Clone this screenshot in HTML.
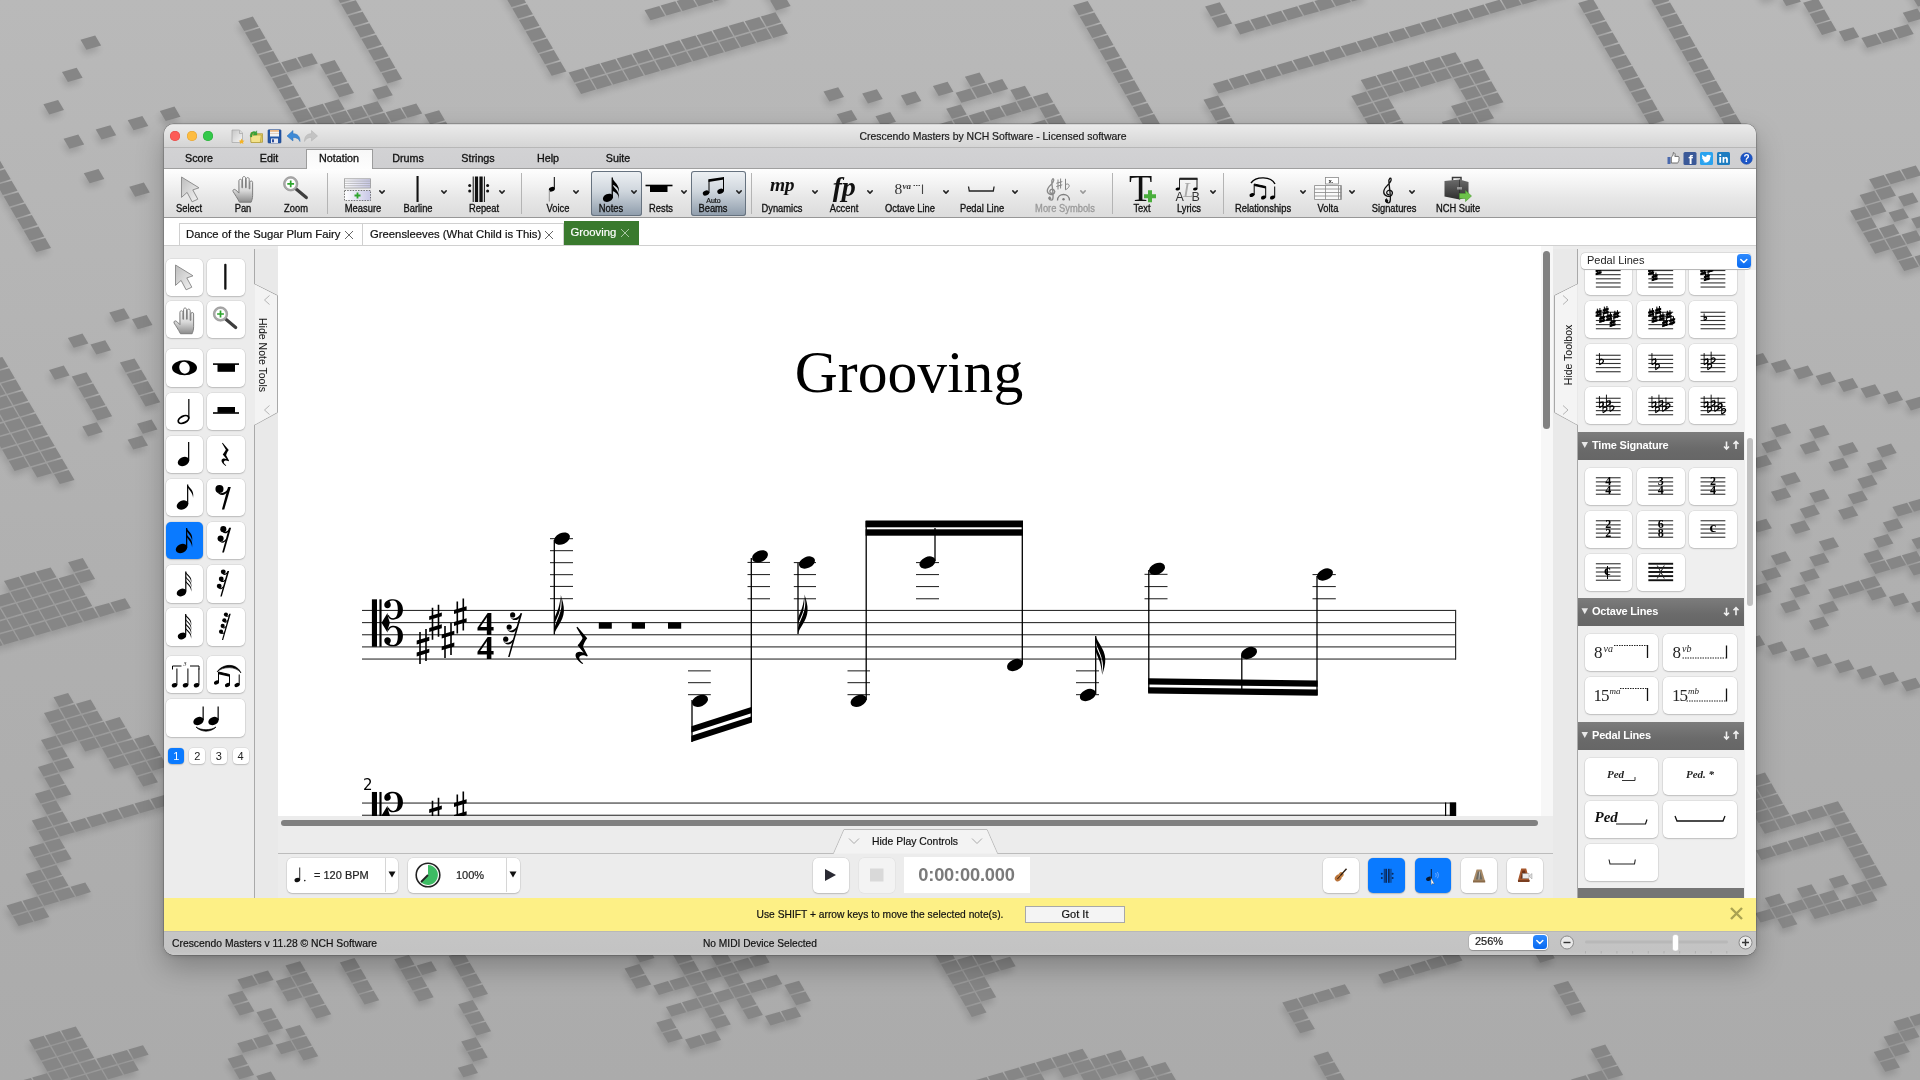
<!DOCTYPE html><html><head><meta charset="utf-8"><title>Crescendo Masters</title><style>
*{box-sizing:border-box;margin:0;padding:0}
html,body{width:1920px;height:1080px;overflow:hidden}
body{background:#b9b9b9;font-family:"Liberation Sans",sans-serif;position:relative;color:#111}
.abs{position:absolute}
#bg{position:absolute;left:0;top:0;width:1920px;height:1080px}
#win{position:absolute;left:164px;top:124px;width:1592px;height:831px;border-radius:10px;overflow:hidden;box-shadow:0 0 0 .5px rgba(0,0,0,.3),0 12px 28px rgba(0,0,0,.26),0 1px 5px rgba(0,0,0,.14);background:#ececec}
#in{position:absolute;left:-164px;top:-124px;width:1920px;height:1080px;will-change:transform}
.t{position:absolute;white-space:nowrap;line-height:1}
.c{transform:translateX(-50%)}
.btn{position:absolute;background:#fff;border-radius:5px;box-shadow:0 0 0 .5px rgba(0,0,0,.10),0 1px 1.5px rgba(0,0,0,.16)}
.btn.on{background:#0a7aff}
svg{position:absolute;overflow:visible}
</style></head><body><svg id="bg" width="1920" height="1080" viewBox="0 0 1920 1080"><defs><linearGradient id="bgg" x1="0" y1="0" x2="0" y2="1"><stop offset="0" stop-color="#b9b9b9"/><stop offset=".53" stop-color="#b0b0b0"/><stop offset="1" stop-color="#ababab"/></linearGradient><filter id="bl" x="-5%" y="-5%" width="110%" height="110%"><feGaussianBlur stdDeviation="3"/></filter></defs><rect width="1920" height="1080" fill="url(#bgg)"/><path d="M16.2 1082.1L30.9 1077.9L36.4 1087.4L21.8 1091.7ZM32.2 1077.5L46.9 1073.2L52.5 1082.7L37.8 1087.0ZM29.1 1040.1L43.7 1035.8L49.3 1045.3L34.7 1049.6ZM35.5 1051.0L50.1 1046.7L55.7 1056.3L41.1 1060.5ZM41.9 1061.9L56.5 1057.6L62.1 1067.2L47.4 1071.4ZM48.2 1072.8L62.9 1068.5L68.5 1078.1L53.8 1082.3ZM45.1 1035.4L59.8 1031.1L65.4 1040.7L50.7 1045.0ZM51.5 1046.3L66.2 1042.1L71.7 1051.6L57.1 1055.9ZM57.9 1057.2L72.5 1053.0L78.1 1062.5L63.5 1066.8ZM64.3 1068.1L78.9 1063.9L84.5 1073.4L69.8 1077.7ZM70.6 1079.0L85.3 1074.8L90.9 1084.3L76.2 1088.6ZM61.1 1030.7L75.8 1026.5L81.4 1036.0L66.7 1040.3ZM67.5 1041.7L82.2 1037.4L87.8 1046.9L73.1 1051.2ZM73.9 1052.6L88.6 1048.3L94.2 1057.8L79.5 1062.1ZM80.3 1063.5L94.9 1059.2L100.5 1068.7L85.9 1073.0ZM86.7 1074.4L101.3 1070.1L106.9 1079.6L92.2 1083.9ZM6.5 905.4L21.2 901.1L26.8 910.8L12.2 915.0ZM13.0 916.4L27.6 912.1L33.3 921.8L18.6 926.0ZM96.3 1058.8L111.0 1054.5L116.5 1064.1L101.9 1068.3ZM102.7 1069.7L117.3 1065.4L122.9 1075.0L108.3 1079.2ZM22.6 900.7L37.2 896.5L42.9 906.1L28.2 910.4ZM29.0 911.7L43.7 907.5L49.3 917.1L34.6 921.4ZM112.3 1054.2L127.0 1049.9L132.6 1059.4L117.9 1063.7ZM118.7 1065.0L133.4 1060.8L138.9 1070.3L124.3 1074.6ZM25.7 874.0L40.3 869.8L46.0 879.4L31.3 883.7ZM32.1 885.1L46.8 880.8L52.4 890.4L37.8 894.7ZM38.6 896.1L53.2 891.8L58.9 901.5L44.2 905.7ZM128.4 1049.5L143.0 1045.2L148.6 1054.8L133.9 1059.0ZM28.8 847.3L43.4 843.0L49.1 852.7L34.4 857.0ZM35.2 858.3L49.9 854.1L55.5 863.7L40.9 868.0ZM41.7 869.4L56.4 865.1L62.0 874.8L47.3 879.0ZM48.1 880.4L62.8 876.1L68.5 885.8L53.8 890.0ZM54.6 891.4L69.3 887.2L74.9 896.8L60.2 901.1ZM31.8 820.5L46.5 816.3L52.2 825.9L37.5 830.2ZM38.3 831.6L53.0 827.3L58.6 837.0L44.0 841.3ZM44.8 842.6L59.5 838.4L65.1 848.0L50.4 852.3ZM51.3 853.7L65.9 849.4L71.6 859.1L56.9 863.3ZM70.6 886.8L85.3 882.5L90.9 892.1L76.3 896.4ZM34.9 793.7L49.6 789.5L55.2 799.2L40.6 803.4ZM41.4 804.8L56.0 800.5L61.7 810.2L47.1 814.5ZM47.9 815.9L62.5 811.6L68.2 821.3L53.5 825.5ZM54.3 826.9L69.0 822.7L74.7 832.3L60.0 836.6ZM37.9 766.9L52.6 762.6L58.3 772.3L43.6 776.6ZM44.4 778.0L59.1 773.7L64.8 783.4L50.1 787.7ZM50.9 789.1L65.6 784.8L71.3 794.5L56.6 798.8ZM70.4 822.3L85.0 818.0L90.7 827.7L76.0 831.9ZM-17.8 639.7L-3.1 635.4L2.6 645.2L-12.1 649.5ZM41.0 740.0L55.6 735.8L61.3 745.5L46.7 749.7ZM47.5 751.1L62.1 746.9L67.8 756.6L53.2 760.8ZM54.0 762.2L68.6 758.0L74.3 767.7L59.6 771.9ZM86.4 817.6L101.0 813.4L106.7 823.0L92.1 827.3ZM227.6 1058.8L242.2 1054.6L247.8 1064.1L233.1 1068.3ZM233.9 1069.7L248.6 1065.4L254.1 1074.9L239.5 1079.2ZM-21.5 601.4L-6.8 597.2L-1.1 607.0L-15.7 611.2ZM-14.9 612.6L-0.2 608.4L5.5 618.2L-9.2 622.4ZM-8.3 623.8L6.3 619.6L12.1 629.4L-2.6 633.6ZM-1.8 635.0L12.9 630.8L18.6 640.6L3.9 644.8ZM44.0 713.1L58.6 708.9L64.3 718.6L49.7 722.9ZM50.5 724.3L65.1 720.0L70.8 729.7L56.2 734.0ZM57.0 735.4L71.6 731.1L77.3 740.8L62.7 745.1ZM102.4 813.0L117.1 808.7L122.7 818.4L108.1 822.6ZM237.2 1043.3L251.9 1039.0L257.4 1048.5L242.8 1052.8ZM256.3 1075.9L270.9 1071.6L276.5 1081.1L261.8 1085.4ZM-5.4 596.8L9.2 592.5L15.0 602.3L0.3 606.6ZM1.1 608.0L15.8 603.7L21.5 613.5L6.9 617.8ZM7.7 619.2L22.4 614.9L28.1 624.7L13.4 629.0ZM14.2 630.4L28.9 626.1L34.6 635.9L20.0 640.2ZM53.5 697.3L68.1 693.1L73.8 702.8L59.2 707.1ZM60.0 708.5L74.6 704.2L80.3 714.0L65.7 718.2ZM66.5 719.6L81.2 715.3L86.9 725.1L72.2 729.3ZM73.0 730.7L87.7 726.5L93.4 736.2L78.7 740.4ZM79.5 741.8L94.2 737.6L99.9 747.3L85.2 751.5ZM118.4 808.3L133.1 804.0L138.8 813.7L124.1 818.0ZM227.7 995.0L242.4 990.8L248.0 1000.3L233.3 1004.6ZM234.1 1005.9L248.8 1001.7L254.4 1011.2L239.7 1015.5ZM253.2 1038.6L267.9 1034.3L273.5 1043.9L258.8 1048.1ZM4.0 580.9L18.7 576.7L24.4 586.5L9.8 590.7ZM10.6 592.1L25.3 587.9L31.0 597.7L16.3 601.9ZM17.2 603.3L31.8 599.1L37.6 608.9L22.9 613.1ZM23.7 614.5L38.4 610.3L44.1 620.1L29.4 624.3ZM30.3 625.7L44.9 621.5L50.7 631.3L36.0 635.5ZM76.0 703.8L90.7 699.6L96.4 709.3L81.7 713.6ZM82.5 714.9L97.2 710.7L102.9 720.4L88.2 724.7ZM89.0 726.1L103.7 721.8L109.4 731.5L94.7 735.8ZM95.5 737.2L110.2 732.9L115.9 742.6L101.2 746.9ZM102.0 748.3L116.7 744.0L122.4 753.7L107.7 758.0ZM108.5 759.4L123.2 755.1L128.9 764.8L114.2 769.1ZM134.5 803.6L149.1 799.4L154.8 809.0L140.1 813.3ZM237.4 979.4L252.0 975.2L257.6 984.7L242.9 989.0ZM256.5 1012.2L271.2 1007.9L276.7 1017.4L262.1 1021.7ZM262.9 1023.1L277.5 1018.8L283.1 1028.3L268.5 1032.6ZM275.6 1044.8L290.3 1040.5L295.8 1050.1L281.2 1054.3ZM20.0 576.3L34.7 572.0L40.5 581.8L25.8 586.1ZM26.6 587.5L41.3 583.2L47.0 593.0L32.4 597.3ZM33.2 598.7L47.8 594.4L53.6 604.2L38.9 608.5ZM39.7 609.9L54.4 605.6L60.1 615.4L45.5 619.7ZM46.3 621.1L61.0 616.8L66.7 626.6L52.0 630.9ZM105.1 721.4L119.7 717.1L125.4 726.9L110.7 731.1ZM111.6 732.5L126.2 728.3L131.9 738.0L117.2 742.2ZM118.1 743.6L132.7 739.4L138.4 749.1L123.7 753.3ZM124.6 754.7L139.2 750.4L144.9 760.1L130.2 764.4ZM131.0 765.8L145.7 761.5L151.4 771.2L136.7 775.5ZM137.5 776.9L152.2 772.6L157.9 782.3L143.2 786.5ZM150.5 799.0L165.1 794.7L170.8 804.4L156.1 808.6ZM253.4 974.8L268.0 970.5L273.6 980.1L259.0 984.3ZM285.3 1029.3L299.9 1025.0L305.5 1034.5L290.8 1038.8ZM291.6 1040.2L306.3 1035.9L311.9 1045.4L297.2 1049.7ZM298.0 1051.0L312.6 1046.7L318.2 1056.2L303.6 1060.5ZM36.1 571.6L50.7 567.4L56.5 577.2L41.8 581.4ZM42.6 582.8L57.3 578.6L63.0 588.4L48.4 592.6ZM49.2 594.0L63.9 589.8L69.6 599.6L54.9 603.8ZM55.8 605.2L70.4 601.0L76.2 610.8L61.5 615.0ZM62.3 616.4L77.0 612.2L82.7 621.9L68.0 626.2ZM134.1 739.0L148.7 734.7L154.4 744.4L139.8 748.7ZM140.6 750.0L155.2 745.8L160.9 755.5L146.3 759.7ZM147.1 761.1L161.7 756.9L167.4 766.6L152.7 770.8ZM275.8 981.0L290.4 976.8L296.0 986.3L281.4 990.6ZM282.2 991.9L296.8 987.7L302.4 997.2L287.7 1001.5ZM-27.1 431.8L-12.5 427.5L-6.7 437.4L-21.3 441.7ZM-20.5 443.1L-5.8 438.8L-0.0 448.7L-14.7 453.0ZM58.7 578.2L73.3 573.9L79.1 583.7L64.4 588.0ZM65.2 589.4L79.9 585.1L85.6 594.9L71.0 599.2ZM71.8 600.6L86.5 596.3L92.2 606.1L77.5 610.4ZM78.3 611.8L93.0 607.5L98.7 617.3L84.1 621.5ZM285.4 965.4L300.1 961.2L305.7 970.7L291.0 975.0ZM291.8 976.4L306.5 972.1L312.0 981.6L297.4 985.9ZM298.2 987.3L312.8 983.0L318.4 992.5L303.8 996.8ZM304.6 998.2L319.2 993.9L324.8 1003.4L310.1 1007.7ZM310.9 1009.1L325.6 1004.8L331.2 1014.3L316.5 1018.6ZM-24.4 404.5L-9.7 400.2L-3.9 410.1L-18.6 414.4ZM-17.7 415.8L-3.1 411.5L2.7 421.4L-11.9 425.7ZM-11.1 427.1L3.6 422.9L9.4 432.8L-5.3 437.0ZM-4.5 438.4L10.2 434.2L16.0 444.1L1.3 448.3ZM2.2 449.7L16.8 445.5L22.6 455.4L7.9 459.6ZM8.8 461.0L23.4 456.8L29.2 466.6L14.6 470.9ZM68.1 562.3L82.8 558.1L88.5 567.9L73.9 572.1ZM74.7 573.5L89.4 569.3L95.1 579.1L80.4 583.3ZM94.4 607.1L109.0 602.9L114.8 612.6L100.1 616.9ZM-15.0 388.5L-0.3 384.2L5.5 394.1L-9.2 398.4ZM-8.3 399.8L6.3 395.6L12.1 405.5L-2.5 409.7ZM-1.7 411.1L13.0 406.9L18.8 416.8L4.1 421.0ZM4.9 422.5L19.6 418.2L25.4 428.1L10.7 432.4ZM11.6 433.8L26.2 429.5L32.0 439.4L17.4 443.7ZM18.2 445.1L32.8 440.8L38.6 450.7L24.0 455.0ZM24.8 456.4L39.5 452.1L45.3 462.0L30.6 466.2ZM31.4 467.7L46.1 463.4L51.9 473.3L37.2 477.5ZM110.4 602.5L125.1 598.2L130.8 608.0L116.1 612.2ZM-12.3 361.1L2.4 356.9L8.2 366.8L-6.4 371.1ZM-5.6 372.5L9.1 368.2L14.9 378.2L0.2 382.4ZM1.0 383.8L15.7 379.6L21.5 389.5L6.9 393.7ZM7.7 395.2L22.3 390.9L28.2 400.8L13.5 405.1ZM14.3 406.5L29.0 402.2L34.8 412.1L20.1 416.4ZM21.0 417.8L35.6 413.6L41.4 423.5L26.8 427.7ZM27.6 429.1L42.2 424.9L48.0 434.8L33.4 439.0ZM34.2 440.4L48.9 436.2L54.7 446.1L40.0 450.3ZM40.8 451.7L55.5 447.5L61.3 457.3L46.6 461.6ZM47.4 463.0L62.1 458.8L67.9 468.6L53.2 472.9ZM54.1 474.3L68.7 470.0L74.5 479.9L59.8 484.1ZM339.9 962.4L354.5 958.1L360.1 967.6L345.4 971.9ZM346.2 973.3L360.9 969.0L366.5 978.5L351.8 982.8ZM352.6 984.2L367.3 979.9L372.8 989.4L358.2 993.7ZM359.0 995.0L373.6 990.8L379.2 1000.3L364.6 1004.6ZM49.1 369.9L63.8 365.6L69.6 375.6L54.9 379.8ZM82.3 426.5L96.9 422.2L102.7 432.1L88.1 436.4ZM394.3 959.2L408.9 955.0L414.5 964.5L399.9 968.8ZM400.7 970.1L415.3 965.9L420.9 975.4L406.2 979.7ZM407.0 981.0L421.7 976.8L427.3 986.3L412.6 990.6ZM413.4 991.9L428.1 987.6L433.6 997.2L419.0 1001.4ZM457.8 1067.8L472.5 1063.6L478.0 1073.0L463.4 1077.3ZM71.8 376.6L86.5 372.3L92.3 382.2L77.6 386.5ZM78.4 387.9L93.1 383.6L98.9 393.5L84.2 397.8ZM85.1 399.2L99.7 395.0L105.5 404.9L90.9 409.1ZM91.7 410.5L106.4 406.3L112.1 416.2L97.5 420.4ZM416.7 965.5L431.3 961.2L436.9 970.7L422.3 975.0ZM461.2 1041.5L475.8 1037.2L481.4 1046.7L466.7 1051.0ZM467.5 1052.3L482.2 1048.1L487.7 1057.5L473.1 1061.8ZM67.9 337.9L82.5 333.6L88.4 343.6L73.7 347.8ZM127.6 439.8L142.2 435.5L148.0 445.4L133.3 449.6ZM458.2 1004.3L472.8 1000.0L478.4 1009.5L463.7 1013.8ZM464.5 1015.2L479.2 1010.9L484.7 1020.4L470.1 1024.6ZM470.9 1026.0L485.5 1021.7L491.1 1031.2L476.4 1035.5ZM-23.2 150.5L-8.6 146.3L-2.7 156.3L-17.3 160.6ZM-16.5 162.0L-1.8 157.8L4.1 167.8L-10.6 172.0ZM-9.8 173.5L4.9 169.2L10.8 179.3L-3.9 183.5ZM-3.0 184.9L11.6 180.7L17.5 190.7L2.8 195.0ZM3.7 196.4L18.3 192.2L24.2 202.2L9.5 206.4ZM10.4 207.9L25.1 203.6L30.9 213.6L16.3 217.9ZM17.1 219.3L31.8 215.0L37.6 225.0L23.0 229.3ZM23.8 230.7L38.5 226.5L44.3 236.5L29.7 240.7ZM30.5 242.1L45.2 237.9L51.0 247.9L36.4 252.1ZM90.5 344.6L105.2 340.3L111.0 350.3L96.4 354.5ZM137.0 423.8L151.6 419.6L157.4 429.4L142.8 433.7ZM448.7 956.1L463.4 951.9L468.9 961.4L454.3 965.7ZM455.1 967.0L469.7 962.7L475.3 972.3L460.7 976.5ZM461.5 977.9L476.1 973.6L481.7 983.1L467.0 987.4ZM467.8 988.8L482.5 984.5L488.0 994.0L473.4 998.3ZM119.9 362.6L134.5 358.4L140.3 368.3L125.7 372.5ZM126.5 373.9L141.2 369.7L147.0 379.6L132.3 383.8ZM133.1 385.3L147.8 381.0L153.6 390.9L138.9 395.2ZM139.8 396.6L154.4 392.3L160.2 402.2L145.6 406.5ZM109.3 312.6L124.0 308.3L129.8 318.3L115.1 322.5ZM132.0 319.3L146.6 315.0L152.5 325.0L137.8 329.2ZM43.4 104.3L58.1 100.1L64.0 110.1L49.3 114.4ZM63.6 138.8L78.3 134.5L84.2 144.6L69.5 148.8ZM83.8 173.2L98.5 168.9L104.3 178.9L89.7 183.2ZM62.0 72.0L76.7 67.8L82.6 77.8L67.9 82.1ZM95.7 129.5L110.4 125.2L116.2 135.3L101.6 139.5ZM129.3 186.8L143.9 182.5L149.8 192.5L135.1 196.8ZM80.5 39.7L95.2 35.4L101.1 45.5L86.4 49.8ZM127.7 120.2L142.4 115.9L148.3 126.0L133.6 130.2ZM624.6 968.4L639.3 964.1L644.8 973.6L630.2 977.9ZM631.0 979.2L645.6 974.9L651.2 984.4L636.5 988.7ZM656.3 1022.5L671.0 1018.2L676.5 1027.7L661.8 1032.0ZM662.6 1033.3L677.3 1029.0L682.8 1038.5L668.2 1042.8ZM634.3 952.9L649.0 948.6L654.5 958.1L639.9 962.3ZM653.3 985.4L668.0 981.1L673.5 990.6L658.9 994.9ZM666.0 1007.0L680.7 1002.7L686.2 1012.2L671.5 1016.5ZM685.0 1039.4L699.6 1035.1L705.1 1044.6L690.5 1048.9ZM159.8 110.9L174.5 106.6L180.4 116.7L165.7 120.9ZM669.4 980.7L684.0 976.4L689.5 985.9L674.9 990.2ZM682.0 1002.3L696.7 998.1L702.2 1007.5L687.6 1011.8ZM701.0 1034.7L715.6 1030.5L721.1 1039.9L706.5 1044.2ZM672.7 954.3L687.3 950.1L692.9 959.5L678.2 963.8ZM679.0 965.2L693.7 960.9L699.2 970.4L684.6 974.7ZM685.4 976.0L700.0 971.7L705.6 981.2L690.9 985.5ZM691.7 986.8L706.4 982.6L711.9 992.0L697.2 996.3ZM698.0 997.7L712.7 993.4L718.2 1002.8L703.6 1007.1ZM704.4 1008.5L719.0 1004.2L724.5 1013.6L709.9 1017.9ZM710.7 1019.3L725.3 1015.0L730.8 1024.4L716.2 1028.7ZM701.4 971.3L716.0 967.0L721.6 976.5L706.9 980.8ZM714.0 993.0L728.7 988.7L734.2 998.1L719.6 1002.4ZM711.0 955.8L725.7 951.5L731.2 961.0L716.6 965.3ZM717.4 966.7L732.0 962.4L737.6 971.8L722.9 976.1ZM723.7 977.5L738.4 973.2L743.9 982.7L729.3 986.9ZM730.1 988.3L744.7 984.0L750.2 993.5L735.6 997.7ZM736.4 999.1L751.0 994.8L756.6 1004.3L741.9 1008.5ZM742.7 1009.9L757.3 1005.6L762.9 1015.1L748.2 1019.3ZM733.4 962.0L748.0 957.7L753.6 967.2L738.9 971.4ZM746.1 983.6L760.7 979.3L766.2 988.8L751.6 993.1ZM765.0 1016.0L779.7 1011.7L785.2 1021.1L770.5 1025.4ZM749.4 957.3L764.1 953.0L769.6 962.5L755.0 966.8ZM762.1 978.9L776.7 974.6L782.3 984.1L767.6 988.4ZM781.0 1011.3L795.7 1007.0L801.2 1016.5L786.5 1020.8ZM784.4 985.0L799.1 980.8L804.6 990.2L789.9 994.5ZM790.7 995.8L805.4 991.6L810.9 1001.0L796.2 1005.3ZM238.3 20.9L252.9 16.6L258.8 26.7L244.2 31.0ZM245.0 32.4L259.7 28.1L265.6 38.2L250.9 42.5ZM251.8 43.9L266.4 39.6L272.3 49.7L257.7 54.0ZM258.5 55.4L273.2 51.1L279.1 61.2L264.4 65.4ZM265.2 66.9L279.9 62.6L285.8 72.7L271.1 76.9ZM272.0 78.4L286.6 74.1L292.5 84.1L277.9 88.4ZM278.7 89.8L293.4 85.6L299.2 95.6L284.6 99.8ZM285.4 101.3L300.1 97.0L306.0 107.0L291.3 111.3ZM292.1 112.7L306.8 108.5L312.7 118.5L298.0 122.7ZM298.8 124.2L313.5 119.9L319.4 129.9L304.7 134.2ZM281.3 62.2L295.9 58.0L301.8 68.0L287.2 72.3ZM308.2 108.1L322.8 103.8L328.7 113.8L314.0 118.1ZM314.9 119.5L329.5 115.3L335.4 125.3L320.7 129.5ZM297.3 57.6L312.0 53.3L317.8 63.4L303.2 67.6ZM324.2 103.4L338.8 99.2L344.7 109.2L330.1 113.4ZM330.9 114.9L345.6 110.6L351.4 120.6L336.8 124.9ZM337.6 126.3L352.3 122.0L358.1 132.0L343.5 136.3ZM320.0 64.4L334.7 60.1L340.6 70.2L325.9 74.4ZM326.8 75.9L341.4 71.6L347.3 81.6L332.7 85.9ZM333.5 87.3L348.2 83.1L354.0 93.1L339.4 97.3ZM346.9 110.2L361.6 105.9L367.4 115.9L352.8 120.2ZM353.6 121.6L368.3 117.4L374.1 127.4L359.5 131.6ZM362.9 105.5L377.6 101.3L383.5 111.3L368.8 115.6ZM369.6 117.0L384.3 112.7L390.2 122.7L375.5 127.0ZM372.2 89.5L386.9 85.2L392.8 95.2L378.1 99.5ZM385.7 112.3L400.3 108.1L406.2 118.1L391.5 122.3ZM334.4 -7.0L349.1 -11.3L355.0 -1.2L340.3 3.1ZM341.2 4.5L355.8 0.2L361.7 10.3L347.1 14.6ZM347.9 16.0L362.6 11.7L368.5 21.8L353.8 26.0ZM354.7 27.5L369.3 23.2L375.2 33.3L360.5 37.5ZM361.4 39.0L376.0 34.7L381.9 44.7L367.3 49.0ZM368.1 50.4L382.8 46.2L388.7 56.2L374.0 60.5ZM374.8 61.9L389.5 57.6L395.4 67.7L380.7 71.9ZM381.6 73.3L396.2 69.1L402.1 79.1L387.4 83.4ZM401.7 107.7L416.3 103.4L422.2 113.4L407.5 117.7ZM971.9 1081.2L986.6 1076.9L992.1 1086.3L977.4 1090.6ZM424.4 114.4L439.1 110.2L444.9 120.2L430.3 124.4ZM431.1 125.8L445.8 121.6L451.6 131.6L437.0 135.8ZM987.9 1076.5L1002.6 1072.2L1008.1 1081.6L993.4 1085.9ZM934.8 953.6L949.4 949.3L955.0 958.8L940.3 963.1ZM941.1 964.4L955.8 960.1L961.3 969.6L946.6 973.9ZM947.4 975.2L962.1 970.9L967.6 980.3L952.9 984.6ZM953.7 986.0L968.4 981.7L973.9 991.1L959.2 995.4ZM960.0 996.7L974.7 992.4L980.2 1001.8L965.5 1006.1ZM966.3 1007.5L981.0 1003.2L986.5 1012.6L971.8 1016.9ZM1004.0 1071.8L1018.6 1067.5L1024.1 1076.9L1009.4 1081.2ZM957.1 959.7L971.8 955.4L977.3 964.9L962.6 969.2ZM963.4 970.5L978.1 966.2L983.6 975.6L968.9 979.9ZM969.7 981.3L984.4 977.0L989.9 986.4L975.2 990.7ZM976.0 992.0L990.7 987.7L996.2 997.2L981.5 1001.5ZM1020.0 1067.1L1034.6 1062.8L1040.1 1072.2L1025.4 1076.5ZM1026.2 1077.8L1040.9 1073.5L1046.3 1082.9L1031.7 1087.2ZM973.1 955.0L987.8 950.8L993.3 960.2L978.6 964.5ZM979.4 965.8L994.1 961.5L999.6 970.9L984.9 975.2ZM1036.0 1062.4L1050.6 1058.1L1056.1 1067.5L1041.4 1071.8ZM995.4 961.1L1010.1 956.8L1015.6 966.3L1001.0 970.5ZM1052.0 1057.7L1066.6 1053.4L1072.1 1062.8L1057.4 1067.1ZM1058.2 1068.4L1072.9 1064.1L1078.3 1073.5L1063.7 1077.8ZM1068.0 1053.0L1082.6 1048.7L1088.1 1058.1L1073.4 1062.4ZM1074.2 1063.7L1088.9 1059.4L1094.3 1068.8L1079.7 1073.1ZM1080.5 1074.4L1095.1 1070.1L1100.6 1079.5L1085.9 1083.8ZM1090.2 1059.0L1104.9 1054.7L1110.3 1064.1L1095.7 1068.4ZM1096.5 1069.7L1111.1 1065.4L1116.6 1074.8L1101.9 1079.1ZM1106.2 1054.3L1120.9 1050.0L1126.3 1059.4L1111.7 1063.7ZM1112.5 1065.0L1127.1 1060.7L1132.6 1070.1L1118.0 1074.4ZM498.9 -14.4L513.5 -18.7L519.4 -8.7L504.7 -4.4ZM505.6 -3.0L520.2 -7.2L526.1 2.8L511.5 7.1ZM512.3 8.5L527.0 4.2L532.9 14.3L518.2 18.5ZM519.0 20.0L533.7 15.7L539.6 25.7L524.9 30.0ZM525.7 31.4L540.4 27.2L546.3 37.2L531.6 41.4ZM532.5 42.9L547.1 38.6L553.0 48.6L538.3 52.9ZM539.2 54.3L553.8 50.0L559.7 60.0L545.0 64.3ZM545.9 65.7L560.5 61.5L566.4 71.5L551.7 75.7ZM1128.5 1060.3L1143.1 1056.0L1148.6 1065.4L1134.0 1069.7ZM1134.7 1071.0L1149.4 1066.7L1154.8 1076.0L1140.2 1080.3ZM1141.0 1081.7L1155.6 1077.4L1161.1 1086.7L1146.4 1091.0ZM568.6 72.5L583.2 68.2L589.1 78.2L574.4 82.5ZM575.3 83.9L589.9 79.6L595.8 89.6L581.1 93.9ZM1150.7 1066.3L1165.4 1062.0L1170.8 1071.3L1156.2 1075.6ZM1157.0 1077.0L1171.6 1072.7L1177.1 1082.0L1162.4 1086.3ZM584.6 67.8L599.3 63.6L605.1 73.5L590.5 77.8ZM591.3 79.2L606.0 75.0L611.8 84.9L597.1 89.2ZM600.6 63.2L615.3 58.9L621.1 68.9L606.5 73.1ZM607.3 74.6L622.0 70.3L627.8 80.3L613.2 84.5ZM616.6 58.5L631.3 54.2L637.2 64.2L622.5 68.5ZM623.3 69.9L638.0 65.6L643.8 75.6L629.2 79.9ZM632.7 53.8L647.3 49.6L653.2 59.5L638.5 63.8ZM639.4 65.2L654.0 61.0L659.9 70.9L645.2 75.2ZM648.7 49.2L663.3 44.9L669.2 54.9L654.5 59.1ZM655.4 60.6L670.0 56.3L675.9 66.3L661.2 70.5ZM644.6 10.2L659.3 6.0L665.1 16.0L650.5 20.2ZM664.7 44.5L679.4 40.2L685.2 50.2L670.6 54.5ZM671.4 55.9L686.0 51.6L691.9 61.6L677.2 65.9ZM660.6 5.6L675.3 1.3L681.1 11.3L666.5 15.6ZM680.7 39.8L695.4 35.6L701.2 45.5L686.6 49.8ZM687.4 51.2L702.1 47.0L707.9 56.9L693.3 61.2ZM676.6 0.9L691.3 -3.4L697.2 6.6L682.5 10.9ZM696.7 35.2L711.4 30.9L717.2 40.9L702.6 45.1ZM703.4 46.6L718.1 42.3L723.9 52.3L709.3 56.5ZM692.6 -3.8L707.3 -8.0L713.2 2.0L698.5 6.2ZM712.7 30.5L727.4 26.2L733.3 36.2L718.6 40.5ZM719.4 41.9L734.1 37.6L739.9 47.6L725.3 51.9ZM1282.3 1002.6L1296.9 998.3L1302.4 1007.7L1287.7 1012.0ZM1288.5 1013.3L1303.2 1009.0L1308.6 1018.3L1294.0 1022.6ZM1294.8 1024.0L1309.4 1019.7L1314.9 1029.0L1300.2 1033.3ZM1313.5 1055.9L1328.1 1051.6L1333.5 1060.9L1318.9 1065.2ZM1319.7 1066.6L1334.3 1062.3L1339.8 1071.6L1325.1 1075.9ZM1325.9 1077.2L1340.5 1072.9L1346.0 1082.2L1331.3 1086.5ZM708.7 -8.4L723.3 -12.7L729.2 -2.7L714.5 1.6ZM728.8 25.8L743.4 21.6L749.3 31.5L734.6 35.8ZM735.5 37.2L750.1 33.0L756.0 42.9L741.3 47.2ZM1298.3 997.9L1312.9 993.6L1318.4 1003.0L1303.7 1007.3ZM744.8 21.2L759.4 16.9L765.3 26.9L750.6 31.1ZM751.5 32.6L766.1 28.3L772.0 38.3L757.3 42.5ZM1314.3 993.2L1328.9 988.9L1334.4 998.2L1319.7 1002.6ZM760.8 16.5L775.5 12.2L781.3 22.2L766.7 26.5ZM767.5 27.9L782.1 23.6L788.0 33.6L773.3 37.9ZM1330.3 988.5L1344.9 984.2L1350.4 993.5L1335.7 997.8ZM763.4 -11.0L778.1 -15.3L783.9 -5.3L769.3 -1.0ZM770.1 0.4L784.8 -3.9L790.6 6.1L776.0 10.4ZM823.5 91.5L838.2 87.2L844.0 97.1L829.4 101.4ZM836.8 114.2L851.5 109.9L857.3 119.8L842.7 124.1ZM862.2 93.5L876.9 89.2L882.7 99.1L868.0 103.4ZM875.5 116.2L890.2 111.9L896.0 121.8L881.3 126.1ZM1378.3 974.4L1392.9 970.1L1398.4 979.4L1383.7 983.7ZM1394.3 969.7L1408.9 965.4L1414.4 974.7L1399.7 979.0ZM900.9 95.5L915.5 91.2L921.4 101.1L906.7 105.4ZM1410.3 965.0L1424.9 960.7L1430.4 970.0L1415.7 974.3ZM936.8 124.8L951.5 120.5L957.3 130.4L942.6 134.6ZM1426.3 960.3L1440.9 955.9L1446.4 965.3L1431.7 969.6ZM932.9 86.1L947.6 81.8L953.4 91.8L938.7 96.0ZM946.2 108.8L960.9 104.5L966.7 114.4L952.0 118.7ZM952.8 120.1L967.5 115.8L973.3 125.7L958.6 130.0ZM1442.3 955.5L1456.9 951.2L1462.4 960.6L1447.7 964.9ZM955.6 92.8L970.2 88.5L976.0 98.4L961.4 102.7ZM968.8 115.4L983.5 111.1L989.3 121.0L974.6 125.3ZM964.9 76.8L979.6 72.5L985.4 82.4L970.8 86.7ZM971.6 88.1L986.2 83.8L992.0 93.7L977.4 98.0ZM984.9 110.7L999.5 106.4L1005.3 116.3L990.7 120.6ZM987.6 83.4L1002.3 79.1L1008.1 89.0L993.4 93.3ZM1000.9 106.0L1015.5 101.8L1021.3 111.7L1006.7 115.9ZM1571.1 1079.5L1585.7 1075.2L1591.1 1084.5L1576.5 1088.8ZM1010.3 90.1L1024.9 85.8L1030.7 95.7L1016.1 100.0ZM1016.9 101.4L1031.5 97.1L1037.3 107.0L1022.7 111.3ZM1030.1 124.0L1044.8 119.7L1050.6 129.6L1035.9 133.8ZM1587.1 1074.8L1601.7 1070.5L1607.1 1079.7L1592.5 1084.1ZM1032.9 96.7L1047.5 92.4L1053.3 102.3L1038.7 106.6ZM1039.5 108.0L1054.2 103.7L1060.0 113.6L1045.3 117.9ZM1046.1 119.3L1060.8 115.0L1066.6 124.9L1051.9 129.2ZM1534.7 953.3L1549.4 949.0L1554.8 958.3L1540.2 962.7ZM1553.4 985.3L1568.1 981.0L1573.5 990.3L1558.9 994.6ZM1559.7 995.9L1574.3 991.6L1579.7 1000.9L1565.1 1005.2ZM1565.9 1006.5L1580.5 1002.2L1585.9 1011.5L1571.3 1015.8ZM1590.7 1048.9L1605.3 1044.6L1610.7 1053.9L1596.1 1058.2ZM1596.9 1059.5L1611.5 1055.2L1616.9 1064.5L1602.3 1068.8ZM1603.1 1070.1L1617.7 1065.8L1623.1 1075.0L1608.5 1079.3ZM1073.1 5.3L1087.7 1.0L1093.6 11.0L1078.9 15.2ZM1079.7 16.7L1094.4 12.4L1100.2 22.3L1085.6 26.6ZM1086.4 28.0L1101.0 23.7L1106.9 33.6L1092.2 37.9ZM1093.0 39.3L1107.7 35.1L1113.5 45.0L1098.9 49.2ZM1099.7 50.7L1114.3 46.4L1120.1 56.3L1105.5 60.6ZM1106.3 62.0L1121.0 57.7L1126.8 67.6L1112.1 71.9ZM1112.9 73.3L1127.6 69.0L1133.4 78.9L1118.7 83.2ZM1119.6 84.6L1134.2 80.3L1140.0 90.2L1125.4 94.5ZM1126.2 95.9L1140.8 91.6L1146.6 101.5L1132.0 105.7ZM1132.8 107.2L1147.5 102.9L1153.2 112.7L1138.6 117.0ZM1139.4 118.4L1154.1 114.1L1159.9 124.0L1145.2 128.3ZM1203.5 99.7L1218.1 95.4L1223.9 105.3L1209.2 109.5ZM1210.1 110.9L1224.7 106.7L1230.5 116.5L1215.8 120.8ZM1216.7 122.2L1231.3 117.9L1237.1 127.8L1222.4 132.0ZM1212.9 83.7L1227.5 79.4L1233.3 89.3L1218.6 93.6ZM1228.9 79.0L1243.5 74.8L1249.3 84.6L1234.6 88.9ZM1205.1 6.6L1219.8 2.3L1225.6 12.2L1210.9 16.5ZM1211.7 17.9L1226.4 13.6L1232.2 23.5L1217.6 27.8ZM1244.9 74.4L1259.5 70.1L1265.3 79.9L1250.7 84.2ZM1234.4 24.5L1249.0 20.2L1254.8 30.1L1240.2 34.4ZM1260.9 69.7L1275.5 65.4L1281.3 75.2L1266.7 79.5ZM1755.1 913.3L1769.8 909.0L1775.2 918.3L1760.6 922.6ZM1250.4 19.8L1265.0 15.5L1270.8 25.4L1256.2 29.7ZM1276.9 65.0L1291.5 60.7L1297.3 70.5L1282.7 74.8ZM1764.9 897.9L1779.5 893.6L1785.0 902.9L1770.4 907.3ZM1771.1 908.6L1785.8 904.3L1791.2 913.6L1776.6 917.9ZM1777.4 919.2L1792.0 914.9L1797.4 924.2L1782.8 928.5ZM1266.4 15.1L1281.1 10.8L1286.9 20.7L1272.2 25.0ZM1292.9 60.3L1307.5 56.0L1313.3 65.9L1298.7 70.1ZM1755.9 850.6L1770.6 846.3L1776.0 855.6L1761.4 859.9ZM1787.1 903.9L1801.8 899.5L1807.2 908.8L1792.6 913.2ZM1873.8 1052.0L1888.4 1047.7L1893.8 1056.9L1879.2 1061.2ZM1879.9 1062.5L1894.6 1058.2L1900.0 1067.4L1885.3 1071.7ZM1282.4 10.4L1297.1 6.2L1302.9 16.0L1288.2 20.3ZM1308.9 55.6L1323.5 51.3L1329.3 61.2L1314.7 65.5ZM1740.6 792.4L1755.3 788.0L1760.7 797.4L1746.1 801.7ZM1746.9 803.1L1761.5 798.8L1767.0 808.1L1752.4 812.4ZM1753.2 813.8L1767.8 809.5L1773.3 818.8L1758.6 823.1ZM1759.4 824.5L1774.1 820.2L1779.5 829.5L1764.9 833.8ZM1771.9 845.9L1786.6 841.5L1792.0 850.9L1777.4 855.2ZM1796.9 888.5L1811.5 884.2L1817.0 893.5L1802.3 897.8ZM1803.1 899.1L1817.8 894.8L1823.2 904.1L1808.6 908.4ZM1809.4 909.8L1824.0 905.5L1829.4 914.8L1814.8 919.1ZM1883.6 1036.7L1898.3 1032.4L1903.6 1041.6L1889.0 1045.9ZM1889.8 1047.3L1904.4 1042.9L1909.8 1052.1L1895.2 1056.5ZM1298.4 5.8L1313.1 1.5L1318.9 11.4L1304.2 15.6ZM1324.9 50.9L1339.6 46.6L1345.3 56.5L1330.7 60.8ZM1351.3 95.9L1366.0 91.6L1371.7 101.5L1357.1 105.8ZM1357.9 107.2L1372.5 102.9L1378.3 112.7L1363.7 117.0ZM1364.5 118.4L1379.1 114.1L1384.9 123.9L1370.2 128.2ZM1371.1 129.6L1385.7 125.3L1391.5 135.1L1376.8 139.4ZM1750.3 776.9L1765.0 772.6L1770.5 782.0L1755.8 786.3ZM1756.6 787.6L1771.3 783.3L1776.7 792.7L1762.1 797.0ZM1762.9 798.4L1777.5 794.0L1783.0 803.4L1768.4 807.7ZM1769.2 809.1L1783.8 804.7L1789.3 814.1L1774.6 818.4ZM1775.4 819.8L1790.1 815.4L1795.5 824.8L1780.9 829.1ZM1787.9 841.1L1802.6 836.8L1808.0 846.2L1793.4 850.5ZM1819.1 894.4L1833.8 890.1L1839.2 899.4L1824.6 903.7ZM1825.3 905.1L1840.0 900.7L1845.4 910.0L1830.8 914.4ZM1893.5 1021.5L1908.1 1017.1L1913.5 1026.4L1898.9 1030.7ZM1899.6 1032.0L1914.3 1027.7L1919.6 1036.9L1905.0 1041.2ZM1314.4 1.1L1329.1 -3.2L1334.9 6.7L1320.2 11.0ZM1340.9 46.2L1355.6 41.9L1361.3 51.8L1346.7 56.1ZM1360.7 80.0L1375.4 75.7L1381.1 85.5L1366.5 89.8ZM1367.3 91.2L1382.0 86.9L1387.7 96.8L1373.1 101.1ZM1373.9 102.5L1388.6 98.2L1394.3 108.0L1379.7 112.3ZM1380.5 113.7L1395.1 109.4L1400.9 119.2L1386.3 123.5ZM1387.1 124.9L1401.7 120.6L1407.5 130.4L1392.8 134.7ZM1791.4 815.0L1806.1 810.7L1811.5 820.1L1796.9 824.4ZM1803.9 836.4L1818.6 832.1L1824.0 841.4L1809.4 845.8ZM1828.9 879.1L1843.5 874.7L1849.0 884.0L1834.3 888.4ZM1841.3 900.3L1856.0 896.0L1861.4 905.3L1846.8 909.6ZM1909.4 1016.7L1924.1 1012.4L1929.5 1021.6L1914.8 1026.0ZM1330.4 -3.6L1345.1 -7.9L1350.9 2.0L1336.2 6.3ZM1356.9 41.5L1371.6 37.2L1377.4 47.1L1362.7 51.4ZM1376.7 75.3L1391.4 71.0L1397.1 80.9L1382.5 85.1ZM1383.3 86.6L1398.0 82.3L1403.7 92.1L1389.1 96.4ZM1807.4 810.3L1822.0 806.0L1827.5 815.4L1812.9 819.7ZM1819.9 831.7L1834.6 827.4L1840.0 836.7L1825.4 841.0ZM1851.1 885.0L1865.7 880.7L1871.2 890.0L1856.6 894.3ZM1857.3 895.6L1872.0 891.3L1877.4 900.6L1862.8 904.9ZM1346.4 -8.3L1361.1 -12.6L1366.9 -2.7L1352.2 1.6ZM1372.9 36.8L1387.6 32.5L1393.4 42.4L1378.7 46.7ZM1392.7 70.6L1407.4 66.3L1413.2 76.2L1398.5 80.5ZM1399.3 81.9L1414.0 77.6L1419.7 87.4L1405.1 91.7ZM1823.4 805.6L1838.0 801.3L1843.5 810.6L1828.9 815.0ZM1829.7 816.3L1844.3 812.0L1849.8 821.3L1835.1 825.6ZM1835.9 827.0L1850.5 822.7L1856.0 832.0L1841.4 836.3ZM1842.2 837.6L1856.8 833.3L1862.3 842.7L1847.6 847.0ZM1848.4 848.3L1863.0 844.0L1868.5 853.3L1853.9 857.6ZM1854.6 859.0L1869.3 854.6L1874.7 864.0L1860.1 868.3ZM1860.9 869.6L1875.5 865.3L1881.0 874.6L1866.3 878.9ZM1867.1 880.3L1881.7 875.9L1887.2 885.2L1872.5 889.6ZM1388.9 32.1L1403.6 27.9L1409.4 37.7L1394.7 42.0ZM1408.7 65.9L1423.4 61.6L1429.2 71.5L1414.5 75.8ZM1415.3 77.2L1430.0 72.9L1435.7 82.7L1421.1 87.0ZM1441.7 122.0L1456.3 117.8L1462.1 127.6L1447.4 131.9ZM1744.9 639.6L1759.6 635.2L1765.1 644.7L1750.5 649.0ZM1404.9 27.5L1419.6 23.2L1425.4 33.0L1410.7 37.3ZM1424.7 61.2L1439.4 56.9L1445.2 66.8L1430.5 71.1ZM1431.3 72.5L1446.0 68.2L1451.8 78.0L1437.1 82.3ZM1451.1 106.1L1465.7 101.8L1471.5 111.7L1456.8 116.0ZM1457.7 117.4L1472.3 113.1L1478.1 122.9L1463.4 127.2ZM1767.3 645.7L1781.9 641.3L1787.4 650.8L1772.8 655.1ZM1420.9 22.8L1435.6 18.5L1441.4 28.3L1426.7 32.6ZM1440.8 56.5L1455.4 52.2L1461.2 62.1L1446.5 66.4ZM1447.3 67.8L1462.0 63.5L1467.8 73.3L1453.1 77.6ZM1453.9 79.0L1468.6 74.7L1474.3 84.5L1459.7 88.8ZM1460.5 90.2L1475.2 85.9L1480.9 95.8L1466.3 100.0ZM1467.1 101.4L1481.7 97.2L1487.5 107.0L1472.8 111.3ZM1473.7 112.7L1488.3 108.4L1494.1 118.2L1479.4 122.5ZM1751.6 586.8L1766.2 582.5L1771.7 592.0L1757.1 596.3ZM1789.6 651.7L1804.2 647.4L1809.8 656.9L1795.1 661.2ZM1436.9 18.1L1451.6 13.8L1457.4 23.6L1442.7 27.9ZM1463.4 63.1L1478.0 58.8L1483.8 68.6L1469.1 72.9ZM1469.9 74.3L1484.6 70.0L1490.3 79.8L1475.7 84.1ZM1476.5 85.5L1491.2 81.2L1496.9 91.1L1482.3 95.4ZM1483.1 96.8L1497.7 92.5L1503.5 102.3L1488.9 106.6ZM1761.2 571.2L1775.8 566.9L1781.4 576.4L1766.8 580.7ZM1780.2 603.8L1794.9 599.4L1800.4 608.9L1785.8 613.2ZM1811.9 657.8L1826.5 653.5L1832.1 662.9L1817.4 667.3ZM1453.0 13.4L1467.6 9.1L1473.4 18.9L1458.7 23.2ZM1751.7 523.0L1766.3 518.7L1771.9 528.2L1757.3 532.5ZM1770.8 555.7L1785.5 551.3L1791.0 560.8L1776.4 565.2ZM1789.9 588.2L1804.5 583.9L1810.1 593.4L1795.5 597.7ZM1808.9 620.7L1823.6 616.4L1829.1 625.8L1814.5 630.2ZM1834.2 663.9L1848.9 659.6L1854.4 669.0L1839.7 673.3ZM1469.0 8.7L1483.6 4.4L1489.4 14.2L1474.7 18.5ZM1799.5 572.7L1814.2 568.3L1819.7 577.8L1805.1 582.1ZM1818.6 605.2L1833.2 600.8L1838.8 610.3L1824.1 614.6ZM1856.5 669.9L1871.2 665.6L1876.7 675.0L1862.0 679.4ZM1485.0 4.0L1499.6 -0.3L1505.4 9.5L1490.7 13.8ZM1751.7 459.0L1766.4 454.7L1772.0 464.3L1757.3 468.6ZM1770.9 491.8L1785.6 487.5L1791.2 497.0L1776.5 501.3ZM1790.1 524.5L1804.7 520.2L1810.3 529.7L1795.7 534.0ZM1809.2 557.1L1823.8 552.8L1829.4 562.3L1814.7 566.6ZM1828.2 589.6L1842.9 585.3L1848.4 594.8L1833.8 599.1ZM1878.8 676.0L1893.5 671.7L1899.0 681.1L1884.3 685.4ZM1501.0 -0.7L1515.6 -5.0L1521.4 4.8L1506.7 9.1ZM1761.3 443.4L1776.0 439.1L1781.6 448.7L1766.9 453.0ZM1780.5 476.2L1795.2 471.9L1800.8 481.4L1786.1 485.7ZM1799.7 508.9L1814.3 504.6L1819.9 514.1L1805.3 518.4ZM1818.8 541.5L1833.4 537.2L1839.0 546.7L1824.4 551.0ZM1844.2 584.9L1858.9 580.6L1864.4 590.1L1849.8 594.4ZM1901.1 682.0L1915.7 677.7L1921.3 687.1L1906.6 691.4ZM1517.0 -5.4L1531.6 -9.7L1537.4 0.2L1522.8 4.5ZM1770.9 427.7L1785.6 423.4L1791.2 433.0L1776.5 437.3ZM1809.3 493.3L1824.0 489.0L1829.5 498.5L1814.9 502.8ZM1860.2 580.2L1874.9 575.9L1880.4 585.3L1865.8 589.6ZM1866.6 591.0L1881.2 586.7L1886.7 596.2L1872.1 600.5ZM1923.4 688.1L1938.0 683.7L1943.5 693.1L1928.9 697.5ZM1533.0 -10.1L1547.6 -14.4L1553.4 -4.5L1538.8 -0.2ZM1748.3 357.2L1763.0 352.9L1768.6 362.5L1754.0 366.8ZM1799.7 444.9L1814.4 440.6L1820.0 450.2L1805.3 454.5ZM1838.1 510.3L1852.7 506.0L1858.3 515.5L1843.6 519.8ZM1863.5 553.8L1878.2 549.5L1883.7 559.0L1869.1 563.3ZM1869.9 564.6L1884.5 560.3L1890.1 569.8L1875.4 574.1ZM1888.9 597.1L1903.5 592.8L1909.1 602.2L1894.4 606.6ZM1549.0 -14.8L1563.6 -19.1L1569.4 -9.2L1554.8 -4.9ZM1770.8 363.5L1785.4 359.2L1791.1 368.8L1776.4 373.1ZM1809.3 429.3L1824.0 425.0L1829.6 434.5L1814.9 438.8ZM1828.5 462.0L1843.2 457.7L1848.8 467.3L1834.1 471.6ZM1847.7 494.7L1862.3 490.4L1867.9 499.9L1853.3 504.3ZM1873.2 538.2L1887.8 533.9L1893.4 543.4L1878.7 547.7ZM1885.9 559.9L1900.5 555.6L1906.1 565.1L1891.4 569.4ZM1911.2 603.2L1925.9 598.9L1931.4 608.3L1916.8 612.6ZM1578.2 3.0L1592.8 -1.3L1598.6 8.6L1584.0 12.9ZM1584.8 14.3L1599.4 10.0L1605.2 19.8L1590.6 24.1ZM1591.4 25.5L1606.0 21.2L1611.8 31.0L1597.1 35.3ZM1598.0 36.7L1612.6 32.4L1618.4 42.3L1603.7 46.6ZM1604.5 48.0L1619.2 43.7L1624.9 53.5L1610.3 57.8ZM1611.1 59.2L1625.8 54.9L1631.5 64.7L1616.9 69.0ZM1617.7 70.4L1632.3 66.1L1638.1 75.9L1623.4 80.2ZM1624.3 81.6L1638.9 77.3L1644.6 87.1L1630.0 91.4ZM1630.8 92.8L1645.5 88.5L1651.2 98.2L1636.6 102.5ZM1637.4 103.9L1652.0 99.6L1657.7 109.4L1643.1 113.7ZM1643.9 115.1L1658.6 110.8L1664.3 120.6L1649.7 124.9ZM1793.2 369.8L1807.9 365.5L1813.5 375.1L1798.8 379.4ZM1838.1 446.4L1852.8 442.1L1858.4 451.6L1843.7 456.0ZM1857.3 479.1L1871.9 474.8L1877.5 484.3L1862.9 488.7ZM1882.8 522.6L1897.4 518.3L1903.0 527.8L1888.4 532.1ZM1901.9 555.2L1916.5 550.9L1922.0 560.3L1907.4 564.7ZM1908.2 566.0L1922.8 561.7L1928.4 571.2L1913.8 575.5ZM1815.6 376.0L1830.3 371.7L1835.9 381.3L1821.3 385.6ZM1866.9 463.5L1881.5 459.2L1887.1 468.7L1872.5 473.0ZM1892.4 507.1L1907.1 502.7L1912.6 512.2L1898.0 516.6ZM1911.5 539.6L1926.1 535.3L1931.7 544.8L1917.1 549.1ZM1838.1 382.3L1852.7 378.0L1858.3 387.6L1843.7 391.9ZM1876.5 447.9L1891.1 443.6L1896.7 453.1L1882.1 457.4ZM1908.4 502.3L1923.0 498.0L1928.6 507.5L1914.0 511.8ZM1860.5 388.5L1875.1 384.2L1880.7 393.8L1866.1 398.1ZM1648.8 -4.5L1663.4 -8.8L1669.2 1.0L1654.6 5.3ZM1655.4 6.7L1670.0 2.4L1675.8 12.2L1661.1 16.5ZM1662.0 17.9L1676.6 13.6L1682.4 23.4L1667.7 27.7ZM1668.5 29.1L1683.2 24.8L1688.9 34.7L1674.3 39.0ZM1675.1 40.4L1689.8 36.1L1695.5 45.9L1680.9 50.2ZM1681.7 51.6L1696.3 47.3L1702.1 57.1L1687.4 61.4ZM1688.3 62.8L1702.9 58.5L1708.6 68.2L1694.0 72.5ZM1694.8 73.9L1709.5 69.6L1715.2 79.4L1700.6 83.7ZM1701.4 85.1L1716.0 80.8L1721.7 90.6L1707.1 94.9ZM1707.9 96.3L1722.6 92.0L1728.3 101.8L1713.7 106.1ZM1714.5 107.5L1729.1 103.1L1734.8 112.9L1720.2 117.2ZM1721.0 118.6L1735.7 114.3L1741.4 124.1L1726.7 128.4ZM1882.9 394.7L1897.5 390.4L1903.1 400.0L1888.5 404.3ZM1905.3 401.0L1919.9 396.7L1925.5 406.2L1910.9 410.5ZM1927.7 407.2L1942.3 402.9L1947.9 412.4L1933.3 416.7ZM1850.1 210.8L1864.8 206.5L1870.4 216.2L1855.8 220.5ZM1856.6 221.9L1871.3 217.6L1876.9 227.3L1862.3 231.6ZM1863.1 233.0L1877.7 228.6L1883.4 238.3L1868.8 242.6ZM1869.6 244.0L1884.2 239.7L1889.9 249.3L1875.2 253.7ZM1859.6 195.1L1874.3 190.7L1880.0 200.4L1865.3 204.7ZM1866.1 206.1L1880.8 201.8L1886.4 211.5L1871.8 215.8ZM1879.1 228.2L1893.7 223.9L1899.4 233.6L1884.8 237.9ZM1885.6 239.3L1900.2 235.0L1905.9 244.6L1891.2 248.9ZM1892.0 250.3L1906.7 246.0L1912.3 255.7L1897.7 260.0ZM1898.5 261.3L1913.1 257.0L1918.8 266.7L1904.2 271.0ZM1758.0 -10.3L1772.6 -14.6L1778.4 -4.8L1763.7 -0.5ZM1869.1 179.3L1883.8 175.0L1889.5 184.7L1874.8 189.0ZM1875.6 190.3L1890.3 186.0L1896.0 195.7L1881.3 200.0ZM1888.6 212.5L1903.2 208.2L1908.9 217.8L1894.3 222.1ZM1901.6 234.6L1916.2 230.3L1921.9 239.9L1907.2 244.2ZM1914.5 256.6L1929.1 252.3L1934.8 262.0L1920.1 266.3ZM1780.6 -3.8L1795.2 -8.1L1800.9 1.7L1786.3 6.0ZM1885.1 174.6L1899.8 170.2L1905.5 179.9L1890.8 184.3ZM1898.1 196.7L1912.8 192.4L1918.4 202.1L1903.8 206.4ZM1911.1 218.8L1925.7 214.5L1931.4 224.2L1916.7 228.5ZM1803.1 2.7L1817.8 -1.6L1823.5 8.2L1808.9 12.5ZM1809.7 13.9L1824.3 9.6L1830.1 19.4L1815.4 23.7ZM1816.3 25.1L1830.9 20.8L1836.6 30.6L1822.0 34.9ZM1901.1 169.8L1915.8 165.5L1921.5 175.2L1906.8 179.5ZM1838.8 31.6L1853.5 27.3L1859.2 37.1L1844.5 41.4ZM1861.4 38.1L1876.0 33.7L1881.7 43.5L1867.1 47.8ZM1877.4 33.3L1892.0 29.0L1897.7 38.8L1883.1 43.1ZM1893.4 28.6L1908.0 24.3L1913.7 34.1L1899.1 38.4ZM1902.8 12.8L1917.4 8.4L1923.2 18.2L1908.5 22.5ZM1905.7 -14.3L1920.3 -18.6L1926.1 -8.8L1911.4 -4.5ZM1912.2 -3.1L1926.9 -7.4L1932.6 2.3L1918.0 6.6Z" fill="#000" opacity=".13" filter="url(#bl)" transform="translate(-1.5 5)"/><path d="M16.2 1082.1L30.9 1077.9L36.4 1087.4L21.8 1091.7ZM32.2 1077.5L46.9 1073.2L52.5 1082.7L37.8 1087.0ZM29.1 1040.1L43.7 1035.8L49.3 1045.3L34.7 1049.6ZM35.5 1051.0L50.1 1046.7L55.7 1056.3L41.1 1060.5ZM41.9 1061.9L56.5 1057.6L62.1 1067.2L47.4 1071.4ZM48.2 1072.8L62.9 1068.5L68.5 1078.1L53.8 1082.3ZM45.1 1035.4L59.8 1031.1L65.4 1040.7L50.7 1045.0ZM51.5 1046.3L66.2 1042.1L71.7 1051.6L57.1 1055.9ZM57.9 1057.2L72.5 1053.0L78.1 1062.5L63.5 1066.8ZM64.3 1068.1L78.9 1063.9L84.5 1073.4L69.8 1077.7ZM70.6 1079.0L85.3 1074.8L90.9 1084.3L76.2 1088.6ZM61.1 1030.7L75.8 1026.5L81.4 1036.0L66.7 1040.3ZM67.5 1041.7L82.2 1037.4L87.8 1046.9L73.1 1051.2ZM73.9 1052.6L88.6 1048.3L94.2 1057.8L79.5 1062.1ZM80.3 1063.5L94.9 1059.2L100.5 1068.7L85.9 1073.0ZM86.7 1074.4L101.3 1070.1L106.9 1079.6L92.2 1083.9ZM6.5 905.4L21.2 901.1L26.8 910.8L12.2 915.0ZM13.0 916.4L27.6 912.1L33.3 921.8L18.6 926.0ZM96.3 1058.8L111.0 1054.5L116.5 1064.1L101.9 1068.3ZM102.7 1069.7L117.3 1065.4L122.9 1075.0L108.3 1079.2ZM22.6 900.7L37.2 896.5L42.9 906.1L28.2 910.4ZM29.0 911.7L43.7 907.5L49.3 917.1L34.6 921.4ZM112.3 1054.2L127.0 1049.9L132.6 1059.4L117.9 1063.7ZM118.7 1065.0L133.4 1060.8L138.9 1070.3L124.3 1074.6ZM25.7 874.0L40.3 869.8L46.0 879.4L31.3 883.7ZM32.1 885.1L46.8 880.8L52.4 890.4L37.8 894.7ZM38.6 896.1L53.2 891.8L58.9 901.5L44.2 905.7ZM128.4 1049.5L143.0 1045.2L148.6 1054.8L133.9 1059.0ZM28.8 847.3L43.4 843.0L49.1 852.7L34.4 857.0ZM35.2 858.3L49.9 854.1L55.5 863.7L40.9 868.0ZM41.7 869.4L56.4 865.1L62.0 874.8L47.3 879.0ZM48.1 880.4L62.8 876.1L68.5 885.8L53.8 890.0ZM54.6 891.4L69.3 887.2L74.9 896.8L60.2 901.1ZM31.8 820.5L46.5 816.3L52.2 825.9L37.5 830.2ZM38.3 831.6L53.0 827.3L58.6 837.0L44.0 841.3ZM44.8 842.6L59.5 838.4L65.1 848.0L50.4 852.3ZM51.3 853.7L65.9 849.4L71.6 859.1L56.9 863.3ZM70.6 886.8L85.3 882.5L90.9 892.1L76.3 896.4ZM34.9 793.7L49.6 789.5L55.2 799.2L40.6 803.4ZM41.4 804.8L56.0 800.5L61.7 810.2L47.1 814.5ZM47.9 815.9L62.5 811.6L68.2 821.3L53.5 825.5ZM54.3 826.9L69.0 822.7L74.7 832.3L60.0 836.6ZM37.9 766.9L52.6 762.6L58.3 772.3L43.6 776.6ZM44.4 778.0L59.1 773.7L64.8 783.4L50.1 787.7ZM50.9 789.1L65.6 784.8L71.3 794.5L56.6 798.8ZM70.4 822.3L85.0 818.0L90.7 827.7L76.0 831.9ZM-17.8 639.7L-3.1 635.4L2.6 645.2L-12.1 649.5ZM41.0 740.0L55.6 735.8L61.3 745.5L46.7 749.7ZM47.5 751.1L62.1 746.9L67.8 756.6L53.2 760.8ZM54.0 762.2L68.6 758.0L74.3 767.7L59.6 771.9ZM86.4 817.6L101.0 813.4L106.7 823.0L92.1 827.3ZM227.6 1058.8L242.2 1054.6L247.8 1064.1L233.1 1068.3ZM233.9 1069.7L248.6 1065.4L254.1 1074.9L239.5 1079.2ZM-21.5 601.4L-6.8 597.2L-1.1 607.0L-15.7 611.2ZM-14.9 612.6L-0.2 608.4L5.5 618.2L-9.2 622.4ZM-8.3 623.8L6.3 619.6L12.1 629.4L-2.6 633.6ZM-1.8 635.0L12.9 630.8L18.6 640.6L3.9 644.8ZM44.0 713.1L58.6 708.9L64.3 718.6L49.7 722.9ZM50.5 724.3L65.1 720.0L70.8 729.7L56.2 734.0ZM57.0 735.4L71.6 731.1L77.3 740.8L62.7 745.1ZM102.4 813.0L117.1 808.7L122.7 818.4L108.1 822.6ZM237.2 1043.3L251.9 1039.0L257.4 1048.5L242.8 1052.8ZM256.3 1075.9L270.9 1071.6L276.5 1081.1L261.8 1085.4ZM-5.4 596.8L9.2 592.5L15.0 602.3L0.3 606.6ZM1.1 608.0L15.8 603.7L21.5 613.5L6.9 617.8ZM7.7 619.2L22.4 614.9L28.1 624.7L13.4 629.0ZM14.2 630.4L28.9 626.1L34.6 635.9L20.0 640.2ZM53.5 697.3L68.1 693.1L73.8 702.8L59.2 707.1ZM60.0 708.5L74.6 704.2L80.3 714.0L65.7 718.2ZM66.5 719.6L81.2 715.3L86.9 725.1L72.2 729.3ZM73.0 730.7L87.7 726.5L93.4 736.2L78.7 740.4ZM79.5 741.8L94.2 737.6L99.9 747.3L85.2 751.5ZM118.4 808.3L133.1 804.0L138.8 813.7L124.1 818.0ZM227.7 995.0L242.4 990.8L248.0 1000.3L233.3 1004.6ZM234.1 1005.9L248.8 1001.7L254.4 1011.2L239.7 1015.5ZM253.2 1038.6L267.9 1034.3L273.5 1043.9L258.8 1048.1ZM4.0 580.9L18.7 576.7L24.4 586.5L9.8 590.7ZM10.6 592.1L25.3 587.9L31.0 597.7L16.3 601.9ZM17.2 603.3L31.8 599.1L37.6 608.9L22.9 613.1ZM23.7 614.5L38.4 610.3L44.1 620.1L29.4 624.3ZM30.3 625.7L44.9 621.5L50.7 631.3L36.0 635.5ZM76.0 703.8L90.7 699.6L96.4 709.3L81.7 713.6ZM82.5 714.9L97.2 710.7L102.9 720.4L88.2 724.7ZM89.0 726.1L103.7 721.8L109.4 731.5L94.7 735.8ZM95.5 737.2L110.2 732.9L115.9 742.6L101.2 746.9ZM102.0 748.3L116.7 744.0L122.4 753.7L107.7 758.0ZM108.5 759.4L123.2 755.1L128.9 764.8L114.2 769.1ZM134.5 803.6L149.1 799.4L154.8 809.0L140.1 813.3ZM237.4 979.4L252.0 975.2L257.6 984.7L242.9 989.0ZM256.5 1012.2L271.2 1007.9L276.7 1017.4L262.1 1021.7ZM262.9 1023.1L277.5 1018.8L283.1 1028.3L268.5 1032.6ZM275.6 1044.8L290.3 1040.5L295.8 1050.1L281.2 1054.3ZM20.0 576.3L34.7 572.0L40.5 581.8L25.8 586.1ZM26.6 587.5L41.3 583.2L47.0 593.0L32.4 597.3ZM33.2 598.7L47.8 594.4L53.6 604.2L38.9 608.5ZM39.7 609.9L54.4 605.6L60.1 615.4L45.5 619.7ZM46.3 621.1L61.0 616.8L66.7 626.6L52.0 630.9ZM105.1 721.4L119.7 717.1L125.4 726.9L110.7 731.1ZM111.6 732.5L126.2 728.3L131.9 738.0L117.2 742.2ZM118.1 743.6L132.7 739.4L138.4 749.1L123.7 753.3ZM124.6 754.7L139.2 750.4L144.9 760.1L130.2 764.4ZM131.0 765.8L145.7 761.5L151.4 771.2L136.7 775.5ZM137.5 776.9L152.2 772.6L157.9 782.3L143.2 786.5ZM150.5 799.0L165.1 794.7L170.8 804.4L156.1 808.6ZM253.4 974.8L268.0 970.5L273.6 980.1L259.0 984.3ZM285.3 1029.3L299.9 1025.0L305.5 1034.5L290.8 1038.8ZM291.6 1040.2L306.3 1035.9L311.9 1045.4L297.2 1049.7ZM298.0 1051.0L312.6 1046.7L318.2 1056.2L303.6 1060.5ZM36.1 571.6L50.7 567.4L56.5 577.2L41.8 581.4ZM42.6 582.8L57.3 578.6L63.0 588.4L48.4 592.6ZM49.2 594.0L63.9 589.8L69.6 599.6L54.9 603.8ZM55.8 605.2L70.4 601.0L76.2 610.8L61.5 615.0ZM62.3 616.4L77.0 612.2L82.7 621.9L68.0 626.2ZM134.1 739.0L148.7 734.7L154.4 744.4L139.8 748.7ZM140.6 750.0L155.2 745.8L160.9 755.5L146.3 759.7ZM147.1 761.1L161.7 756.9L167.4 766.6L152.7 770.8ZM275.8 981.0L290.4 976.8L296.0 986.3L281.4 990.6ZM282.2 991.9L296.8 987.7L302.4 997.2L287.7 1001.5ZM-27.1 431.8L-12.5 427.5L-6.7 437.4L-21.3 441.7ZM-20.5 443.1L-5.8 438.8L-0.0 448.7L-14.7 453.0ZM58.7 578.2L73.3 573.9L79.1 583.7L64.4 588.0ZM65.2 589.4L79.9 585.1L85.6 594.9L71.0 599.2ZM71.8 600.6L86.5 596.3L92.2 606.1L77.5 610.4ZM78.3 611.8L93.0 607.5L98.7 617.3L84.1 621.5ZM285.4 965.4L300.1 961.2L305.7 970.7L291.0 975.0ZM291.8 976.4L306.5 972.1L312.0 981.6L297.4 985.9ZM298.2 987.3L312.8 983.0L318.4 992.5L303.8 996.8ZM304.6 998.2L319.2 993.9L324.8 1003.4L310.1 1007.7ZM310.9 1009.1L325.6 1004.8L331.2 1014.3L316.5 1018.6ZM-24.4 404.5L-9.7 400.2L-3.9 410.1L-18.6 414.4ZM-17.7 415.8L-3.1 411.5L2.7 421.4L-11.9 425.7ZM-11.1 427.1L3.6 422.9L9.4 432.8L-5.3 437.0ZM-4.5 438.4L10.2 434.2L16.0 444.1L1.3 448.3ZM2.2 449.7L16.8 445.5L22.6 455.4L7.9 459.6ZM8.8 461.0L23.4 456.8L29.2 466.6L14.6 470.9ZM68.1 562.3L82.8 558.1L88.5 567.9L73.9 572.1ZM74.7 573.5L89.4 569.3L95.1 579.1L80.4 583.3ZM94.4 607.1L109.0 602.9L114.8 612.6L100.1 616.9ZM-15.0 388.5L-0.3 384.2L5.5 394.1L-9.2 398.4ZM-8.3 399.8L6.3 395.6L12.1 405.5L-2.5 409.7ZM-1.7 411.1L13.0 406.9L18.8 416.8L4.1 421.0ZM4.9 422.5L19.6 418.2L25.4 428.1L10.7 432.4ZM11.6 433.8L26.2 429.5L32.0 439.4L17.4 443.7ZM18.2 445.1L32.8 440.8L38.6 450.7L24.0 455.0ZM24.8 456.4L39.5 452.1L45.3 462.0L30.6 466.2ZM31.4 467.7L46.1 463.4L51.9 473.3L37.2 477.5ZM110.4 602.5L125.1 598.2L130.8 608.0L116.1 612.2ZM-12.3 361.1L2.4 356.9L8.2 366.8L-6.4 371.1ZM-5.6 372.5L9.1 368.2L14.9 378.2L0.2 382.4ZM1.0 383.8L15.7 379.6L21.5 389.5L6.9 393.7ZM7.7 395.2L22.3 390.9L28.2 400.8L13.5 405.1ZM14.3 406.5L29.0 402.2L34.8 412.1L20.1 416.4ZM21.0 417.8L35.6 413.6L41.4 423.5L26.8 427.7ZM27.6 429.1L42.2 424.9L48.0 434.8L33.4 439.0ZM34.2 440.4L48.9 436.2L54.7 446.1L40.0 450.3ZM40.8 451.7L55.5 447.5L61.3 457.3L46.6 461.6ZM47.4 463.0L62.1 458.8L67.9 468.6L53.2 472.9ZM54.1 474.3L68.7 470.0L74.5 479.9L59.8 484.1ZM339.9 962.4L354.5 958.1L360.1 967.6L345.4 971.9ZM346.2 973.3L360.9 969.0L366.5 978.5L351.8 982.8ZM352.6 984.2L367.3 979.9L372.8 989.4L358.2 993.7ZM359.0 995.0L373.6 990.8L379.2 1000.3L364.6 1004.6ZM49.1 369.9L63.8 365.6L69.6 375.6L54.9 379.8ZM82.3 426.5L96.9 422.2L102.7 432.1L88.1 436.4ZM394.3 959.2L408.9 955.0L414.5 964.5L399.9 968.8ZM400.7 970.1L415.3 965.9L420.9 975.4L406.2 979.7ZM407.0 981.0L421.7 976.8L427.3 986.3L412.6 990.6ZM413.4 991.9L428.1 987.6L433.6 997.2L419.0 1001.4ZM457.8 1067.8L472.5 1063.6L478.0 1073.0L463.4 1077.3ZM71.8 376.6L86.5 372.3L92.3 382.2L77.6 386.5ZM78.4 387.9L93.1 383.6L98.9 393.5L84.2 397.8ZM85.1 399.2L99.7 395.0L105.5 404.9L90.9 409.1ZM91.7 410.5L106.4 406.3L112.1 416.2L97.5 420.4ZM416.7 965.5L431.3 961.2L436.9 970.7L422.3 975.0ZM461.2 1041.5L475.8 1037.2L481.4 1046.7L466.7 1051.0ZM467.5 1052.3L482.2 1048.1L487.7 1057.5L473.1 1061.8ZM67.9 337.9L82.5 333.6L88.4 343.6L73.7 347.8ZM127.6 439.8L142.2 435.5L148.0 445.4L133.3 449.6ZM458.2 1004.3L472.8 1000.0L478.4 1009.5L463.7 1013.8ZM464.5 1015.2L479.2 1010.9L484.7 1020.4L470.1 1024.6ZM470.9 1026.0L485.5 1021.7L491.1 1031.2L476.4 1035.5ZM-23.2 150.5L-8.6 146.3L-2.7 156.3L-17.3 160.6ZM-16.5 162.0L-1.8 157.8L4.1 167.8L-10.6 172.0ZM-9.8 173.5L4.9 169.2L10.8 179.3L-3.9 183.5ZM-3.0 184.9L11.6 180.7L17.5 190.7L2.8 195.0ZM3.7 196.4L18.3 192.2L24.2 202.2L9.5 206.4ZM10.4 207.9L25.1 203.6L30.9 213.6L16.3 217.9ZM17.1 219.3L31.8 215.0L37.6 225.0L23.0 229.3ZM23.8 230.7L38.5 226.5L44.3 236.5L29.7 240.7ZM30.5 242.1L45.2 237.9L51.0 247.9L36.4 252.1ZM90.5 344.6L105.2 340.3L111.0 350.3L96.4 354.5ZM137.0 423.8L151.6 419.6L157.4 429.4L142.8 433.7ZM448.7 956.1L463.4 951.9L468.9 961.4L454.3 965.7ZM455.1 967.0L469.7 962.7L475.3 972.3L460.7 976.5ZM461.5 977.9L476.1 973.6L481.7 983.1L467.0 987.4ZM467.8 988.8L482.5 984.5L488.0 994.0L473.4 998.3ZM119.9 362.6L134.5 358.4L140.3 368.3L125.7 372.5ZM126.5 373.9L141.2 369.7L147.0 379.6L132.3 383.8ZM133.1 385.3L147.8 381.0L153.6 390.9L138.9 395.2ZM139.8 396.6L154.4 392.3L160.2 402.2L145.6 406.5ZM109.3 312.6L124.0 308.3L129.8 318.3L115.1 322.5ZM132.0 319.3L146.6 315.0L152.5 325.0L137.8 329.2ZM43.4 104.3L58.1 100.1L64.0 110.1L49.3 114.4ZM63.6 138.8L78.3 134.5L84.2 144.6L69.5 148.8ZM83.8 173.2L98.5 168.9L104.3 178.9L89.7 183.2ZM62.0 72.0L76.7 67.8L82.6 77.8L67.9 82.1ZM95.7 129.5L110.4 125.2L116.2 135.3L101.6 139.5ZM129.3 186.8L143.9 182.5L149.8 192.5L135.1 196.8ZM80.5 39.7L95.2 35.4L101.1 45.5L86.4 49.8ZM127.7 120.2L142.4 115.9L148.3 126.0L133.6 130.2ZM624.6 968.4L639.3 964.1L644.8 973.6L630.2 977.9ZM631.0 979.2L645.6 974.9L651.2 984.4L636.5 988.7ZM656.3 1022.5L671.0 1018.2L676.5 1027.7L661.8 1032.0ZM662.6 1033.3L677.3 1029.0L682.8 1038.5L668.2 1042.8ZM634.3 952.9L649.0 948.6L654.5 958.1L639.9 962.3ZM653.3 985.4L668.0 981.1L673.5 990.6L658.9 994.9ZM666.0 1007.0L680.7 1002.7L686.2 1012.2L671.5 1016.5ZM685.0 1039.4L699.6 1035.1L705.1 1044.6L690.5 1048.9ZM159.8 110.9L174.5 106.6L180.4 116.7L165.7 120.9ZM669.4 980.7L684.0 976.4L689.5 985.9L674.9 990.2ZM682.0 1002.3L696.7 998.1L702.2 1007.5L687.6 1011.8ZM701.0 1034.7L715.6 1030.5L721.1 1039.9L706.5 1044.2ZM672.7 954.3L687.3 950.1L692.9 959.5L678.2 963.8ZM679.0 965.2L693.7 960.9L699.2 970.4L684.6 974.7ZM685.4 976.0L700.0 971.7L705.6 981.2L690.9 985.5ZM691.7 986.8L706.4 982.6L711.9 992.0L697.2 996.3ZM698.0 997.7L712.7 993.4L718.2 1002.8L703.6 1007.1ZM704.4 1008.5L719.0 1004.2L724.5 1013.6L709.9 1017.9ZM710.7 1019.3L725.3 1015.0L730.8 1024.4L716.2 1028.7ZM701.4 971.3L716.0 967.0L721.6 976.5L706.9 980.8ZM714.0 993.0L728.7 988.7L734.2 998.1L719.6 1002.4ZM711.0 955.8L725.7 951.5L731.2 961.0L716.6 965.3ZM717.4 966.7L732.0 962.4L737.6 971.8L722.9 976.1ZM723.7 977.5L738.4 973.2L743.9 982.7L729.3 986.9ZM730.1 988.3L744.7 984.0L750.2 993.5L735.6 997.7ZM736.4 999.1L751.0 994.8L756.6 1004.3L741.9 1008.5ZM742.7 1009.9L757.3 1005.6L762.9 1015.1L748.2 1019.3ZM733.4 962.0L748.0 957.7L753.6 967.2L738.9 971.4ZM746.1 983.6L760.7 979.3L766.2 988.8L751.6 993.1ZM765.0 1016.0L779.7 1011.7L785.2 1021.1L770.5 1025.4ZM749.4 957.3L764.1 953.0L769.6 962.5L755.0 966.8ZM762.1 978.9L776.7 974.6L782.3 984.1L767.6 988.4ZM781.0 1011.3L795.7 1007.0L801.2 1016.5L786.5 1020.8ZM784.4 985.0L799.1 980.8L804.6 990.2L789.9 994.5ZM790.7 995.8L805.4 991.6L810.9 1001.0L796.2 1005.3ZM238.3 20.9L252.9 16.6L258.8 26.7L244.2 31.0ZM245.0 32.4L259.7 28.1L265.6 38.2L250.9 42.5ZM251.8 43.9L266.4 39.6L272.3 49.7L257.7 54.0ZM258.5 55.4L273.2 51.1L279.1 61.2L264.4 65.4ZM265.2 66.9L279.9 62.6L285.8 72.7L271.1 76.9ZM272.0 78.4L286.6 74.1L292.5 84.1L277.9 88.4ZM278.7 89.8L293.4 85.6L299.2 95.6L284.6 99.8ZM285.4 101.3L300.1 97.0L306.0 107.0L291.3 111.3ZM292.1 112.7L306.8 108.5L312.7 118.5L298.0 122.7ZM298.8 124.2L313.5 119.9L319.4 129.9L304.7 134.2ZM281.3 62.2L295.9 58.0L301.8 68.0L287.2 72.3ZM308.2 108.1L322.8 103.8L328.7 113.8L314.0 118.1ZM314.9 119.5L329.5 115.3L335.4 125.3L320.7 129.5ZM297.3 57.6L312.0 53.3L317.8 63.4L303.2 67.6ZM324.2 103.4L338.8 99.2L344.7 109.2L330.1 113.4ZM330.9 114.9L345.6 110.6L351.4 120.6L336.8 124.9ZM337.6 126.3L352.3 122.0L358.1 132.0L343.5 136.3ZM320.0 64.4L334.7 60.1L340.6 70.2L325.9 74.4ZM326.8 75.9L341.4 71.6L347.3 81.6L332.7 85.9ZM333.5 87.3L348.2 83.1L354.0 93.1L339.4 97.3ZM346.9 110.2L361.6 105.9L367.4 115.9L352.8 120.2ZM353.6 121.6L368.3 117.4L374.1 127.4L359.5 131.6ZM362.9 105.5L377.6 101.3L383.5 111.3L368.8 115.6ZM369.6 117.0L384.3 112.7L390.2 122.7L375.5 127.0ZM372.2 89.5L386.9 85.2L392.8 95.2L378.1 99.5ZM385.7 112.3L400.3 108.1L406.2 118.1L391.5 122.3ZM334.4 -7.0L349.1 -11.3L355.0 -1.2L340.3 3.1ZM341.2 4.5L355.8 0.2L361.7 10.3L347.1 14.6ZM347.9 16.0L362.6 11.7L368.5 21.8L353.8 26.0ZM354.7 27.5L369.3 23.2L375.2 33.3L360.5 37.5ZM361.4 39.0L376.0 34.7L381.9 44.7L367.3 49.0ZM368.1 50.4L382.8 46.2L388.7 56.2L374.0 60.5ZM374.8 61.9L389.5 57.6L395.4 67.7L380.7 71.9ZM381.6 73.3L396.2 69.1L402.1 79.1L387.4 83.4ZM401.7 107.7L416.3 103.4L422.2 113.4L407.5 117.7ZM971.9 1081.2L986.6 1076.9L992.1 1086.3L977.4 1090.6ZM424.4 114.4L439.1 110.2L444.9 120.2L430.3 124.4ZM431.1 125.8L445.8 121.6L451.6 131.6L437.0 135.8ZM987.9 1076.5L1002.6 1072.2L1008.1 1081.6L993.4 1085.9ZM934.8 953.6L949.4 949.3L955.0 958.8L940.3 963.1ZM941.1 964.4L955.8 960.1L961.3 969.6L946.6 973.9ZM947.4 975.2L962.1 970.9L967.6 980.3L952.9 984.6ZM953.7 986.0L968.4 981.7L973.9 991.1L959.2 995.4ZM960.0 996.7L974.7 992.4L980.2 1001.8L965.5 1006.1ZM966.3 1007.5L981.0 1003.2L986.5 1012.6L971.8 1016.9ZM1004.0 1071.8L1018.6 1067.5L1024.1 1076.9L1009.4 1081.2ZM957.1 959.7L971.8 955.4L977.3 964.9L962.6 969.2ZM963.4 970.5L978.1 966.2L983.6 975.6L968.9 979.9ZM969.7 981.3L984.4 977.0L989.9 986.4L975.2 990.7ZM976.0 992.0L990.7 987.7L996.2 997.2L981.5 1001.5ZM1020.0 1067.1L1034.6 1062.8L1040.1 1072.2L1025.4 1076.5ZM1026.2 1077.8L1040.9 1073.5L1046.3 1082.9L1031.7 1087.2ZM973.1 955.0L987.8 950.8L993.3 960.2L978.6 964.5ZM979.4 965.8L994.1 961.5L999.6 970.9L984.9 975.2ZM1036.0 1062.4L1050.6 1058.1L1056.1 1067.5L1041.4 1071.8ZM995.4 961.1L1010.1 956.8L1015.6 966.3L1001.0 970.5ZM1052.0 1057.7L1066.6 1053.4L1072.1 1062.8L1057.4 1067.1ZM1058.2 1068.4L1072.9 1064.1L1078.3 1073.5L1063.7 1077.8ZM1068.0 1053.0L1082.6 1048.7L1088.1 1058.1L1073.4 1062.4ZM1074.2 1063.7L1088.9 1059.4L1094.3 1068.8L1079.7 1073.1ZM1080.5 1074.4L1095.1 1070.1L1100.6 1079.5L1085.9 1083.8ZM1090.2 1059.0L1104.9 1054.7L1110.3 1064.1L1095.7 1068.4ZM1096.5 1069.7L1111.1 1065.4L1116.6 1074.8L1101.9 1079.1ZM1106.2 1054.3L1120.9 1050.0L1126.3 1059.4L1111.7 1063.7ZM1112.5 1065.0L1127.1 1060.7L1132.6 1070.1L1118.0 1074.4ZM498.9 -14.4L513.5 -18.7L519.4 -8.7L504.7 -4.4ZM505.6 -3.0L520.2 -7.2L526.1 2.8L511.5 7.1ZM512.3 8.5L527.0 4.2L532.9 14.3L518.2 18.5ZM519.0 20.0L533.7 15.7L539.6 25.7L524.9 30.0ZM525.7 31.4L540.4 27.2L546.3 37.2L531.6 41.4ZM532.5 42.9L547.1 38.6L553.0 48.6L538.3 52.9ZM539.2 54.3L553.8 50.0L559.7 60.0L545.0 64.3ZM545.9 65.7L560.5 61.5L566.4 71.5L551.7 75.7ZM1128.5 1060.3L1143.1 1056.0L1148.6 1065.4L1134.0 1069.7ZM1134.7 1071.0L1149.4 1066.7L1154.8 1076.0L1140.2 1080.3ZM1141.0 1081.7L1155.6 1077.4L1161.1 1086.7L1146.4 1091.0ZM568.6 72.5L583.2 68.2L589.1 78.2L574.4 82.5ZM575.3 83.9L589.9 79.6L595.8 89.6L581.1 93.9ZM1150.7 1066.3L1165.4 1062.0L1170.8 1071.3L1156.2 1075.6ZM1157.0 1077.0L1171.6 1072.7L1177.1 1082.0L1162.4 1086.3ZM584.6 67.8L599.3 63.6L605.1 73.5L590.5 77.8ZM591.3 79.2L606.0 75.0L611.8 84.9L597.1 89.2ZM600.6 63.2L615.3 58.9L621.1 68.9L606.5 73.1ZM607.3 74.6L622.0 70.3L627.8 80.3L613.2 84.5ZM616.6 58.5L631.3 54.2L637.2 64.2L622.5 68.5ZM623.3 69.9L638.0 65.6L643.8 75.6L629.2 79.9ZM632.7 53.8L647.3 49.6L653.2 59.5L638.5 63.8ZM639.4 65.2L654.0 61.0L659.9 70.9L645.2 75.2ZM648.7 49.2L663.3 44.9L669.2 54.9L654.5 59.1ZM655.4 60.6L670.0 56.3L675.9 66.3L661.2 70.5ZM644.6 10.2L659.3 6.0L665.1 16.0L650.5 20.2ZM664.7 44.5L679.4 40.2L685.2 50.2L670.6 54.5ZM671.4 55.9L686.0 51.6L691.9 61.6L677.2 65.9ZM660.6 5.6L675.3 1.3L681.1 11.3L666.5 15.6ZM680.7 39.8L695.4 35.6L701.2 45.5L686.6 49.8ZM687.4 51.2L702.1 47.0L707.9 56.9L693.3 61.2ZM676.6 0.9L691.3 -3.4L697.2 6.6L682.5 10.9ZM696.7 35.2L711.4 30.9L717.2 40.9L702.6 45.1ZM703.4 46.6L718.1 42.3L723.9 52.3L709.3 56.5ZM692.6 -3.8L707.3 -8.0L713.2 2.0L698.5 6.2ZM712.7 30.5L727.4 26.2L733.3 36.2L718.6 40.5ZM719.4 41.9L734.1 37.6L739.9 47.6L725.3 51.9ZM1282.3 1002.6L1296.9 998.3L1302.4 1007.7L1287.7 1012.0ZM1288.5 1013.3L1303.2 1009.0L1308.6 1018.3L1294.0 1022.6ZM1294.8 1024.0L1309.4 1019.7L1314.9 1029.0L1300.2 1033.3ZM1313.5 1055.9L1328.1 1051.6L1333.5 1060.9L1318.9 1065.2ZM1319.7 1066.6L1334.3 1062.3L1339.8 1071.6L1325.1 1075.9ZM1325.9 1077.2L1340.5 1072.9L1346.0 1082.2L1331.3 1086.5ZM708.7 -8.4L723.3 -12.7L729.2 -2.7L714.5 1.6ZM728.8 25.8L743.4 21.6L749.3 31.5L734.6 35.8ZM735.5 37.2L750.1 33.0L756.0 42.9L741.3 47.2ZM1298.3 997.9L1312.9 993.6L1318.4 1003.0L1303.7 1007.3ZM744.8 21.2L759.4 16.9L765.3 26.9L750.6 31.1ZM751.5 32.6L766.1 28.3L772.0 38.3L757.3 42.5ZM1314.3 993.2L1328.9 988.9L1334.4 998.2L1319.7 1002.6ZM760.8 16.5L775.5 12.2L781.3 22.2L766.7 26.5ZM767.5 27.9L782.1 23.6L788.0 33.6L773.3 37.9ZM1330.3 988.5L1344.9 984.2L1350.4 993.5L1335.7 997.8ZM763.4 -11.0L778.1 -15.3L783.9 -5.3L769.3 -1.0ZM770.1 0.4L784.8 -3.9L790.6 6.1L776.0 10.4ZM823.5 91.5L838.2 87.2L844.0 97.1L829.4 101.4ZM836.8 114.2L851.5 109.9L857.3 119.8L842.7 124.1ZM862.2 93.5L876.9 89.2L882.7 99.1L868.0 103.4ZM875.5 116.2L890.2 111.9L896.0 121.8L881.3 126.1ZM1378.3 974.4L1392.9 970.1L1398.4 979.4L1383.7 983.7ZM1394.3 969.7L1408.9 965.4L1414.4 974.7L1399.7 979.0ZM900.9 95.5L915.5 91.2L921.4 101.1L906.7 105.4ZM1410.3 965.0L1424.9 960.7L1430.4 970.0L1415.7 974.3ZM936.8 124.8L951.5 120.5L957.3 130.4L942.6 134.6ZM1426.3 960.3L1440.9 955.9L1446.4 965.3L1431.7 969.6ZM932.9 86.1L947.6 81.8L953.4 91.8L938.7 96.0ZM946.2 108.8L960.9 104.5L966.7 114.4L952.0 118.7ZM952.8 120.1L967.5 115.8L973.3 125.7L958.6 130.0ZM1442.3 955.5L1456.9 951.2L1462.4 960.6L1447.7 964.9ZM955.6 92.8L970.2 88.5L976.0 98.4L961.4 102.7ZM968.8 115.4L983.5 111.1L989.3 121.0L974.6 125.3ZM964.9 76.8L979.6 72.5L985.4 82.4L970.8 86.7ZM971.6 88.1L986.2 83.8L992.0 93.7L977.4 98.0ZM984.9 110.7L999.5 106.4L1005.3 116.3L990.7 120.6ZM987.6 83.4L1002.3 79.1L1008.1 89.0L993.4 93.3ZM1000.9 106.0L1015.5 101.8L1021.3 111.7L1006.7 115.9ZM1571.1 1079.5L1585.7 1075.2L1591.1 1084.5L1576.5 1088.8ZM1010.3 90.1L1024.9 85.8L1030.7 95.7L1016.1 100.0ZM1016.9 101.4L1031.5 97.1L1037.3 107.0L1022.7 111.3ZM1030.1 124.0L1044.8 119.7L1050.6 129.6L1035.9 133.8ZM1587.1 1074.8L1601.7 1070.5L1607.1 1079.7L1592.5 1084.1ZM1032.9 96.7L1047.5 92.4L1053.3 102.3L1038.7 106.6ZM1039.5 108.0L1054.2 103.7L1060.0 113.6L1045.3 117.9ZM1046.1 119.3L1060.8 115.0L1066.6 124.9L1051.9 129.2ZM1534.7 953.3L1549.4 949.0L1554.8 958.3L1540.2 962.7ZM1553.4 985.3L1568.1 981.0L1573.5 990.3L1558.9 994.6ZM1559.7 995.9L1574.3 991.6L1579.7 1000.9L1565.1 1005.2ZM1565.9 1006.5L1580.5 1002.2L1585.9 1011.5L1571.3 1015.8ZM1590.7 1048.9L1605.3 1044.6L1610.7 1053.9L1596.1 1058.2ZM1596.9 1059.5L1611.5 1055.2L1616.9 1064.5L1602.3 1068.8ZM1603.1 1070.1L1617.7 1065.8L1623.1 1075.0L1608.5 1079.3ZM1073.1 5.3L1087.7 1.0L1093.6 11.0L1078.9 15.2ZM1079.7 16.7L1094.4 12.4L1100.2 22.3L1085.6 26.6ZM1086.4 28.0L1101.0 23.7L1106.9 33.6L1092.2 37.9ZM1093.0 39.3L1107.7 35.1L1113.5 45.0L1098.9 49.2ZM1099.7 50.7L1114.3 46.4L1120.1 56.3L1105.5 60.6ZM1106.3 62.0L1121.0 57.7L1126.8 67.6L1112.1 71.9ZM1112.9 73.3L1127.6 69.0L1133.4 78.9L1118.7 83.2ZM1119.6 84.6L1134.2 80.3L1140.0 90.2L1125.4 94.5ZM1126.2 95.9L1140.8 91.6L1146.6 101.5L1132.0 105.7ZM1132.8 107.2L1147.5 102.9L1153.2 112.7L1138.6 117.0ZM1139.4 118.4L1154.1 114.1L1159.9 124.0L1145.2 128.3ZM1203.5 99.7L1218.1 95.4L1223.9 105.3L1209.2 109.5ZM1210.1 110.9L1224.7 106.7L1230.5 116.5L1215.8 120.8ZM1216.7 122.2L1231.3 117.9L1237.1 127.8L1222.4 132.0ZM1212.9 83.7L1227.5 79.4L1233.3 89.3L1218.6 93.6ZM1228.9 79.0L1243.5 74.8L1249.3 84.6L1234.6 88.9ZM1205.1 6.6L1219.8 2.3L1225.6 12.2L1210.9 16.5ZM1211.7 17.9L1226.4 13.6L1232.2 23.5L1217.6 27.8ZM1244.9 74.4L1259.5 70.1L1265.3 79.9L1250.7 84.2ZM1234.4 24.5L1249.0 20.2L1254.8 30.1L1240.2 34.4ZM1260.9 69.7L1275.5 65.4L1281.3 75.2L1266.7 79.5ZM1755.1 913.3L1769.8 909.0L1775.2 918.3L1760.6 922.6ZM1250.4 19.8L1265.0 15.5L1270.8 25.4L1256.2 29.7ZM1276.9 65.0L1291.5 60.7L1297.3 70.5L1282.7 74.8ZM1764.9 897.9L1779.5 893.6L1785.0 902.9L1770.4 907.3ZM1771.1 908.6L1785.8 904.3L1791.2 913.6L1776.6 917.9ZM1777.4 919.2L1792.0 914.9L1797.4 924.2L1782.8 928.5ZM1266.4 15.1L1281.1 10.8L1286.9 20.7L1272.2 25.0ZM1292.9 60.3L1307.5 56.0L1313.3 65.9L1298.7 70.1ZM1755.9 850.6L1770.6 846.3L1776.0 855.6L1761.4 859.9ZM1787.1 903.9L1801.8 899.5L1807.2 908.8L1792.6 913.2ZM1873.8 1052.0L1888.4 1047.7L1893.8 1056.9L1879.2 1061.2ZM1879.9 1062.5L1894.6 1058.2L1900.0 1067.4L1885.3 1071.7ZM1282.4 10.4L1297.1 6.2L1302.9 16.0L1288.2 20.3ZM1308.9 55.6L1323.5 51.3L1329.3 61.2L1314.7 65.5ZM1740.6 792.4L1755.3 788.0L1760.7 797.4L1746.1 801.7ZM1746.9 803.1L1761.5 798.8L1767.0 808.1L1752.4 812.4ZM1753.2 813.8L1767.8 809.5L1773.3 818.8L1758.6 823.1ZM1759.4 824.5L1774.1 820.2L1779.5 829.5L1764.9 833.8ZM1771.9 845.9L1786.6 841.5L1792.0 850.9L1777.4 855.2ZM1796.9 888.5L1811.5 884.2L1817.0 893.5L1802.3 897.8ZM1803.1 899.1L1817.8 894.8L1823.2 904.1L1808.6 908.4ZM1809.4 909.8L1824.0 905.5L1829.4 914.8L1814.8 919.1ZM1883.6 1036.7L1898.3 1032.4L1903.6 1041.6L1889.0 1045.9ZM1889.8 1047.3L1904.4 1042.9L1909.8 1052.1L1895.2 1056.5ZM1298.4 5.8L1313.1 1.5L1318.9 11.4L1304.2 15.6ZM1324.9 50.9L1339.6 46.6L1345.3 56.5L1330.7 60.8ZM1351.3 95.9L1366.0 91.6L1371.7 101.5L1357.1 105.8ZM1357.9 107.2L1372.5 102.9L1378.3 112.7L1363.7 117.0ZM1364.5 118.4L1379.1 114.1L1384.9 123.9L1370.2 128.2ZM1371.1 129.6L1385.7 125.3L1391.5 135.1L1376.8 139.4ZM1750.3 776.9L1765.0 772.6L1770.5 782.0L1755.8 786.3ZM1756.6 787.6L1771.3 783.3L1776.7 792.7L1762.1 797.0ZM1762.9 798.4L1777.5 794.0L1783.0 803.4L1768.4 807.7ZM1769.2 809.1L1783.8 804.7L1789.3 814.1L1774.6 818.4ZM1775.4 819.8L1790.1 815.4L1795.5 824.8L1780.9 829.1ZM1787.9 841.1L1802.6 836.8L1808.0 846.2L1793.4 850.5ZM1819.1 894.4L1833.8 890.1L1839.2 899.4L1824.6 903.7ZM1825.3 905.1L1840.0 900.7L1845.4 910.0L1830.8 914.4ZM1893.5 1021.5L1908.1 1017.1L1913.5 1026.4L1898.9 1030.7ZM1899.6 1032.0L1914.3 1027.7L1919.6 1036.9L1905.0 1041.2ZM1314.4 1.1L1329.1 -3.2L1334.9 6.7L1320.2 11.0ZM1340.9 46.2L1355.6 41.9L1361.3 51.8L1346.7 56.1ZM1360.7 80.0L1375.4 75.7L1381.1 85.5L1366.5 89.8ZM1367.3 91.2L1382.0 86.9L1387.7 96.8L1373.1 101.1ZM1373.9 102.5L1388.6 98.2L1394.3 108.0L1379.7 112.3ZM1380.5 113.7L1395.1 109.4L1400.9 119.2L1386.3 123.5ZM1387.1 124.9L1401.7 120.6L1407.5 130.4L1392.8 134.7ZM1791.4 815.0L1806.1 810.7L1811.5 820.1L1796.9 824.4ZM1803.9 836.4L1818.6 832.1L1824.0 841.4L1809.4 845.8ZM1828.9 879.1L1843.5 874.7L1849.0 884.0L1834.3 888.4ZM1841.3 900.3L1856.0 896.0L1861.4 905.3L1846.8 909.6ZM1909.4 1016.7L1924.1 1012.4L1929.5 1021.6L1914.8 1026.0ZM1330.4 -3.6L1345.1 -7.9L1350.9 2.0L1336.2 6.3ZM1356.9 41.5L1371.6 37.2L1377.4 47.1L1362.7 51.4ZM1376.7 75.3L1391.4 71.0L1397.1 80.9L1382.5 85.1ZM1383.3 86.6L1398.0 82.3L1403.7 92.1L1389.1 96.4ZM1807.4 810.3L1822.0 806.0L1827.5 815.4L1812.9 819.7ZM1819.9 831.7L1834.6 827.4L1840.0 836.7L1825.4 841.0ZM1851.1 885.0L1865.7 880.7L1871.2 890.0L1856.6 894.3ZM1857.3 895.6L1872.0 891.3L1877.4 900.6L1862.8 904.9ZM1346.4 -8.3L1361.1 -12.6L1366.9 -2.7L1352.2 1.6ZM1372.9 36.8L1387.6 32.5L1393.4 42.4L1378.7 46.7ZM1392.7 70.6L1407.4 66.3L1413.2 76.2L1398.5 80.5ZM1399.3 81.9L1414.0 77.6L1419.7 87.4L1405.1 91.7ZM1823.4 805.6L1838.0 801.3L1843.5 810.6L1828.9 815.0ZM1829.7 816.3L1844.3 812.0L1849.8 821.3L1835.1 825.6ZM1835.9 827.0L1850.5 822.7L1856.0 832.0L1841.4 836.3ZM1842.2 837.6L1856.8 833.3L1862.3 842.7L1847.6 847.0ZM1848.4 848.3L1863.0 844.0L1868.5 853.3L1853.9 857.6ZM1854.6 859.0L1869.3 854.6L1874.7 864.0L1860.1 868.3ZM1860.9 869.6L1875.5 865.3L1881.0 874.6L1866.3 878.9ZM1867.1 880.3L1881.7 875.9L1887.2 885.2L1872.5 889.6ZM1388.9 32.1L1403.6 27.9L1409.4 37.7L1394.7 42.0ZM1408.7 65.9L1423.4 61.6L1429.2 71.5L1414.5 75.8ZM1415.3 77.2L1430.0 72.9L1435.7 82.7L1421.1 87.0ZM1441.7 122.0L1456.3 117.8L1462.1 127.6L1447.4 131.9ZM1744.9 639.6L1759.6 635.2L1765.1 644.7L1750.5 649.0ZM1404.9 27.5L1419.6 23.2L1425.4 33.0L1410.7 37.3ZM1424.7 61.2L1439.4 56.9L1445.2 66.8L1430.5 71.1ZM1431.3 72.5L1446.0 68.2L1451.8 78.0L1437.1 82.3ZM1451.1 106.1L1465.7 101.8L1471.5 111.7L1456.8 116.0ZM1457.7 117.4L1472.3 113.1L1478.1 122.9L1463.4 127.2ZM1767.3 645.7L1781.9 641.3L1787.4 650.8L1772.8 655.1ZM1420.9 22.8L1435.6 18.5L1441.4 28.3L1426.7 32.6ZM1440.8 56.5L1455.4 52.2L1461.2 62.1L1446.5 66.4ZM1447.3 67.8L1462.0 63.5L1467.8 73.3L1453.1 77.6ZM1453.9 79.0L1468.6 74.7L1474.3 84.5L1459.7 88.8ZM1460.5 90.2L1475.2 85.9L1480.9 95.8L1466.3 100.0ZM1467.1 101.4L1481.7 97.2L1487.5 107.0L1472.8 111.3ZM1473.7 112.7L1488.3 108.4L1494.1 118.2L1479.4 122.5ZM1751.6 586.8L1766.2 582.5L1771.7 592.0L1757.1 596.3ZM1789.6 651.7L1804.2 647.4L1809.8 656.9L1795.1 661.2ZM1436.9 18.1L1451.6 13.8L1457.4 23.6L1442.7 27.9ZM1463.4 63.1L1478.0 58.8L1483.8 68.6L1469.1 72.9ZM1469.9 74.3L1484.6 70.0L1490.3 79.8L1475.7 84.1ZM1476.5 85.5L1491.2 81.2L1496.9 91.1L1482.3 95.4ZM1483.1 96.8L1497.7 92.5L1503.5 102.3L1488.9 106.6ZM1761.2 571.2L1775.8 566.9L1781.4 576.4L1766.8 580.7ZM1780.2 603.8L1794.9 599.4L1800.4 608.9L1785.8 613.2ZM1811.9 657.8L1826.5 653.5L1832.1 662.9L1817.4 667.3ZM1453.0 13.4L1467.6 9.1L1473.4 18.9L1458.7 23.2ZM1751.7 523.0L1766.3 518.7L1771.9 528.2L1757.3 532.5ZM1770.8 555.7L1785.5 551.3L1791.0 560.8L1776.4 565.2ZM1789.9 588.2L1804.5 583.9L1810.1 593.4L1795.5 597.7ZM1808.9 620.7L1823.6 616.4L1829.1 625.8L1814.5 630.2ZM1834.2 663.9L1848.9 659.6L1854.4 669.0L1839.7 673.3ZM1469.0 8.7L1483.6 4.4L1489.4 14.2L1474.7 18.5ZM1799.5 572.7L1814.2 568.3L1819.7 577.8L1805.1 582.1ZM1818.6 605.2L1833.2 600.8L1838.8 610.3L1824.1 614.6ZM1856.5 669.9L1871.2 665.6L1876.7 675.0L1862.0 679.4ZM1485.0 4.0L1499.6 -0.3L1505.4 9.5L1490.7 13.8ZM1751.7 459.0L1766.4 454.7L1772.0 464.3L1757.3 468.6ZM1770.9 491.8L1785.6 487.5L1791.2 497.0L1776.5 501.3ZM1790.1 524.5L1804.7 520.2L1810.3 529.7L1795.7 534.0ZM1809.2 557.1L1823.8 552.8L1829.4 562.3L1814.7 566.6ZM1828.2 589.6L1842.9 585.3L1848.4 594.8L1833.8 599.1ZM1878.8 676.0L1893.5 671.7L1899.0 681.1L1884.3 685.4ZM1501.0 -0.7L1515.6 -5.0L1521.4 4.8L1506.7 9.1ZM1761.3 443.4L1776.0 439.1L1781.6 448.7L1766.9 453.0ZM1780.5 476.2L1795.2 471.9L1800.8 481.4L1786.1 485.7ZM1799.7 508.9L1814.3 504.6L1819.9 514.1L1805.3 518.4ZM1818.8 541.5L1833.4 537.2L1839.0 546.7L1824.4 551.0ZM1844.2 584.9L1858.9 580.6L1864.4 590.1L1849.8 594.4ZM1901.1 682.0L1915.7 677.7L1921.3 687.1L1906.6 691.4ZM1517.0 -5.4L1531.6 -9.7L1537.4 0.2L1522.8 4.5ZM1770.9 427.7L1785.6 423.4L1791.2 433.0L1776.5 437.3ZM1809.3 493.3L1824.0 489.0L1829.5 498.5L1814.9 502.8ZM1860.2 580.2L1874.9 575.9L1880.4 585.3L1865.8 589.6ZM1866.6 591.0L1881.2 586.7L1886.7 596.2L1872.1 600.5ZM1923.4 688.1L1938.0 683.7L1943.5 693.1L1928.9 697.5ZM1533.0 -10.1L1547.6 -14.4L1553.4 -4.5L1538.8 -0.2ZM1748.3 357.2L1763.0 352.9L1768.6 362.5L1754.0 366.8ZM1799.7 444.9L1814.4 440.6L1820.0 450.2L1805.3 454.5ZM1838.1 510.3L1852.7 506.0L1858.3 515.5L1843.6 519.8ZM1863.5 553.8L1878.2 549.5L1883.7 559.0L1869.1 563.3ZM1869.9 564.6L1884.5 560.3L1890.1 569.8L1875.4 574.1ZM1888.9 597.1L1903.5 592.8L1909.1 602.2L1894.4 606.6ZM1549.0 -14.8L1563.6 -19.1L1569.4 -9.2L1554.8 -4.9ZM1770.8 363.5L1785.4 359.2L1791.1 368.8L1776.4 373.1ZM1809.3 429.3L1824.0 425.0L1829.6 434.5L1814.9 438.8ZM1828.5 462.0L1843.2 457.7L1848.8 467.3L1834.1 471.6ZM1847.7 494.7L1862.3 490.4L1867.9 499.9L1853.3 504.3ZM1873.2 538.2L1887.8 533.9L1893.4 543.4L1878.7 547.7ZM1885.9 559.9L1900.5 555.6L1906.1 565.1L1891.4 569.4ZM1911.2 603.2L1925.9 598.9L1931.4 608.3L1916.8 612.6ZM1578.2 3.0L1592.8 -1.3L1598.6 8.6L1584.0 12.9ZM1584.8 14.3L1599.4 10.0L1605.2 19.8L1590.6 24.1ZM1591.4 25.5L1606.0 21.2L1611.8 31.0L1597.1 35.3ZM1598.0 36.7L1612.6 32.4L1618.4 42.3L1603.7 46.6ZM1604.5 48.0L1619.2 43.7L1624.9 53.5L1610.3 57.8ZM1611.1 59.2L1625.8 54.9L1631.5 64.7L1616.9 69.0ZM1617.7 70.4L1632.3 66.1L1638.1 75.9L1623.4 80.2ZM1624.3 81.6L1638.9 77.3L1644.6 87.1L1630.0 91.4ZM1630.8 92.8L1645.5 88.5L1651.2 98.2L1636.6 102.5ZM1637.4 103.9L1652.0 99.6L1657.7 109.4L1643.1 113.7ZM1643.9 115.1L1658.6 110.8L1664.3 120.6L1649.7 124.9ZM1793.2 369.8L1807.9 365.5L1813.5 375.1L1798.8 379.4ZM1838.1 446.4L1852.8 442.1L1858.4 451.6L1843.7 456.0ZM1857.3 479.1L1871.9 474.8L1877.5 484.3L1862.9 488.7ZM1882.8 522.6L1897.4 518.3L1903.0 527.8L1888.4 532.1ZM1901.9 555.2L1916.5 550.9L1922.0 560.3L1907.4 564.7ZM1908.2 566.0L1922.8 561.7L1928.4 571.2L1913.8 575.5ZM1815.6 376.0L1830.3 371.7L1835.9 381.3L1821.3 385.6ZM1866.9 463.5L1881.5 459.2L1887.1 468.7L1872.5 473.0ZM1892.4 507.1L1907.1 502.7L1912.6 512.2L1898.0 516.6ZM1911.5 539.6L1926.1 535.3L1931.7 544.8L1917.1 549.1ZM1838.1 382.3L1852.7 378.0L1858.3 387.6L1843.7 391.9ZM1876.5 447.9L1891.1 443.6L1896.7 453.1L1882.1 457.4ZM1908.4 502.3L1923.0 498.0L1928.6 507.5L1914.0 511.8ZM1860.5 388.5L1875.1 384.2L1880.7 393.8L1866.1 398.1ZM1648.8 -4.5L1663.4 -8.8L1669.2 1.0L1654.6 5.3ZM1655.4 6.7L1670.0 2.4L1675.8 12.2L1661.1 16.5ZM1662.0 17.9L1676.6 13.6L1682.4 23.4L1667.7 27.7ZM1668.5 29.1L1683.2 24.8L1688.9 34.7L1674.3 39.0ZM1675.1 40.4L1689.8 36.1L1695.5 45.9L1680.9 50.2ZM1681.7 51.6L1696.3 47.3L1702.1 57.1L1687.4 61.4ZM1688.3 62.8L1702.9 58.5L1708.6 68.2L1694.0 72.5ZM1694.8 73.9L1709.5 69.6L1715.2 79.4L1700.6 83.7ZM1701.4 85.1L1716.0 80.8L1721.7 90.6L1707.1 94.9ZM1707.9 96.3L1722.6 92.0L1728.3 101.8L1713.7 106.1ZM1714.5 107.5L1729.1 103.1L1734.8 112.9L1720.2 117.2ZM1721.0 118.6L1735.7 114.3L1741.4 124.1L1726.7 128.4ZM1882.9 394.7L1897.5 390.4L1903.1 400.0L1888.5 404.3ZM1905.3 401.0L1919.9 396.7L1925.5 406.2L1910.9 410.5ZM1927.7 407.2L1942.3 402.9L1947.9 412.4L1933.3 416.7ZM1850.1 210.8L1864.8 206.5L1870.4 216.2L1855.8 220.5ZM1856.6 221.9L1871.3 217.6L1876.9 227.3L1862.3 231.6ZM1863.1 233.0L1877.7 228.6L1883.4 238.3L1868.8 242.6ZM1869.6 244.0L1884.2 239.7L1889.9 249.3L1875.2 253.7ZM1859.6 195.1L1874.3 190.7L1880.0 200.4L1865.3 204.7ZM1866.1 206.1L1880.8 201.8L1886.4 211.5L1871.8 215.8ZM1879.1 228.2L1893.7 223.9L1899.4 233.6L1884.8 237.9ZM1885.6 239.3L1900.2 235.0L1905.9 244.6L1891.2 248.9ZM1892.0 250.3L1906.7 246.0L1912.3 255.7L1897.7 260.0ZM1898.5 261.3L1913.1 257.0L1918.8 266.7L1904.2 271.0ZM1758.0 -10.3L1772.6 -14.6L1778.4 -4.8L1763.7 -0.5ZM1869.1 179.3L1883.8 175.0L1889.5 184.7L1874.8 189.0ZM1875.6 190.3L1890.3 186.0L1896.0 195.7L1881.3 200.0ZM1888.6 212.5L1903.2 208.2L1908.9 217.8L1894.3 222.1ZM1901.6 234.6L1916.2 230.3L1921.9 239.9L1907.2 244.2ZM1914.5 256.6L1929.1 252.3L1934.8 262.0L1920.1 266.3ZM1780.6 -3.8L1795.2 -8.1L1800.9 1.7L1786.3 6.0ZM1885.1 174.6L1899.8 170.2L1905.5 179.9L1890.8 184.3ZM1898.1 196.7L1912.8 192.4L1918.4 202.1L1903.8 206.4ZM1911.1 218.8L1925.7 214.5L1931.4 224.2L1916.7 228.5ZM1803.1 2.7L1817.8 -1.6L1823.5 8.2L1808.9 12.5ZM1809.7 13.9L1824.3 9.6L1830.1 19.4L1815.4 23.7ZM1816.3 25.1L1830.9 20.8L1836.6 30.6L1822.0 34.9ZM1901.1 169.8L1915.8 165.5L1921.5 175.2L1906.8 179.5ZM1838.8 31.6L1853.5 27.3L1859.2 37.1L1844.5 41.4ZM1861.4 38.1L1876.0 33.7L1881.7 43.5L1867.1 47.8ZM1877.4 33.3L1892.0 29.0L1897.7 38.8L1883.1 43.1ZM1893.4 28.6L1908.0 24.3L1913.7 34.1L1899.1 38.4ZM1902.8 12.8L1917.4 8.4L1923.2 18.2L1908.5 22.5ZM1905.7 -14.3L1920.3 -18.6L1926.1 -8.8L1911.4 -4.5ZM1912.2 -3.1L1926.9 -7.4L1932.6 2.3L1918.0 6.6Z" fill="#868686"/></svg><div id="win"><div id="in"><div class="abs" style="left:164px;top:124px;width:1592px;height:24px;background:linear-gradient(#d6d6d6 0,#d6d6d6 3%,#eaeaea 5%,#d4d4d4 100%);"></div><div class="abs" style="left:170px;top:131px;width:10px;height:10px;border-radius:50%;background:#fc5b57;box-shadow:inset 0 0 0 .5px #df4744"></div><div class="abs" style="left:186.7px;top:131px;width:10px;height:10px;border-radius:50%;background:#fdbc40;box-shadow:inset 0 0 0 .5px #de9f34"></div><div class="abs" style="left:203px;top:131px;width:10px;height:10px;border-radius:50%;background:#34c84a;box-shadow:inset 0 0 0 .5px #27aa35"></div><svg style="left:0;top:0" width="1920" height="1080" viewBox="0 0 1920 1080"><defs><linearGradient id="dg" x1="0" y1="0" x2="1" y2="1"><stop offset="0" stop-color="#c6c6c6"/><stop offset="1" stop-color="#f6f6f6"/></linearGradient></defs><path d="M232 130h7.5l3 3v9.500h-10.500z" fill="url(#dg)" stroke="#a5a5a5" stroke-width=".7"/><path d="M239.5 130.5v3h3" fill="#ddd" stroke="#9a9a9a" stroke-width=".6"/><path d="M241.6 138.6l.9 1.9 2 .2-1.5 1.4.4 2-1.8-1-1.8 1 .4-2-1.5-1.400 2-.2z" fill="#f5b324"/><path d="M251 132.5h4l1 1.200h6.500v8.600h-11.500z" fill="#e6cf63" stroke="#a8922e" stroke-width=".7"/><path d="M250.300 135h11l-1 7.500h-9.200z" fill="#f3e28a" stroke="#a8922e" stroke-width=".6"/><path d="M250.500 137c-.8-4 2.500-6.500 5-5l1.200-1.300.3 4.300-4 .2 1.200-1.400c-1.200-.7-2.600.6-2.200 3.200z" fill="#3aa33a" stroke="#2a8a2a" stroke-width=".3"/><rect x="268" y="129.800" width="13" height="13.200" rx=".8" fill="#2458a8" stroke="#1a4288" stroke-width=".6"/><rect x="270" y="130" width="9" height="6.500" fill="#f3f3f3"/><rect x="270" y="130" width="9" height="1.800" fill="#ecb886"/><rect x="270" y="133.200" width="9" height=".6" fill="#d9b9a0"/><rect x="271" y="138.500" width="7" height="4.500" fill="#e8e8f0"/><rect x="272" y="139.300" width="2" height="3" fill="#2f4f9f"/><path d="M287 136l6-5.500v3.200c4.500 0 7 2.500 7 7.800-1.500-3-3.500-4-7-4v3.500z" fill="#3e8ad6" stroke="#2b6fb5" stroke-width=".5"/><path d="M317.500 136l-6-5.500v3.200c-4.500 0-7 2.500-7 7.800 1.500-3 3.500-4 7-4v3.500z" fill="#c3c3c3" stroke="#b0b0b0" stroke-width=".5"/></svg><div class="t c" style="left:993px;top:130.5px;font-size:11px;color:#1a1a1a;-webkit-text-stroke:0.2px #1a1a1a;transform:translateX(-50%) scaleX(0.948);">Crescendo Masters by NCH Software - Licensed software</div><div class="abs" style="left:164px;top:147.6px;width:1592px;height:21px;background:linear-gradient(#d2d2d4,#cfcfd1);"></div><div class="abs" style="left:164px;top:146.8px;width:1592px;height:0.9px;background:#b7b7b7;"></div><div class="abs" style="left:164px;top:167.8px;width:1592px;height:1px;background:#a0a0a0;"></div><div class="abs" style="left:306.2px;top:149.2px;width:67px;height:19.8px;background:linear-gradient(#f8f8f8,#fdfdfd);border:1px solid #9c9c9c;border-bottom:none"></div><div class="t c" style="left:199px;top:154.4px;font-size:10.3px;color:#111;-webkit-text-stroke:0.3px #111;transform:translateX(-50%) scaleX(1.044);">Score</div><div class="t c" style="left:269px;top:154.4px;font-size:10.3px;color:#111;-webkit-text-stroke:0.3px #111;transform:translateX(-50%) scaleX(1.044);">Edit</div><div class="t c" style="left:339px;top:154.4px;font-size:10.3px;color:#111;-webkit-text-stroke:0.3px #111;transform:translateX(-50%) scaleX(1.044);">Notation</div><div class="t c" style="left:408px;top:154.4px;font-size:10.3px;color:#111;-webkit-text-stroke:0.3px #111;transform:translateX(-50%) scaleX(1.044);">Drums</div><div class="t c" style="left:478px;top:154.4px;font-size:10.3px;color:#111;-webkit-text-stroke:0.3px #111;transform:translateX(-50%) scaleX(1.044);">Strings</div><div class="t c" style="left:548px;top:154.4px;font-size:10.3px;color:#111;-webkit-text-stroke:0.3px #111;transform:translateX(-50%) scaleX(1.044);">Help</div><div class="t c" style="left:617.5px;top:154.4px;font-size:10.3px;color:#111;-webkit-text-stroke:0.3px #111;transform:translateX(-50%) scaleX(1.044);">Suite</div><svg style="left:0;top:0" width="1920" height="1080" viewBox="0 0 1920 1080"><rect x="1667.500" y="157" width="3" height="7" fill="#4a69ad"/><path d="M1671.300 157.200c1.600-1 2-2.600 2-4.600 1.600 0 2.300 1.600 1.500 3.800h3.200c1 0 1.300 1 .8 1.700.5.500.4 1.300-.1 1.700.4.600.2 1.400-.4 1.700.2.900-.3 1.500-1.300 1.500h-5.700z" fill="#fff" stroke="#4f4f4f" stroke-width=".8"/><rect x="1683.500" y="152" width="13" height="13" rx="1.500" fill="#3b5998"/><rect x="1700" y="152" width="13" height="13" rx="1.500" fill="#2aa3ef"/><path d="M1702.300 161.800c3.800 2 8 .2 8-4.800l1-1.200-1.300.3.900-1.300-1.400.5c-1.300-1.300-3.500-.4-3.200 1.500-1.700 0-3.100-.9-4-2.100-.6 1.100-.2 2.300.7 3l-1-.3c0 1.100.8 2 1.800 2.300l-.9.100c.3.900 1.100 1.500 2.100 1.500-.8.500-1.700.7-2.700.5z" fill="#fff"/><rect x="1717" y="152" width="13" height="13" rx="1.500" fill="#1c7cc0"/><rect x="1719.300" y="157" width="1.800" height="5.800" fill="#fff"/><circle cx="1720.200" cy="155" r="1.100" fill="#fff"/><path d="M1722.600 157h1.700v.8c.8-1.300 3.600-1.400 3.600 1.200v3.800h-1.800v-3.300c0-1.400-1.800-1.300-1.800 0v3.300h-1.700z" fill="#fff"/><circle cx="1746.500" cy="158.500" r="5.800" fill="#1b55c7"/><circle cx="1746.500" cy="158.500" r="5.800" fill="none" stroke="#123e9a" stroke-width=".5"/></svg><div class="t" style="left:1688.500px;top:153px;font-size:13px;font-weight:bold;color:#fff">f</div><div class="t c" style="left:1746.500px;top:153.500px;font-size:10px;font-weight:bold;color:#fff">?</div><div class="abs" style="left:164px;top:168.8px;width:1592px;height:48.5px;background:linear-gradient(#fefefe 0%,#f3f3f3 30%,#e7e7e7 60%,#dcdcdc 100%);"></div><div class="abs" style="left:164px;top:217px;width:1592px;height:1px;background:#979797;"></div><div class="abs" style="left:327.0px;top:173px;width:1px;height:41px;background:#b4b4b4;"></div><div class="abs" style="left:520.5px;top:173px;width:1px;height:41px;background:#b4b4b4;"></div><div class="abs" style="left:750.5px;top:173px;width:1px;height:41px;background:#b4b4b4;"></div><div class="abs" style="left:1112.0px;top:173px;width:1px;height:41px;background:#b4b4b4;"></div><div class="abs" style="left:1223.0px;top:173px;width:1px;height:41px;background:#b4b4b4;"></div><div class="abs" style="left:591.2px;top:171px;width:50.59999999999991px;height:44.8px;background:linear-gradient(#eef1f4 0%,#cfd6dd 45%,#8e9cab 100%);border-radius:3px;box-shadow:inset 0 0 0 1px #66727f"></div><div class="abs" style="left:691.2px;top:171px;width:54.59999999999991px;height:44.8px;background:linear-gradient(#eef1f4 0%,#cfd6dd 45%,#8e9cab 100%);border-radius:3px;box-shadow:inset 0 0 0 1px #66727f"></div><svg style="left:0;top:0" width="1920" height="1080" viewBox="0 0 1920 1080"><defs><linearGradient id="act" x1="0" y1="0" x2="1" y2="1"><stop offset="0" stop-color="#bdbdbd"/><stop offset="1" stop-color="#f4f4f4"/></linearGradient></defs><path d="M181.5 177.0L181.5 197.4L187.1 192.4L192.1 201.8L197.8 199.2L192.8 189.9L199.0 187.8Z" fill="url(#act)" stroke="#8f8f8f" stroke-width="1" stroke-linejoin="round"/><defs><linearGradient id="hdt" x1="0" y1="0" x2="0" y2="1"><stop offset="0" stop-color="#ffffff"/><stop offset=".55" stop-color="#d8d8d8"/><stop offset="1" stop-color="#8c8c8c"/></linearGradient></defs><g transform="translate(232.5 176) scale(1.07)"><path d="M6.5 24.5 C4.5 20.5 2.2 17.2 0.6 14.6 C-0.2 13 1.6 11.8 3 13 L6 16 L6 4.6 C6 2.6 8.8 2.6 8.8 4.6 L8.8 11 L9.4 11 L9.4 2 C9.4 0 12.2 0 12.2 2 L12.2 11 L12.8 11 L12.8 3 C12.8 1 15.6 1 15.6 3 L15.6 12 L16.2 12 L16.2 6 C16.2 4.2 18.8 4.2 18.8 6 L18.8 18 C18.8 21 18 23 17.4 24.5 Z" fill="url(#hdt)" stroke="#7d7d7d" stroke-width="0.93" stroke-linejoin="round"/></g><path d="M295.2 188.3L306.3 197.6" stroke="#3e3e3e" stroke-width="3.2" stroke-linecap="round"/><circle cx="290.7" cy="183.8" r="6.2" fill="#fff" stroke="#a9a9a9" stroke-width="2.2"/><circle cx="290.7" cy="183.8" r="7.2" fill="none" stroke="#8c8c8c" stroke-width=".6"/><path d="M287.3 183.8h6.8M290.7 180.4v6.8" stroke="#2ea52e" stroke-width="1.7"/><defs><linearGradient id="ms" x1="0" y1="0" x2="1" y2="0"><stop offset="0" stop-color="#fff"/><stop offset="1" stop-color="#c7c7e6"/></linearGradient></defs><rect x="344.500" y="178.800" width="26" height="9.200" fill="url(#ms)" stroke="#9a9a9a" stroke-width=".8"/><path d="M344.500 181.100h26M344.500 183.400h26M344.500 185.700h26" stroke="#9a9a9a" stroke-width=".6"/><rect x="344.500" y="190.500" width="26" height="10" fill="url(#ms)" stroke="#555" stroke-width=".8" stroke-dasharray="1.500 1.200"/><path d="M354.500 195.500h6M357.500 192.500v6" stroke="#2ea52e" stroke-width="1.800"/><rect x="416.500" y="176" width="2.100" height="26" fill="#111"/><rect x="472.700" y="176.500" width="1" height="25.500" fill="#111"/><rect x="474.900" y="176.500" width="3.200" height="25.500" fill="#111"/><rect x="479.400" y="176.500" width="3.300" height="25.500" fill="#111"/><rect x="483.900" y="176.500" width="1" height="25.500" fill="#111"/><circle cx="469.700" cy="185.600" r="1.500" fill="#111"/><circle cx="469.700" cy="190.900" r="1.500" fill="#111"/><circle cx="487.600" cy="185.600" r="1.500" fill="#111"/><circle cx="487.600" cy="190.900" r="1.500" fill="#111"/><ellipse cx="551.8" cy="189.3" rx="3" ry="2.2" transform="rotate(-22 551.8 189.3)" fill="#000"/><rect x="553.800" y="177" width="1" height="12.300" fill="#000"/><path d="M549.300 201.500v-11.500" stroke="#8a8a8a" stroke-width=".9"/><ellipse cx="608" cy="197.8" rx="5.3" ry="3.8" transform="rotate(-24 608 197.8)" fill="#000"/><rect x="611.600" y="177.500" width="1.300" height="20.300" fill="#000"/><path d="M612.5 177.5c0.575 4.6 8.049999999999999 6.8999999999999995 6.324999999999999 16.099999999999998c0.575 -5.75 -3.4499999999999997 -7.475 -6.324999999999999 -9.2zM612.5 183.825c0.575 4.6 8.049999999999999 6.8999999999999995 6.324999999999999 16.099999999999998c0.575 -5.75 -3.4499999999999997 -7.475 -6.324999999999999 -9.2z" fill="#000"/><rect x="645.500" y="184.700" width="27" height="1.600" fill="#000"/><rect x="650" y="185.500" width="17.500" height="6.500" fill="#000"/><ellipse cx="706" cy="193" rx="3.3" ry="2.5" transform="rotate(-22 706 193)" fill="#000"/><ellipse cx="720.5" cy="191.2" rx="3.3" ry="2.5" transform="rotate(-22 720.5 191.2)" fill="#000"/><rect x="708.500" y="179.500" width="1" height="13.500" fill="#000"/><rect x="723" y="177.500" width="1" height="13.800" fill="#000"/><path d="M708.500 179.300l15.500-2.300v2.600l-15.500 2.300z" fill="#000"/><path d="M913.500 185.500h6.500" stroke="#444" stroke-width="1" stroke-dasharray="1.500 1"/><path d="M922.500 184.500v9.500" stroke="#444" stroke-width="1.1"/><path d="M968.500 186.500l.800 4.500h24l.800-4.500" fill="none" stroke="#222" stroke-width="1.300"/><g opacity=".45"><g transform="translate(1051 189.5) scale(0.82)"><path d="M0.5 13 C-2.500 13 -3.500 10 -1.500 9 M0.500 13 C3 13 3.200 9.500 1 -8 C0.300 -13 3.500 -15 3.300 -11 C3 -7 -4.500 -4 -4.500 1.500 C-4.500 6 2 7.500 4 4.500 C6 1.500 2.500 -1.500 -0.200 0.200 C-2.300 1.500 -1.500 4.500 0.800 4.500" fill="none" stroke="#111" stroke-width="1.59" stroke-linecap="round"/><circle cx="-1.300" cy="10.800" r="1.600" fill="#111"/></g><path d="M1058 179.500v10M1060.600 178.500v10M1056.300 183.300l6-1.700M1056.300 186.500l6-1.700" stroke="#000" stroke-width="1" fill="none"/><path d="M1065.500 178.800v11c3.500-1.800 4.800-4.600 2.600-5.700-1-.4-2.600.3-2.600 1.400" stroke="#000" stroke-width="1" fill="none"/><path d="M1057.500 200.500c0-8 12-8 12 0" fill="none" stroke="#000" stroke-width="1.300"/><circle cx="1063.500" cy="199.300" r="1.200" fill="#000"/></g><path d="M1148 190.200h4v4h4v4h-4v4h-4v-4h-4v-4h4z" fill="#4aae3c"/><path d="M1179.500 178.800h18" fill="none" stroke="#222" stroke-width="2.200"/><path d="M1179.500 178.500v10M1197 178.500v10" stroke="#222" stroke-width="1"/><ellipse cx="1177.8" cy="189" rx="2.3" ry="1.5" transform="rotate(-10 1177.8 189)" fill="#000"/><ellipse cx="1195.3" cy="189" rx="2.3" ry="1.5" transform="rotate(-10 1195.3 189)" fill="#000"/><path d="M1251 183c5-7 20-7 24 1" fill="none" stroke="#000" stroke-width="1.400"/><ellipse cx="1252" cy="195" rx="2.6" ry="1.9" transform="rotate(-20 1252 195)" fill="#000"/><ellipse cx="1263.5" cy="197.5" rx="2.6" ry="1.9" transform="rotate(-20 1263.5 197.5)" fill="#000"/><ellipse cx="1272.5" cy="197.5" rx="2.6" ry="1.9" transform="rotate(-20 1272.5 197.5)" fill="#000"/><path d="M1254.200 195v-11l11.500 2.500v11" fill="none" stroke="#000" stroke-width="1"/><path d="M1254.200 184l11.500 2.500v2l-11.500-2.500z" fill="#000"/><path d="M1274.700 197.500v-11" stroke="#000" stroke-width="1"/><rect x="1325.500" y="177.500" width="13" height="6.500" fill="#fff" stroke="#888" stroke-width=".8"/><path d="M1314.500 185.500h27v14h-27zM1314.500 189h27M1314.500 192.500h27M1314.500 196h27M1325.500 185.500v14M1338.500 185.500v14" fill="#fafafa" stroke="#888" stroke-width=".8"/><path d="M1340.500 185.500v14" stroke="#888" stroke-width=".8"/><g transform="translate(1388 190.5) scale(0.95)"><path d="M0.5 13 C-2.500 13 -3.500 10 -1.500 9 M0.500 13 C3 13 3.200 9.500 1 -8 C0.300 -13 3.500 -15 3.300 -11 C3 -7 -4.500 -4 -4.500 1.500 C-4.500 6 2 7.500 4 4.500 C6 1.500 2.500 -1.500 -0.200 0.200 C-2.300 1.500 -1.500 4.500 0.800 4.500" fill="none" stroke="#111" stroke-width="1.37" stroke-linecap="round"/><circle cx="-1.300" cy="10.800" r="1.600" fill="#111"/></g><defs><linearGradient id="bc" x1="0" y1="0" x2="0" y2="1"><stop offset="0" stop-color="#6b6b6b"/><stop offset="1" stop-color="#2e2e2e"/></linearGradient></defs><path d="M1452.500 180.500v-3h8.500v3" fill="none" stroke="#3a3a3a" stroke-width="1.500"/><path d="M1444.500 181l15-1.500 9 2.500v14l-9 3.500-15-3z" fill="url(#bc)"/><path d="M1459.500 179.500v20" stroke="#222" stroke-width=".6"/><rect x="1457" y="187" width="5" height="2.500" fill="#999"/><path d="M1459.500 193.500h6v-3l6 5.500-6 5.500v-3h-6z" fill="#6cc24a" stroke="#4d9a33" stroke-width=".6"/></svg><div class="t c" style="left:782px;top:175px;font-family:'Liberation Serif',serif;font-style:italic;font-weight:bold;font-size:19.500px;color:#111;letter-spacing:-.5px">mp</div><div class="t c" style="left:844px;top:172.500px;font-family:'Liberation Serif',serif;font-style:italic;font-weight:bold;font-size:28px;color:#111;letter-spacing:-.5px">fp</div><div class="t" style="left:894.500px;top:181px;font-family:'Liberation Serif',serif;font-size:15.500px;color:#333">8</div><div class="t" style="left:902.500px;top:181.500px;font-family:'Liberation Serif',serif;font-style:italic;font-weight:bold;font-size:9px;color:#333">va</div><div class="t c" style="left:1140.500px;top:168.800px;font-family:'Liberation Serif',serif;font-size:38px;color:#111">T</div><div class="t" style="left:1175.500px;top:190.500px;font-size:12.500px;color:#333">A</div><div class="t" style="left:1191.500px;top:190.500px;font-size:12.500px;color:#333">B</div><div class="t" style="left:1183px;top:180px;font-size:20px;color:#aaa;font-family:'Liberation Serif',serif;font-style:italic">L</div><div class="t" style="left:1328.500px;top:177.500px;font-size:6px;font-weight:bold;color:#222">x.</div><div class="t c" style="left:189px;top:203.9px;font-size:10px;color:#111;-webkit-text-stroke:0.3px #111;transform:translateX(-50%) scaleX(0.935);">Select</div><div class="t c" style="left:243px;top:203.9px;font-size:10px;color:#111;-webkit-text-stroke:0.3px #111;transform:translateX(-50%) scaleX(0.935);">Pan</div><div class="t c" style="left:296px;top:203.9px;font-size:10px;color:#111;-webkit-text-stroke:0.3px #111;transform:translateX(-50%) scaleX(0.935);">Zoom</div><div class="t c" style="left:363px;top:203.9px;font-size:10px;color:#111;-webkit-text-stroke:0.3px #111;transform:translateX(-50%) scaleX(0.935);">Measure</div><div class="t c" style="left:418px;top:203.9px;font-size:10px;color:#111;-webkit-text-stroke:0.3px #111;transform:translateX(-50%) scaleX(0.935);">Barline</div><div class="t c" style="left:483.5px;top:203.9px;font-size:10px;color:#111;-webkit-text-stroke:0.3px #111;transform:translateX(-50%) scaleX(0.935);">Repeat</div><div class="t c" style="left:557.5px;top:203.9px;font-size:10px;color:#111;-webkit-text-stroke:0.3px #111;transform:translateX(-50%) scaleX(0.935);">Voice</div><div class="t c" style="left:610.5px;top:203.9px;font-size:10px;color:#111;-webkit-text-stroke:0.3px #111;transform:translateX(-50%) scaleX(0.935);">Notes</div><div class="t c" style="left:660.5px;top:203.9px;font-size:10px;color:#111;-webkit-text-stroke:0.3px #111;transform:translateX(-50%) scaleX(0.935);">Rests</div><div class="t c" style="left:782px;top:203.9px;font-size:10px;color:#111;-webkit-text-stroke:0.3px #111;transform:translateX(-50%) scaleX(0.935);">Dynamics</div><div class="t c" style="left:843.5px;top:203.9px;font-size:10px;color:#111;-webkit-text-stroke:0.3px #111;transform:translateX(-50%) scaleX(0.935);">Accent</div><div class="t c" style="left:909.5px;top:203.9px;font-size:10px;color:#111;-webkit-text-stroke:0.3px #111;transform:translateX(-50%) scaleX(0.935);">Octave Line</div><div class="t c" style="left:981.5px;top:203.9px;font-size:10px;color:#111;-webkit-text-stroke:0.3px #111;transform:translateX(-50%) scaleX(0.935);">Pedal Line</div><div class="t c" style="left:1141.5px;top:203.9px;font-size:10px;color:#111;-webkit-text-stroke:0.3px #111;transform:translateX(-50%) scaleX(0.935);">Text</div><div class="t c" style="left:1188.5px;top:203.9px;font-size:10px;color:#111;-webkit-text-stroke:0.3px #111;transform:translateX(-50%) scaleX(0.935);">Lyrics</div><div class="t c" style="left:1262.5px;top:203.9px;font-size:10px;color:#111;-webkit-text-stroke:0.3px #111;transform:translateX(-50%) scaleX(0.935);">Relationships</div><div class="t c" style="left:1328px;top:203.9px;font-size:10px;color:#111;-webkit-text-stroke:0.3px #111;transform:translateX(-50%) scaleX(0.935);">Volta</div><div class="t c" style="left:1393.5px;top:203.9px;font-size:10px;color:#111;-webkit-text-stroke:0.3px #111;transform:translateX(-50%) scaleX(0.935);">Signatures</div><div class="t c" style="left:1457.5px;top:203.9px;font-size:10px;color:#111;-webkit-text-stroke:0.3px #111;transform:translateX(-50%) scaleX(0.935);">NCH Suite</div><div class="t c" style="left:1064.5px;top:203.9px;font-size:10px;color:#9a9a9a;-webkit-text-stroke:0.3px #9a9a9a;transform:translateX(-50%) scaleX(0.935);">More Symbols</div><div class="t c" style="left:713.5px;top:196.5px;font-size:7px;color:#111;-webkit-text-stroke:0.2px #111;">Auto</div><div class="t c" style="left:713px;top:203.9px;font-size:10px;color:#111;-webkit-text-stroke:0.3px #111;transform:translateX(-50%) scaleX(0.935);">Beams</div><svg style="left:378px;top:189px" width="8" height="6" viewBox="0 0 8 6"><path d="M1.8 1.9L4 4.1 6.2 1.9" fill="none" stroke="#222" stroke-width="1.5" stroke-linecap="round" stroke-linejoin="round"/></svg><svg style="left:440px;top:189px" width="8" height="6" viewBox="0 0 8 6"><path d="M1.8 1.9L4 4.1 6.2 1.9" fill="none" stroke="#222" stroke-width="1.5" stroke-linecap="round" stroke-linejoin="round"/></svg><svg style="left:498px;top:189px" width="8" height="6" viewBox="0 0 8 6"><path d="M1.8 1.9L4 4.1 6.2 1.9" fill="none" stroke="#222" stroke-width="1.5" stroke-linecap="round" stroke-linejoin="round"/></svg><svg style="left:572px;top:189px" width="8" height="6" viewBox="0 0 8 6"><path d="M1.8 1.9L4 4.1 6.2 1.9" fill="none" stroke="#222" stroke-width="1.5" stroke-linecap="round" stroke-linejoin="round"/></svg><svg style="left:630px;top:189px" width="8" height="6" viewBox="0 0 8 6"><path d="M1.8 1.9L4 4.1 6.2 1.9" fill="none" stroke="#222" stroke-width="1.5" stroke-linecap="round" stroke-linejoin="round"/></svg><svg style="left:680px;top:189px" width="8" height="6" viewBox="0 0 8 6"><path d="M1.8 1.9L4 4.1 6.2 1.9" fill="none" stroke="#222" stroke-width="1.5" stroke-linecap="round" stroke-linejoin="round"/></svg><svg style="left:735px;top:189px" width="8" height="6" viewBox="0 0 8 6"><path d="M1.8 1.9L4 4.1 6.2 1.9" fill="none" stroke="#222" stroke-width="1.5" stroke-linecap="round" stroke-linejoin="round"/></svg><svg style="left:810.5px;top:189px" width="8" height="6" viewBox="0 0 8 6"><path d="M1.8 1.9L4 4.1 6.2 1.9" fill="none" stroke="#222" stroke-width="1.5" stroke-linecap="round" stroke-linejoin="round"/></svg><svg style="left:866px;top:189px" width="8" height="6" viewBox="0 0 8 6"><path d="M1.8 1.9L4 4.1 6.2 1.9" fill="none" stroke="#222" stroke-width="1.5" stroke-linecap="round" stroke-linejoin="round"/></svg><svg style="left:942px;top:189px" width="8" height="6" viewBox="0 0 8 6"><path d="M1.8 1.9L4 4.1 6.2 1.9" fill="none" stroke="#222" stroke-width="1.5" stroke-linecap="round" stroke-linejoin="round"/></svg><svg style="left:1011px;top:189px" width="8" height="6" viewBox="0 0 8 6"><path d="M1.8 1.9L4 4.1 6.2 1.9" fill="none" stroke="#222" stroke-width="1.5" stroke-linecap="round" stroke-linejoin="round"/></svg><svg style="left:1208.5px;top:189px" width="8" height="6" viewBox="0 0 8 6"><path d="M1.8 1.9L4 4.1 6.2 1.9" fill="none" stroke="#222" stroke-width="1.5" stroke-linecap="round" stroke-linejoin="round"/></svg><svg style="left:1298.5px;top:189px" width="8" height="6" viewBox="0 0 8 6"><path d="M1.8 1.9L4 4.1 6.2 1.9" fill="none" stroke="#222" stroke-width="1.5" stroke-linecap="round" stroke-linejoin="round"/></svg><svg style="left:1347.5px;top:189px" width="8" height="6" viewBox="0 0 8 6"><path d="M1.8 1.9L4 4.1 6.2 1.9" fill="none" stroke="#222" stroke-width="1.5" stroke-linecap="round" stroke-linejoin="round"/></svg><svg style="left:1408px;top:189px" width="8" height="6" viewBox="0 0 8 6"><path d="M1.8 1.9L4 4.1 6.2 1.9" fill="none" stroke="#222" stroke-width="1.5" stroke-linecap="round" stroke-linejoin="round"/></svg><svg style="left:1079px;top:189px" width="8" height="6" viewBox="0 0 8 6"><path d="M1.8 1.9L4 4.1 6.2 1.9" fill="none" stroke="#999" stroke-width="1.5" stroke-linecap="round" stroke-linejoin="round"/></svg><div class="abs" style="left:164px;top:218px;width:1592px;height:28px;background:#fff;"></div><div class="abs" style="left:178.5px;top:222.5px;width:184px;height:23px;background:#fff;border:1px solid #d0d0d0;border-bottom:none"></div><div class="abs" style="left:362.5px;top:222.5px;width:201.5px;height:23px;background:#fff;border:1px solid #d0d0d0;border-bottom:none;border-left:none"></div><div class="abs" style="left:564px;top:221px;width:75px;height:25px;background:#3a7a2e;"></div><div class="abs" style="left:164px;top:245px;width:1592px;height:1px;background:#d0d0d0;"></div><div class="t" style="left:186px;top:229px;font-size:11.3px;color:#111;-webkit-text-stroke:0.2px #111;">Dance of the Sugar Plum Fairy</div><div class="t" style="left:370px;top:229px;font-size:11.3px;color:#111;-webkit-text-stroke:0.2px #111;">Greensleeves (What Child is This)</div><div class="t" style="left:570.5px;top:227.4px;font-size:11.3px;color:#fff;-webkit-text-stroke:0.2px #fff;">Grooving</div><svg style="left:343.5px;top:229.5px" width="10" height="10" viewBox="-5 -5 10 10"><path d="M-4 -4L4 4M4 -4L-4 4" stroke="#666" stroke-width="1" fill="none"/></svg><svg style="left:543.5px;top:229.5px" width="10" height="10" viewBox="-5 -5 10 10"><path d="M-4 -4L4 4M4 -4L-4 4" stroke="#666" stroke-width="1" fill="none"/></svg><svg style="left:619.5px;top:228px" width="10" height="10" viewBox="-5 -5 10 10"><path d="M-4 -4L4 4M4 -4L-4 4" stroke="#a9c7a3" stroke-width="1" fill="none"/></svg><div class="abs" style="left:164px;top:248.7px;width:1592px;height:649.3px;background:#ececec;"></div><div class="abs" style="left:164px;top:248.700px;width:91px;height:649.300px;background:#ececec"></div><div class="abs" style="left:255px;top:248.700px;width:23px;height:649.300px;background:#e9e9e9"></div><svg style="left:0;top:0" width="1920" height="1080" viewBox="0 0 1920 1080"><path d="M254.500 249V284L277.500 295.500V412.500L254.500 425V898" fill="none" stroke="#a9a9a9" stroke-width="1"/><path d="M255 284.600L277 295.800V412.200L255 424.400Z" fill="#f3f3f3"/><path d="M269.500 295.500l-5 4.500 5 4.500M269.500 405.500l-5 4.500 5 4.500" fill="none" stroke="#b5b5b5" stroke-width="1"/></svg><div class="t" style="left:263px;top:354.500px;font-size:10.500px;color:#111;transform:translate(-50%,-50%) rotate(90deg)">Hide Note Tools</div><div class="btn" style="left:165.6px;top:258.5px;width:37.8px;height:37px"></div><div class="btn" style="left:207px;top:258.5px;width:38px;height:37px"></div><div class="btn" style="left:165.6px;top:301px;width:37.8px;height:37px"></div><div class="btn" style="left:207px;top:301px;width:38px;height:37px"></div><div class="btn" style="left:165.6px;top:349px;width:37.8px;height:37.5px"></div><div class="btn" style="left:207px;top:349px;width:38px;height:37.5px"></div><div class="btn" style="left:165.6px;top:392.5px;width:37.8px;height:37px"></div><div class="btn" style="left:207px;top:392.5px;width:38px;height:37px"></div><div class="btn" style="left:165.6px;top:436px;width:37.8px;height:37px"></div><div class="btn" style="left:207px;top:436px;width:38px;height:37px"></div><div class="btn" style="left:165.6px;top:479px;width:37.8px;height:37px"></div><div class="btn" style="left:207px;top:479px;width:38px;height:37px"></div><div class="btn on" style="left:165.6px;top:522px;width:37.8px;height:37px"></div><div class="btn" style="left:207px;top:522px;width:38px;height:37px"></div><div class="btn" style="left:165.6px;top:565px;width:37.8px;height:37.5px"></div><div class="btn" style="left:207px;top:565px;width:38px;height:37.5px"></div><div class="btn" style="left:165.6px;top:608px;width:37.8px;height:37.5px"></div><div class="btn" style="left:207px;top:608px;width:38px;height:37.5px"></div><div class="btn" style="left:165.6px;top:655.5px;width:37.8px;height:37.5px"></div><div class="btn" style="left:207px;top:655.5px;width:38px;height:37.5px"></div><div class="btn" style="left:165.600px;top:699px;width:79.400px;height:38px"></div><div class="btn on" style="left:168.2px;top:748px;width:16.200px;height:16px;border-radius:4px"></div><div class="t c" style="left:176.29999999999998px;top:750.500px;font-size:11px;color:#fff">1</div><div class="btn" style="left:189.2px;top:748px;width:16.200px;height:16px;border-radius:4px"></div><div class="t c" style="left:197.29999999999998px;top:750.500px;font-size:11px;color:#222">2</div><div class="btn" style="left:210.8px;top:748px;width:16.200px;height:16px;border-radius:4px"></div><div class="t c" style="left:218.9px;top:750.500px;font-size:11px;color:#222">3</div><div class="btn" style="left:232.5px;top:748px;width:16.200px;height:16px;border-radius:4px"></div><div class="t c" style="left:240.6px;top:750.500px;font-size:11px;color:#222">4</div><svg style="left:0;top:0" width="1920" height="1080" viewBox="0 0 1920 1080"><defs><linearGradient id="acl" x1="0" y1="0" x2="1" y2="1"><stop offset="0" stop-color="#bdbdbd"/><stop offset="1" stop-color="#f4f4f4"/></linearGradient></defs><path d="M175.5 265.0L175.5 285.4L181.1 280.4L186.1 289.8L191.8 287.2L186.8 277.9L193.0 275.8Z" fill="url(#acl)" stroke="#8f8f8f" stroke-width="1" stroke-linejoin="round"/><rect x="224.200" y="263.800" width="2.300" height="26" rx="1" fill="#111"/><defs><linearGradient id="hdl" x1="0" y1="0" x2="0" y2="1"><stop offset="0" stop-color="#ffffff"/><stop offset=".55" stop-color="#d8d8d8"/><stop offset="1" stop-color="#8c8c8c"/></linearGradient></defs><g transform="translate(173.5 307.5) scale(1.07)"><path d="M6.5 24.5 C4.5 20.5 2.2 17.2 0.6 14.6 C-0.2 13 1.6 11.8 3 13 L6 16 L6 4.6 C6 2.6 8.8 2.6 8.8 4.6 L8.8 11 L9.4 11 L9.4 2 C9.4 0 12.2 0 12.2 2 L12.2 11 L12.8 11 L12.8 3 C12.8 1 15.6 1 15.6 3 L15.6 12 L16.2 12 L16.2 6 C16.2 4.2 18.8 4.2 18.8 6 L18.8 18 C18.8 21 18 23 17.4 24.5 Z" fill="url(#hdl)" stroke="#7d7d7d" stroke-width="0.93" stroke-linejoin="round"/></g><path d="M225.0 318.5L235.7 327.5" stroke="#3e3e3e" stroke-width="3.2" stroke-linecap="round"/><circle cx="220.5" cy="314" r="6.2" fill="#fff" stroke="#a9a9a9" stroke-width="2.2"/><circle cx="220.5" cy="314" r="7.2" fill="none" stroke="#8c8c8c" stroke-width=".6"/><path d="M217.1 314h6.8M220.5 310.6v6.8" stroke="#2ea52e" stroke-width="1.7"/><ellipse cx="184.500" cy="367.700" rx="12.500" ry="7.500" fill="#000"/><ellipse cx="184.500" cy="367.700" rx="5.200" ry="6" transform="rotate(-20 184.500 367.700)" fill="#fff"/><rect x="213" y="363.300" width="26" height="1.600" fill="#000"/><rect x="217.500" y="364" width="17.500" height="7.800" fill="#000"/><ellipse cx="183.5" cy="419.5" rx="5.7" ry="3.3000000000000003" transform="rotate(-28 183.5 419.5)" fill="none" stroke="#000" stroke-width="1.800"/><rect x="188.232" y="399" width="1.2" height="19.5" fill="#000"/><rect x="213" y="412.200" width="26" height="1.600" fill="#000"/><rect x="217.500" y="407" width="17.500" height="5.800" fill="#000"/><ellipse cx="183.5" cy="461.5" rx="6" ry="4.3" transform="rotate(-24 183.5 461.5)" fill="#000"/><rect x="188.06" y="442" width="1.2" height="18.5" fill="#000"/><path transform="translate(225.5 454.5) scale(0.62)" d="M-5.6 -18 L-4.6 -18.8 L5.2 -7.2 C2.5 -3.5 1.5 -1 1 1.2 L5.8 10.2 L5 11 C1.5 8.6 -2.6 9.6 -2.8 12.2 C-2.9 14 -1 16 1.2 17.8 L0.4 18.6 C-4 15.5 -7 12 -6.4 9 C-5.8 6 -2 5.6 1.6 7.2 L-4.4 -0.2 C-2.5 -2.5 -0.5 -5 0.6 -7.6 Z" fill="#000"/><ellipse cx="182.5" cy="505" rx="6" ry="4.3" transform="rotate(-24 182.5 505)" fill="#000"/><rect x="187.06" y="484.5" width="1.2" height="19.5" fill="#000"/><path d="M187.66 484.5c.8 3.2 7 4.8 5.4 13.5c0-4.4-2.900-6.800-5.400-10.5z" fill="#000"/><path d="M221.91325 509.5L227.99387499999997 487.075L230.788375 487.075L224.242 509.5z" fill="#000"/><circle cx="219.46949999999998" cy="489.03000000000003" r="4.0365" fill="#000"/><path d="M216.24949999999998 489.95000000000005C218.31949999999998 495.355 225.4495 493.86 229.3595 486.96000000000004L228.2095 490.87C225.4495 496.62 218.31949999999998 496.50500000000005 216.24949999999998 489.95000000000005z" fill="#000"/><ellipse cx="181.5" cy="548.5" rx="6" ry="4.3" transform="rotate(-24 181.5 548.5)" fill="#000"/><rect x="186.06" y="528" width="1.2" height="19.5" fill="#000"/><path d="M186.66 528c.8 3.2 7 4.8 5.4 13.5c0-4.4-2.900-6.800-5.400-10.5z" fill="#000"/><path d="M186.66 534c.8 3.2 7 4.8 5.4 13.5c0-4.4-2.900-6.800-5.400-10.5z" fill="#000"/><path d="M222.181 552.5L228.982795 527.813L231.088795 527.813L223.936 552.5z" fill="#000"/><circle cx="223.30634500000002" cy="529.1389999999999" r="3.042" fill="#000"/><path d="M221.12234500000002 529.7629999999999C222.52634500000002 533.4289999999999 227.362345 532.4149999999998 230.01434500000002 527.7349999999999L229.23434500000002 530.387C227.362345 534.2869999999999 222.52634500000002 534.209 221.12234500000002 529.7629999999999z" fill="#000"/><circle cx="220.6054" cy="538.616" r="3.042" fill="#000"/><path d="M218.4214 539.24C219.8254 542.906 224.6614 541.8919999999999 227.3134 537.212L226.5334 539.864C224.6614 543.764 219.8254 543.686 218.4214 539.24z" fill="#000"/><ellipse cx="181.5" cy="592.5" rx="5" ry="3.6" transform="rotate(-24 181.5 592.5)" fill="#000"/><rect x="185.20000000000002" y="571.5" width="1.2" height="20.0" fill="#000"/><path d="M185.8 571.5c.8 3.2 7 4.8 5.4 11.5c0-4.4-2.900-6.800-5.400-9.3z" fill="#000"/><path d="M185.8 575.9c.8 3.2 7 4.8 5.4 11.5c0-4.4-2.900-6.800-5.400-9.3z" fill="#000"/><path d="M185.8 580.3c.8 3.2 7 4.8 5.4 11.5c0-4.4-2.900-6.800-5.400-9.3z" fill="#000"/><path d="M220.3448 596.5L227.46015500000001 570.877L229.144955 570.877L221.7488 596.5z" fill="#000"/><circle cx="223.2554675" cy="571.8715" r="2.4336" fill="#000"/><path d="M221.6174675 572.3394999999999C222.6704675 575.0889999999999 226.2974675 574.3285 228.28646750000001 570.8185L227.7014675 572.8075C226.2974675 575.7325 222.6704675 575.674 221.6174675 572.3394999999999z" fill="#000"/><circle cx="221.22975875000003" cy="578.9792499999999" r="2.4336" fill="#000"/><path d="M219.59175875000003 579.4472499999998C220.64475875000002 582.1967499999998 224.27175875000003 581.4362499999999 226.26075875000004 577.9262499999999L225.67575875000003 579.9152499999999C224.27175875000003 582.8402499999999 220.64475875000002 582.7817499999999 219.59175875000003 579.4472499999998z" fill="#000"/><circle cx="219.20405000000002" cy="586.0869999999999" r="2.4336" fill="#000"/><path d="M217.56605000000002 586.5549999999998C218.61905000000002 589.3044999999998 222.24605000000003 588.5439999999999 224.23505000000003 585.0339999999999L223.65005000000002 587.0229999999999C222.24605000000003 589.9479999999999 218.61905000000002 589.8894999999999 217.56605000000002 586.5549999999998z" fill="#000"/><ellipse cx="182" cy="636" rx="4.3" ry="3.2" transform="rotate(-24 182 636)" fill="#000"/><rect x="185.098" y="614" width="1.2" height="21" fill="#000"/><path d="M185.698 614.0c.8 3.2 7 4.8 5.4 11.5c0-4.4-2.900-6.800-5.400-9.3z" fill="#000"/><path d="M185.698 618.4c.8 3.2 7 4.8 5.4 11.5c0-4.4-2.900-6.800-5.400-9.3z" fill="#000"/><path d="M185.698 622.8c.8 3.2 7 4.8 5.4 11.5c0-4.4-2.900-6.800-5.400-9.3z" fill="#000"/><path d="M185.698 627.2c.8 3.2 7 4.8 5.4 11.5c0-4.4-2.900-6.800-5.400-9.3z" fill="#000"/><path d="M221.9407 640L229.2754025 613.7035L230.7136025 613.7035L223.1392 640z" fill="#000"/><circle cx="225.93957749999998" cy="614.5025" r="2.0774" fill="#000"/><path d="M224.62357749999998 614.8785C225.46957749999999 617.0875000000001 228.3835775 616.4765000000001 229.9815775 613.6565L229.5115775 615.2545C228.3835775 617.6045 225.46957749999999 617.5575 224.62357749999998 614.8785z" fill="#000"/><circle cx="224.312085" cy="620.213" r="2.0774" fill="#000"/><path d="M222.996085 620.5889999999999C223.842085 622.798 226.756085 622.187 228.354085 619.367L227.884085 620.9649999999999C226.756085 623.3149999999999 223.842085 623.2679999999999 222.996085 620.5889999999999z" fill="#000"/><circle cx="222.6845925" cy="625.9235" r="2.0774" fill="#000"/><path d="M221.3685925 626.2995C222.2145925 628.5085 225.12859250000002 627.8975 226.7265925 625.0775L226.2565925 626.6754999999999C225.12859250000002 629.0255 222.2145925 628.9784999999999 221.3685925 626.2995z" fill="#000"/><circle cx="221.0571" cy="631.634" r="2.0774" fill="#000"/><path d="M219.7411 632.01C220.5871 634.219 223.5011 633.6080000000001 225.0991 630.788L224.6291 632.386C223.5011 634.736 220.5871 634.689 219.7411 632.01z" fill="#000"/><ellipse cx="174.5" cy="685.3" rx="2.8" ry="2.1" transform="rotate(-22 174.5 685.3)" fill="#000"/><rect x="176.4" y="668.500" width="1" height="16.500" fill="#000"/><ellipse cx="185.5" cy="685.3" rx="2.8" ry="2.1" transform="rotate(-22 185.5 685.3)" fill="#000"/><rect x="187.4" y="668.500" width="1" height="16.500" fill="#000"/><ellipse cx="196.5" cy="685.3" rx="2.8" ry="2.1" transform="rotate(-22 196.5 685.3)" fill="#000"/><rect x="198.4" y="668.500" width="1" height="16.500" fill="#000"/><path d="M172.500 669.500v-3.500h9M190 666h9v3.500" fill="none" stroke="#000" stroke-width="1"/><path d="M217 672c6-9 20-9 24 1c-5-7-18-7-24-1z" fill="#000" stroke="#000" stroke-width=".6"/><ellipse cx="216.5" cy="682.5" rx="2.7" ry="2" transform="rotate(-22 216.5 682.5)" fill="#000"/><ellipse cx="227.5" cy="685" rx="2.7" ry="2" transform="rotate(-22 227.5 685)" fill="#000"/><ellipse cx="237" cy="685" rx="2.7" ry="2" transform="rotate(-22 237 685)" fill="#000"/><path d="M218.500 682.500v-10.500l11 2.500v10.500" fill="none" stroke="#000" stroke-width="1"/><path d="M218.500 672l11 2.500v2.200l-11-2.500z" fill="#000"/><path d="M239.200 685v-10.500" stroke="#000" stroke-width="1"/><ellipse cx="198.5" cy="721" rx="5.4" ry="3.9" transform="rotate(-24 198.5 721)" fill="#000"/><rect x="202.544" y="706.5" width="1.2" height="13.5" fill="#000"/><ellipse cx="213.5" cy="721" rx="5.4" ry="3.9" transform="rotate(-24 213.5 721)" fill="#000"/><rect x="217.544" y="706.5" width="1.2" height="13.5" fill="#000"/><path d="M196 727c5 5.500 15 5.500 20 0c-5 3.600-15 3.600-20 0z" fill="#000" stroke="#000" stroke-width=".7"/></svg><div class="t" style="left:183.500px;top:660.500px;font-size:6px;font-style:italic;color:#111;font-family:'Liberation Serif',serif">3</div><div class="abs" style="left:278px;top:246.1px;width:1263px;height:570px;background:#fff;"></div><svg style="left:0;top:0" width="1920" height="1080" viewBox="0 0 1920 1080"><rect x="362" y="609.9" width="1094" height="1.1" fill="#2e2e2e"/><rect x="362" y="622.05" width="1094" height="1.1" fill="#2e2e2e"/><rect x="362" y="634.2" width="1094" height="1.1" fill="#2e2e2e"/><rect x="362" y="646.35" width="1094" height="1.1" fill="#2e2e2e"/><rect x="362" y="658.5" width="1094" height="1.1" fill="#2e2e2e"/><rect x="1455" y="609.9" width="1.2" height="49.700000000000024" fill="#2e2e2e"/><g transform="translate(371.9 622.75) scale(0.05373455131649651)" fill="#000"><rect x="0" y="-436" width="95" height="882"/><rect x="140" y="-436" width="40" height="882"/><path d="M180 0 L290 -180 C295 -110 315 -60 335 0 C315 60 295 110 290 180 Z"/><path d="M295 -130 C310 -80 350 -55 400 -58 C500 -62 578 -130 578 -240 C578 -360 500 -438 395 -438 C310 -438 235 -400 230 -335 C228 -295 255 -272 290 -272 C325 -272 352 -298 352 -332 C352 -365 330 -380 330 -395 C335 -408 370 -412 395 -412 C460 -412 482 -340 482 -240 C482 -140 450 -84 395 -84 C350 -84 325 -110 315 -150 Z"/><path d="M295 -130 C310 -80 350 -55 400 -58 C500 -62 578 -130 578 -240 C578 -360 500 -438 395 -438 C310 -438 235 -400 230 -335 C228 -295 255 -272 290 -272 C325 -272 352 -298 352 -332 C352 -365 330 -380 330 -395 C335 -408 370 -412 395 -412 C460 -412 482 -340 482 -240 C482 -140 450 -84 395 -84 C350 -84 325 -110 315 -150 Z" transform="scale(1 -1)"/></g><path d="M420.0 632.1v32.0M426.0 629.1v32.0" stroke="#000" stroke-width="1.6" fill="none"/><path d="M416.7 640.6L429.3 636.8000000000001v3.9L416.7 644.5z" fill="#000"/><path d="M416.7 652.5L429.3 648.7v3.9L416.7 656.4z" fill="#000"/><path d="M432.5 607.7v32.0M438.5 604.7v32.0" stroke="#000" stroke-width="1.6" fill="none"/><path d="M429.2 616.2L441.8 612.4000000000001v3.9L429.2 620.1z" fill="#000"/><path d="M429.2 628.1L441.8 624.3000000000001v3.9L429.2 632.0z" fill="#000"/><path d="M445.0 626.0v32.0M451.0 623.0v32.0" stroke="#000" stroke-width="1.6" fill="none"/><path d="M441.7 634.5L454.3 630.7v3.9L441.7 638.4z" fill="#000"/><path d="M441.7 646.4L454.3 642.6v3.9L441.7 650.3z" fill="#000"/><path d="M457.3 601.6v32.0M463.3 598.6v32.0" stroke="#000" stroke-width="1.6" fill="none"/><path d="M454.0 610.1L466.6 606.3000000000001v3.9L454.0 614.0z" fill="#000"/><path d="M454.0 622.0L466.6 618.2v3.9L454.0 625.9z" fill="#000"/><path d="M508.1 657L520.383 613.2L522.183 613.2L509.6 657z" fill="#000"/><circle cx="512.6555" cy="614.9000000000001" r="2.6" fill="#000"/><path d="M509.85549999999995 615.7C511.65549999999996 620.4000000000001 517.8555 619.1000000000001 521.2555 613.1L520.2555 616.5C517.8555 621.5000000000001 511.65549999999996 621.4000000000001 509.85549999999995 615.7z" fill="#000"/><circle cx="509.19275" cy="627.0500000000001" r="2.6" fill="#000"/><path d="M506.39275 627.85C508.19275 632.5500000000001 514.39275 631.2500000000001 517.79275 625.25L516.79275 628.65C514.39275 633.6500000000001 508.19275 633.5500000000001 506.39275 627.85z" fill="#000"/><circle cx="505.7300000000001" cy="639.2" r="2.6" fill="#000"/><path d="M502.93000000000006 640.0C504.7300000000001 644.7 510.93000000000006 643.4000000000001 514.33 637.4L513.33 640.8C510.93000000000006 645.8000000000001 504.7300000000001 645.7 502.93000000000006 640.0z" fill="#000"/><rect x="550" y="538.1" width="23" height="1.1" fill="#2e2e2e"/><rect x="550" y="550.1" width="23" height="1.1" fill="#2e2e2e"/><rect x="550" y="562.1" width="23" height="1.1" fill="#2e2e2e"/><rect x="550" y="574.1" width="23" height="1.1" fill="#2e2e2e"/><rect x="550" y="585.9" width="23" height="1.1" fill="#2e2e2e"/><rect x="550" y="598.1" width="23" height="1.1" fill="#2e2e2e"/><rect x="553.65" y="540" width="1.3" height="94.5" fill="#000"/><ellipse cx="562" cy="538.6" rx="8.4" ry="5.6" transform="rotate(-24 562 538.6)" fill="#000"/><path transform="translate(554.3 634.5) scale(1.0)" d="M0 0 C1 -6 9 -13 9.6 -23 C9.9 -29 8 -35 6.5 -39.5 C7.6 -33 7.6 -28 6.3 -23.5 C4.6 -17 1 -11 0 -6 Z" fill="#000"/><path transform="translate(554.3 634.5) scale(1.0)" d="M0 -9 C0.8 -14 4.2 -18 5.4 -24 C6.2 -28 6.6 -33 6.5 -39.5 C6 -34 5.2 -30 4 -26 C2.6 -22 0.8 -19 0 -15.5 Z" fill="#000"/><path transform="translate(582 645.5) scale(1.0)" d="M-5.6 -18 L-4.6 -18.8 L5.2 -7.2 C2.5 -3.5 1.5 -1 1 1.2 L5.8 10.2 L5 11 C1.5 8.6 -2.6 9.6 -2.8 12.2 C-2.9 14 -1 16 1.2 17.8 L0.4 18.6 C-4 15.5 -7 12 -6.4 9 C-5.8 6 -2 5.6 1.6 7.2 L-4.4 -0.2 C-2.5 -2.5 -0.5 -5 0.6 -7.6 Z" fill="#000"/><rect x="598.8" y="622.4" width="13.0" height="6.3" fill="#000"/><rect x="631.8" y="622.4" width="13.200000000000045" height="6.3" fill="#000"/><rect x="668" y="622.4" width="13.200000000000045" height="6.3" fill="#000"/><rect x="688" y="670.3" width="22.799999999999955" height="1.1" fill="#2e2e2e"/><rect x="688" y="682.1" width="22.799999999999955" height="1.1" fill="#2e2e2e"/><rect x="688" y="694.1" width="22.799999999999955" height="1.1" fill="#2e2e2e"/><rect x="691.35" y="700" width="1.3" height="42" fill="#000"/><ellipse cx="700" cy="700.8" rx="8.4" ry="5.6" transform="rotate(-24 700 700.8)" fill="#000"/><rect x="747.5" y="561.9" width="22.5" height="1.1" fill="#2e2e2e"/><rect x="747.5" y="574.0" width="22.5" height="1.1" fill="#2e2e2e"/><rect x="747.5" y="586.0" width="22.5" height="1.1" fill="#2e2e2e"/><rect x="747.5" y="598.2" width="22.5" height="1.1" fill="#2e2e2e"/><rect x="750.65" y="558" width="1.3" height="163" fill="#000"/><ellipse cx="760" cy="556.3" rx="8.4" ry="5.6" transform="rotate(-24 760 556.3)" fill="#000"/><path d="M691.4 726.2L752 706.8v6.200L691.400 732.600z" fill="#000"/><path d="M691.4 735.700L752 716.300v6.200L691.400 742z" fill="#000"/><rect x="793.8" y="562.0" width="22.200000000000045" height="1.1" fill="#2e2e2e"/><rect x="793.8" y="574.0" width="22.200000000000045" height="1.1" fill="#2e2e2e"/><rect x="793.8" y="586.0" width="22.200000000000045" height="1.1" fill="#2e2e2e"/><rect x="793.8" y="598.2" width="22.200000000000045" height="1.1" fill="#2e2e2e"/><rect x="797.35" y="563" width="1.3" height="71" fill="#000"/><ellipse cx="807" cy="562.5" rx="8.4" ry="5.6" transform="rotate(-24 807 562.5)" fill="#000"/><path transform="translate(798 634) scale(1.0)" d="M0 0 C1 -6 9 -13 9.6 -23 C9.9 -29 8 -35 6.5 -39.5 C7.6 -33 7.6 -28 6.3 -23.5 C4.6 -17 1 -11 0 -6 Z" fill="#000"/><path transform="translate(798 634) scale(1.0)" d="M0 -9 C0.8 -14 4.2 -18 5.4 -24 C6.2 -28 6.6 -33 6.5 -39.5 C6 -34 5.2 -30 4 -26 C2.6 -22 0.8 -19 0 -15.5 Z" fill="#000"/><rect x="847.5" y="670.3" width="22.5" height="1.1" fill="#2e2e2e"/><rect x="847.5" y="682.1" width="22.5" height="1.1" fill="#2e2e2e"/><rect x="847.5" y="694.1" width="22.5" height="1.1" fill="#2e2e2e"/><rect x="865.5500000000001" y="521" width="1.3" height="179" fill="#000"/><ellipse cx="858.6" cy="700.8" rx="8.4" ry="5.6" transform="rotate(-24 858.6 700.8)" fill="#000"/><rect x="916" y="562.0" width="23" height="1.1" fill="#2e2e2e"/><rect x="916" y="574.0" width="23" height="1.1" fill="#2e2e2e"/><rect x="916" y="586.0" width="23" height="1.1" fill="#2e2e2e"/><rect x="916" y="598.2" width="23" height="1.1" fill="#2e2e2e"/><rect x="934.35" y="528" width="1.3" height="33" fill="#000"/><ellipse cx="927.5" cy="562.5" rx="8.4" ry="5.6" transform="rotate(-24 927.5 562.5)" fill="#000"/><rect x="1021.65" y="521" width="1.3" height="142" fill="#000"/><ellipse cx="1015" cy="665" rx="8.4" ry="5.6" transform="rotate(-24 1015 665)" fill="#000"/><rect x="865.600" y="520.500" width="1157.400" height="0" fill="#000"/><rect x="865.600" y="520.500" width="157.400" height="6.800" fill="#000"/><rect x="865.600" y="529.300" width="157.400" height="6.400" fill="#000"/><rect x="1076" y="670.3" width="23" height="1.1" fill="#2e2e2e"/><rect x="1076" y="682.1" width="23" height="1.1" fill="#2e2e2e"/><rect x="1076" y="694.1" width="23" height="1.1" fill="#2e2e2e"/><rect x="1095.05" y="636" width="1.3" height="58" fill="#000"/><ellipse cx="1087.8" cy="695" rx="8.4" ry="5.6" transform="rotate(-24 1087.8 695)" fill="#000"/><path transform="translate(1095.7 635.5) scale(1.0 -1.0)" d="M0 0 C1 -6 9 -13 9.6 -23 C9.9 -29 8 -35 6.5 -39.5 C7.6 -33 7.6 -28 6.3 -23.5 C4.6 -17 1 -11 0 -6 Z" fill="#000"/><path transform="translate(1095.7 635.5) scale(1.0 -1.0)" d="M0 -9 C0.8 -14 4.2 -18 5.4 -24 C6.2 -28 6.6 -33 6.5 -39.5 C6 -34 5.2 -30 4 -26 C2.6 -22 0.8 -19 0 -15.5 Z" fill="#000"/><rect x="1144.5" y="573.8" width="23.0" height="1.1" fill="#2e2e2e"/><rect x="1144.5" y="586.0" width="23.0" height="1.1" fill="#2e2e2e"/><rect x="1144.5" y="598.2" width="23.0" height="1.1" fill="#2e2e2e"/><rect x="1148.1499999999999" y="570" width="1.3" height="122" fill="#000"/><ellipse cx="1157" cy="568.8" rx="8.4" ry="5.6" transform="rotate(-24 1157 568.8)" fill="#000"/><rect x="1241.1499999999999" y="655" width="1.3" height="39" fill="#000"/><ellipse cx="1249" cy="653" rx="8.4" ry="5.6" transform="rotate(-24 1249 653)" fill="#000"/><rect x="1312.5" y="574.0" width="23.299999999999955" height="1.1" fill="#2e2e2e"/><rect x="1312.5" y="586.0" width="23.299999999999955" height="1.1" fill="#2e2e2e"/><rect x="1312.5" y="598.2" width="23.299999999999955" height="1.1" fill="#2e2e2e"/><rect x="1316.35" y="576" width="1.3" height="119" fill="#000"/><ellipse cx="1325" cy="574.5" rx="8.4" ry="5.6" transform="rotate(-24 1325 574.5)" fill="#000"/><path d="M1148.100 678.300L1317.700 680.600v6.200L1148.100 684.500z" fill="#000"/><path d="M1148.100 687.200L1317.700 689.500v6.200L1148.100 693.400z" fill="#000"/><defs><clipPath id="sc2"><rect x="278" y="760" width="1263" height="56"/></clipPath></defs><g clip-path="url(#sc2)"><rect x="362" y="802.5" width="1094" height="1.1" fill="#2e2e2e"/><rect x="362" y="814.7" width="1094" height="1.1" fill="#2e2e2e"/><g transform="translate(371.9 815.4) scale(0.05373455131649651)" fill="#000"><rect x="0" y="-436" width="95" height="882"/><rect x="140" y="-436" width="40" height="882"/><path d="M180 0 L290 -180 C295 -110 315 -60 335 0 C315 60 295 110 290 180 Z"/><path d="M295 -130 C310 -80 350 -55 400 -58 C500 -62 578 -130 578 -240 C578 -360 500 -438 395 -438 C310 -438 235 -400 230 -335 C228 -295 255 -272 290 -272 C325 -272 352 -298 352 -332 C352 -365 330 -380 330 -395 C335 -408 370 -412 395 -412 C460 -412 482 -340 482 -240 C482 -140 450 -84 395 -84 C350 -84 325 -110 315 -150 Z"/><path d="M295 -130 C310 -80 350 -55 400 -58 C500 -62 578 -130 578 -240 C578 -360 500 -438 395 -438 C310 -438 235 -400 230 -335 C228 -295 255 -272 290 -272 C325 -272 352 -298 352 -332 C352 -365 330 -380 330 -395 C335 -408 370 -412 395 -412 C460 -412 482 -340 482 -240 C482 -140 450 -84 395 -84 C350 -84 325 -110 315 -150 Z" transform="scale(1 -1)"/></g><path d="M432.5 800.7v32.0M438.5 797.7v32.0" stroke="#000" stroke-width="1.6" fill="none"/><path d="M429.2 809.2L441.8 805.4000000000001v3.9L429.2 813.1z" fill="#000"/><path d="M429.2 821.1L441.8 817.3000000000001v3.9L429.2 825.0z" fill="#000"/><path d="M457.3 794.6v32.0M463.3 791.6v32.0" stroke="#000" stroke-width="1.6" fill="none"/><path d="M454.0 803.1L466.6 799.3000000000001v3.9L454.0 807.0z" fill="#000"/><path d="M454.0 815.0L466.6 811.2v3.9L454.0 818.9z" fill="#000"/><rect x="1445" y="802.500" width="1.200" height="20" fill="#000"/><rect x="1449.800" y="802.500" width="6.400" height="20" fill="#000"/></g></svg><div class="t" style="left:476.5px;top:611px;font-family:'Liberation Serif',serif;font-weight:bold;font-size:34.5px;color:#000;line-height:24.3px;width:18px;text-align:center">4<br>4</div><div class="t c" style="left:909px;top:343px;font-family:'Liberation Serif',serif;font-size:59.6px;color:#000">Grooving</div><div class="t" style="left:363px;top:778px;font-size:15px;color:#000;font-family:'DejaVu Sans','Liberation Sans',sans-serif">2</div><div class="abs" style="left:1541px;top:246.1px;width:12px;height:570px;background:#f7f7f7;"></div><div class="abs" style="left:1543px;top:250.8px;width:7px;height:178.5px;background:#818181;border-radius:3.5px"></div><div class="abs" style="left:281px;top:819.5px;width:1257px;height:6px;background:#808080;border-radius:3px"></div><div class="abs" style="left:1553px;top:248.700px;width:24.500px;height:649.300px;background:#e9e9e9"></div><div class="abs" style="left:1577.500px;top:248.700px;width:178.500px;height:649.300px;background:#efefef"></div><svg style="left:0;top:0" width="1920" height="1080" viewBox="0 0 1920 1080"><path d="M1577.500 249V284L1554.500 295.500V412.500L1577.500 425V898" fill="none" stroke="#a9a9a9" stroke-width="1"/><path d="M1577 284.600L1555 295.800V412.200L1577 424.400Z" fill="#f4f4f4"/><path d="M1563 295.500l5 4.500-5 4.500M1563 405.500l5 4.500-5 4.500" fill="none" stroke="#b5b5b5" stroke-width="1"/></svg><div class="t" style="left:1567.500px;top:354.500px;font-size:10.500px;color:#111;transform:translate(-50%,-50%) rotate(-90deg)">Hide Toolbox</div><div class="abs" style="left:1577.500px;top:270px;width:170px;height:628px;overflow:hidden"><div class="abs" style="left:-1577.500px;top:-270px;width:1920px;height:1080px"><div class="btn" style="left:1584.5px;top:258px;width:47.5px;height:37px;border-radius:5px"></div><div class="btn" style="left:1637px;top:258px;width:47.5px;height:37px;border-radius:5px"></div><div class="btn" style="left:1689.2px;top:258px;width:47.5px;height:37px;border-radius:5px"></div><div class="btn" style="left:1584.5px;top:301px;width:47.5px;height:37px;border-radius:5px"></div><div class="btn" style="left:1637px;top:301px;width:47.5px;height:37px;border-radius:5px"></div><div class="btn" style="left:1689.2px;top:301px;width:47.5px;height:37px;border-radius:5px"></div><div class="btn" style="left:1584.5px;top:344px;width:47.5px;height:37px;border-radius:5px"></div><div class="btn" style="left:1637px;top:344px;width:47.5px;height:37px;border-radius:5px"></div><div class="btn" style="left:1689.2px;top:344px;width:47.5px;height:37px;border-radius:5px"></div><div class="btn" style="left:1584.5px;top:387px;width:47.5px;height:37px;border-radius:5px"></div><div class="btn" style="left:1637px;top:387px;width:47.5px;height:37px;border-radius:5px"></div><div class="btn" style="left:1689.2px;top:387px;width:47.5px;height:37px;border-radius:5px"></div><div class="abs" style="left:1577.500px;top:432px;width:166.500px;height:27.500px;background:linear-gradient(#7c7c7c,#6a6a6a 60%,#666)"></div><div class="t" style="left:1592px;top:440px;font-size:11px;font-weight:bold;color:#fff;letter-spacing:-.2px">Time Signature</div><svg style="left:0;top:0" width="1920" height="1080" viewBox="0 0 1920 1080"><path d="M1581.500 442h6.500l-3.250 6z" fill="#e8e8e8"/><path d="M1726.500 441.5v7.500m-2.500-2.500l2.500 2.500 2.500-2.500M1736 449v-7.500m-2.500 2.500l2.500-2.500 2.500 2.500" fill="none" stroke="#f0f0f0" stroke-width="1.600"/></svg><div class="btn" style="left:1584.5px;top:467.5px;width:47.5px;height:37px;border-radius:5px"></div><div class="btn" style="left:1637px;top:467.5px;width:47.5px;height:37px;border-radius:5px"></div><div class="btn" style="left:1689.2px;top:467.5px;width:47.5px;height:37px;border-radius:5px"></div><div class="btn" style="left:1584.5px;top:510.5px;width:47.5px;height:37px;border-radius:5px"></div><div class="btn" style="left:1637px;top:510.5px;width:47.5px;height:37px;border-radius:5px"></div><div class="btn" style="left:1689.2px;top:510.5px;width:47.5px;height:37px;border-radius:5px"></div><div class="btn" style="left:1584.5px;top:553.5px;width:47.5px;height:37px;border-radius:5px"></div><div class="btn" style="left:1637px;top:553.5px;width:47.5px;height:37px;border-radius:5px"></div><div class="abs" style="left:1577.500px;top:598.2px;width:166.500px;height:27.500px;background:linear-gradient(#7c7c7c,#6a6a6a 60%,#666)"></div><div class="t" style="left:1592px;top:606.2px;font-size:11px;font-weight:bold;color:#fff;letter-spacing:-.2px">Octave Lines</div><svg style="left:0;top:0" width="1920" height="1080" viewBox="0 0 1920 1080"><path d="M1581.500 608.2h6.500l-3.250 6z" fill="#e8e8e8"/><path d="M1726.500 607.7v7.500m-2.500-2.500l2.500 2.500 2.500-2.500M1736 615.2v-7.500m-2.500 2.500l2.500-2.500 2.500 2.500" fill="none" stroke="#f0f0f0" stroke-width="1.600"/></svg><div class="btn" style="left:1584.5px;top:634px;width:73.5px;height:37px;border-radius:5px"></div><div class="btn" style="left:1663px;top:634px;width:73.5px;height:37px;border-radius:5px"></div><div class="btn" style="left:1584.5px;top:677px;width:73.5px;height:37px;border-radius:5px"></div><div class="btn" style="left:1663px;top:677px;width:73.5px;height:37px;border-radius:5px"></div><div class="abs" style="left:1577.500px;top:722px;width:166.500px;height:27.500px;background:linear-gradient(#7c7c7c,#6a6a6a 60%,#666)"></div><div class="t" style="left:1592px;top:730px;font-size:11px;font-weight:bold;color:#fff;letter-spacing:-.2px">Pedal Lines</div><svg style="left:0;top:0" width="1920" height="1080" viewBox="0 0 1920 1080"><path d="M1581.500 732h6.500l-3.250 6z" fill="#e8e8e8"/><path d="M1726.500 731.5v7.500m-2.500-2.500l2.500 2.500 2.500-2.500M1736 739v-7.500m-2.500 2.500l2.500-2.500 2.500 2.500" fill="none" stroke="#f0f0f0" stroke-width="1.600"/></svg><div class="btn" style="left:1584.5px;top:757.5px;width:73.5px;height:37px;border-radius:5px"></div><div class="btn" style="left:1663px;top:757.5px;width:73.5px;height:37px;border-radius:5px"></div><div class="btn" style="left:1584.5px;top:800.5px;width:73.5px;height:37px;border-radius:5px"></div><div class="btn" style="left:1663px;top:800.5px;width:73.5px;height:37px;border-radius:5px"></div><div class="btn" style="left:1584.5px;top:843.5px;width:73.5px;height:37px;border-radius:5px"></div><div class="abs" style="left:1577.500px;top:888px;width:166.500px;height:12px;background:#757575"></div><svg style="left:0;top:0" width="1920" height="1080" viewBox="0 0 1920 1080"><rect x="1595.85" y="270.01" width="24.8" height="1.1" fill="#333"/><rect x="1595.85" y="274.13" width="24.8" height="1.1" fill="#333"/><rect x="1595.85" y="278.25" width="24.8" height="1.1" fill="#333"/><rect x="1595.85" y="282.37" width="24.8" height="1.1" fill="#333"/><rect x="1595.85" y="286.49" width="24.8" height="1.1" fill="#333"/><rect x="1595.85" y="311.71" width="24.8" height="1.1" fill="#333"/><rect x="1595.85" y="315.83" width="24.8" height="1.1" fill="#333"/><rect x="1595.85" y="319.95" width="24.8" height="1.1" fill="#333"/><rect x="1595.85" y="324.07" width="24.8" height="1.1" fill="#333"/><rect x="1595.85" y="328.19" width="24.8" height="1.1" fill="#333"/><rect x="1595.85" y="354.71" width="24.8" height="1.1" fill="#333"/><rect x="1595.85" y="358.83" width="24.8" height="1.1" fill="#333"/><rect x="1595.85" y="362.95" width="24.8" height="1.1" fill="#333"/><rect x="1595.85" y="367.07" width="24.8" height="1.1" fill="#333"/><rect x="1595.85" y="371.19" width="24.8" height="1.1" fill="#333"/><rect x="1595.85" y="397.71" width="24.8" height="1.1" fill="#333"/><rect x="1595.85" y="401.83" width="24.8" height="1.1" fill="#333"/><rect x="1595.85" y="405.95" width="24.8" height="1.1" fill="#333"/><rect x="1595.85" y="410.07" width="24.8" height="1.1" fill="#333"/><rect x="1595.85" y="414.19" width="24.8" height="1.1" fill="#333"/><rect x="1595.85" y="477.21" width="24.8" height="1.1" fill="#333"/><rect x="1595.85" y="481.33" width="24.8" height="1.1" fill="#333"/><rect x="1595.85" y="485.45" width="24.8" height="1.1" fill="#333"/><rect x="1595.85" y="489.57" width="24.8" height="1.1" fill="#333"/><rect x="1595.85" y="493.69" width="24.8" height="1.1" fill="#333"/><rect x="1595.85" y="520.21" width="24.8" height="1.1" fill="#333"/><rect x="1595.85" y="524.33" width="24.8" height="1.1" fill="#333"/><rect x="1595.85" y="528.45" width="24.8" height="1.1" fill="#333"/><rect x="1595.85" y="532.57" width="24.8" height="1.1" fill="#333"/><rect x="1595.85" y="536.69" width="24.8" height="1.1" fill="#333"/><rect x="1595.85" y="563.21" width="24.8" height="1.1" fill="#333"/><rect x="1595.85" y="567.33" width="24.8" height="1.1" fill="#333"/><rect x="1595.85" y="571.45" width="24.8" height="1.1" fill="#333"/><rect x="1595.85" y="575.57" width="24.8" height="1.1" fill="#333"/><rect x="1595.85" y="579.69" width="24.8" height="1.1" fill="#333"/><rect x="1648.35" y="270.01" width="24.8" height="1.1" fill="#333"/><rect x="1648.35" y="274.13" width="24.8" height="1.1" fill="#333"/><rect x="1648.35" y="278.25" width="24.8" height="1.1" fill="#333"/><rect x="1648.35" y="282.37" width="24.8" height="1.1" fill="#333"/><rect x="1648.35" y="286.49" width="24.8" height="1.1" fill="#333"/><rect x="1648.35" y="311.71" width="24.8" height="1.1" fill="#333"/><rect x="1648.35" y="315.83" width="24.8" height="1.1" fill="#333"/><rect x="1648.35" y="319.95" width="24.8" height="1.1" fill="#333"/><rect x="1648.35" y="324.07" width="24.8" height="1.1" fill="#333"/><rect x="1648.35" y="328.19" width="24.8" height="1.1" fill="#333"/><rect x="1648.35" y="354.71" width="24.8" height="1.1" fill="#333"/><rect x="1648.35" y="358.83" width="24.8" height="1.1" fill="#333"/><rect x="1648.35" y="362.95" width="24.8" height="1.1" fill="#333"/><rect x="1648.35" y="367.07" width="24.8" height="1.1" fill="#333"/><rect x="1648.35" y="371.19" width="24.8" height="1.1" fill="#333"/><rect x="1648.35" y="397.71" width="24.8" height="1.1" fill="#333"/><rect x="1648.35" y="401.83" width="24.8" height="1.1" fill="#333"/><rect x="1648.35" y="405.95" width="24.8" height="1.1" fill="#333"/><rect x="1648.35" y="410.07" width="24.8" height="1.1" fill="#333"/><rect x="1648.35" y="414.19" width="24.8" height="1.1" fill="#333"/><rect x="1648.35" y="477.21" width="24.8" height="1.1" fill="#333"/><rect x="1648.35" y="481.33" width="24.8" height="1.1" fill="#333"/><rect x="1648.35" y="485.45" width="24.8" height="1.1" fill="#333"/><rect x="1648.35" y="489.57" width="24.8" height="1.1" fill="#333"/><rect x="1648.35" y="493.69" width="24.8" height="1.1" fill="#333"/><rect x="1648.35" y="520.21" width="24.8" height="1.1" fill="#333"/><rect x="1648.35" y="524.33" width="24.8" height="1.1" fill="#333"/><rect x="1648.35" y="528.45" width="24.8" height="1.1" fill="#333"/><rect x="1648.35" y="532.57" width="24.8" height="1.1" fill="#333"/><rect x="1648.35" y="536.69" width="24.8" height="1.1" fill="#333"/><rect x="1648.35" y="562.81" width="24.8" height="1.9" fill="#111"/><rect x="1648.35" y="566.93" width="24.8" height="1.9" fill="#111"/><rect x="1648.35" y="571.05" width="24.8" height="1.9" fill="#111"/><rect x="1648.35" y="575.17" width="24.8" height="1.9" fill="#111"/><rect x="1648.35" y="579.29" width="24.8" height="1.9" fill="#111"/><rect x="1700.55" y="270.01" width="24.8" height="1.1" fill="#333"/><rect x="1700.55" y="274.13" width="24.8" height="1.1" fill="#333"/><rect x="1700.55" y="278.25" width="24.8" height="1.1" fill="#333"/><rect x="1700.55" y="282.37" width="24.8" height="1.1" fill="#333"/><rect x="1700.55" y="286.49" width="24.8" height="1.1" fill="#333"/><rect x="1700.55" y="311.71" width="24.8" height="1.1" fill="#333"/><rect x="1700.55" y="315.83" width="24.8" height="1.1" fill="#333"/><rect x="1700.55" y="319.95" width="24.8" height="1.1" fill="#333"/><rect x="1700.55" y="324.07" width="24.8" height="1.1" fill="#333"/><rect x="1700.55" y="328.19" width="24.8" height="1.1" fill="#333"/><rect x="1700.55" y="354.71" width="24.8" height="1.1" fill="#333"/><rect x="1700.55" y="358.83" width="24.8" height="1.1" fill="#333"/><rect x="1700.55" y="362.95" width="24.8" height="1.1" fill="#333"/><rect x="1700.55" y="367.07" width="24.8" height="1.1" fill="#333"/><rect x="1700.55" y="371.19" width="24.8" height="1.1" fill="#333"/><rect x="1700.55" y="397.71" width="24.8" height="1.1" fill="#333"/><rect x="1700.55" y="401.83" width="24.8" height="1.1" fill="#333"/><rect x="1700.55" y="405.95" width="24.8" height="1.1" fill="#333"/><rect x="1700.55" y="410.07" width="24.8" height="1.1" fill="#333"/><rect x="1700.55" y="414.19" width="24.8" height="1.1" fill="#333"/><rect x="1700.55" y="477.21" width="24.8" height="1.1" fill="#333"/><rect x="1700.55" y="481.33" width="24.8" height="1.1" fill="#333"/><rect x="1700.55" y="485.45" width="24.8" height="1.1" fill="#333"/><rect x="1700.55" y="489.57" width="24.8" height="1.1" fill="#333"/><rect x="1700.55" y="493.69" width="24.8" height="1.1" fill="#333"/><rect x="1700.55" y="520.21" width="24.8" height="1.1" fill="#333"/><rect x="1700.55" y="524.33" width="24.8" height="1.1" fill="#333"/><rect x="1700.55" y="528.45" width="24.8" height="1.1" fill="#333"/><rect x="1700.55" y="532.57" width="24.8" height="1.1" fill="#333"/><rect x="1700.55" y="536.69" width="24.8" height="1.1" fill="#333"/><path d="M1597.35 266.96v7.6M1599.9499999999998 266.36v7.6" stroke="#000" stroke-width="1"/><path d="M1595.6499999999999 269.96l6-1.8v2.2l-6 1.8zM1595.6499999999999 272.96l6-1.8v2.2l-6 1.8z" fill="#000"/><ellipse cx="1598.6499999999999" cy="270.56" rx="2.2" ry="2.4" fill="#000" opacity=".55"/><path d="M1649.85 266.96v7.6M1652.4499999999998 266.36v7.6" stroke="#000" stroke-width="1"/><path d="M1648.1499999999999 269.96l6-1.8v2.2l-6 1.8zM1648.1499999999999 272.96l6-1.8v2.2l-6 1.8z" fill="#000"/><ellipse cx="1651.1499999999999" cy="270.56" rx="2.2" ry="2.4" fill="#000" opacity=".55"/><path d="M1653.35 273.14v7.6M1655.9499999999998 272.54v7.6" stroke="#000" stroke-width="1"/><path d="M1651.6499999999999 276.14l6-1.8v2.2l-6 1.8zM1651.6499999999999 279.14l6-1.8v2.2l-6 1.8z" fill="#000"/><ellipse cx="1654.6499999999999" cy="276.74" rx="2.2" ry="2.4" fill="#000" opacity=".55"/><path d="M1702.05 266.96v7.6M1704.6499999999999 266.36v7.6" stroke="#000" stroke-width="1"/><path d="M1700.35 269.96l6-1.8v2.2l-6 1.8zM1700.35 272.96l6-1.8v2.2l-6 1.8z" fill="#000"/><ellipse cx="1703.35" cy="270.56" rx="2.2" ry="2.4" fill="#000" opacity=".55"/><path d="M1705.55 273.14v7.6M1708.1499999999999 272.54v7.6" stroke="#000" stroke-width="1"/><path d="M1703.85 276.14l6-1.8v2.2l-6 1.8zM1703.85 279.14l6-1.8v2.2l-6 1.8z" fill="#000"/><ellipse cx="1706.85" cy="276.74" rx="2.2" ry="2.4" fill="#000" opacity=".55"/><path d="M1709.05 264.9v7.6M1711.6499999999999 264.3v7.6" stroke="#000" stroke-width="1"/><path d="M1707.35 267.9l6-1.8v2.2l-6 1.8zM1707.35 270.9l6-1.8v2.2l-6 1.8z" fill="#000"/><ellipse cx="1710.35" cy="268.5" rx="2.2" ry="2.4" fill="#000" opacity=".55"/><path d="M1597.35 308.65999999999997v7.6M1599.9499999999998 308.06v7.6" stroke="#000" stroke-width="1"/><path d="M1595.6499999999999 311.65999999999997l6-1.8v2.2l-6 1.8zM1595.6499999999999 314.65999999999997l6-1.8v2.2l-6 1.8z" fill="#000"/><ellipse cx="1598.6499999999999" cy="312.26" rx="2.2" ry="2.4" fill="#000" opacity=".55"/><path d="M1600.85 314.84v7.6M1603.4499999999998 314.24v7.6" stroke="#000" stroke-width="1"/><path d="M1599.1499999999999 317.84l6-1.8v2.2l-6 1.8zM1599.1499999999999 320.84l6-1.8v2.2l-6 1.8z" fill="#000"/><ellipse cx="1602.1499999999999" cy="318.44" rx="2.2" ry="2.4" fill="#000" opacity=".55"/><path d="M1604.35 306.59999999999997v7.6M1606.9499999999998 306.0v7.6" stroke="#000" stroke-width="1"/><path d="M1602.6499999999999 309.59999999999997l6-1.8v2.2l-6 1.8zM1602.6499999999999 312.59999999999997l6-1.8v2.2l-6 1.8z" fill="#000"/><ellipse cx="1605.6499999999999" cy="310.2" rx="2.2" ry="2.4" fill="#000" opacity=".55"/><path d="M1607.85 312.78v7.6M1610.4499999999998 312.18v7.6" stroke="#000" stroke-width="1"/><path d="M1606.1499999999999 315.78l6-1.8v2.2l-6 1.8zM1606.1499999999999 318.78l6-1.8v2.2l-6 1.8z" fill="#000"/><ellipse cx="1609.1499999999999" cy="316.38" rx="2.2" ry="2.4" fill="#000" opacity=".55"/><path d="M1611.35 318.96v7.6M1613.9499999999998 318.36v7.6" stroke="#000" stroke-width="1"/><path d="M1609.6499999999999 321.96l6-1.8v2.2l-6 1.8zM1609.6499999999999 324.96l6-1.8v2.2l-6 1.8z" fill="#000"/><ellipse cx="1612.6499999999999" cy="322.56" rx="2.2" ry="2.4" fill="#000" opacity=".55"/><path d="M1614.85 310.71999999999997v7.6M1617.4499999999998 310.12v7.6" stroke="#000" stroke-width="1"/><path d="M1613.1499999999999 313.71999999999997l6-1.8v2.2l-6 1.8zM1613.1499999999999 316.71999999999997l6-1.8v2.2l-6 1.8z" fill="#000"/><ellipse cx="1616.1499999999999" cy="314.32" rx="2.2" ry="2.4" fill="#000" opacity=".55"/><path d="M1649.85 308.65999999999997v7.6M1652.4499999999998 308.06v7.6" stroke="#000" stroke-width="1"/><path d="M1648.1499999999999 311.65999999999997l6-1.8v2.2l-6 1.8zM1648.1499999999999 314.65999999999997l6-1.8v2.2l-6 1.8z" fill="#000"/><ellipse cx="1651.1499999999999" cy="312.26" rx="2.2" ry="2.4" fill="#000" opacity=".55"/><path d="M1653.35 314.84v7.6M1655.9499999999998 314.24v7.6" stroke="#000" stroke-width="1"/><path d="M1651.6499999999999 317.84l6-1.8v2.2l-6 1.8zM1651.6499999999999 320.84l6-1.8v2.2l-6 1.8z" fill="#000"/><ellipse cx="1654.6499999999999" cy="318.44" rx="2.2" ry="2.4" fill="#000" opacity=".55"/><path d="M1656.85 306.59999999999997v7.6M1659.4499999999998 306.0v7.6" stroke="#000" stroke-width="1"/><path d="M1655.1499999999999 309.59999999999997l6-1.8v2.2l-6 1.8zM1655.1499999999999 312.59999999999997l6-1.8v2.2l-6 1.8z" fill="#000"/><ellipse cx="1658.1499999999999" cy="310.2" rx="2.2" ry="2.4" fill="#000" opacity=".55"/><path d="M1660.35 312.78v7.6M1662.9499999999998 312.18v7.6" stroke="#000" stroke-width="1"/><path d="M1658.6499999999999 315.78l6-1.8v2.2l-6 1.8zM1658.6499999999999 318.78l6-1.8v2.2l-6 1.8z" fill="#000"/><ellipse cx="1661.6499999999999" cy="316.38" rx="2.2" ry="2.4" fill="#000" opacity=".55"/><path d="M1663.85 318.96v7.6M1666.4499999999998 318.36v7.6" stroke="#000" stroke-width="1"/><path d="M1662.1499999999999 321.96l6-1.8v2.2l-6 1.8zM1662.1499999999999 324.96l6-1.8v2.2l-6 1.8z" fill="#000"/><ellipse cx="1665.1499999999999" cy="322.56" rx="2.2" ry="2.4" fill="#000" opacity=".55"/><path d="M1667.35 310.71999999999997v7.6M1669.9499999999998 310.12v7.6" stroke="#000" stroke-width="1"/><path d="M1665.6499999999999 313.71999999999997l6-1.8v2.2l-6 1.8zM1665.6499999999999 316.71999999999997l6-1.8v2.2l-6 1.8z" fill="#000"/><ellipse cx="1668.6499999999999" cy="314.32" rx="2.2" ry="2.4" fill="#000" opacity=".55"/><path d="M1670.85 316.9v7.6M1673.4499999999998 316.3v7.6" stroke="#000" stroke-width="1"/><path d="M1669.1499999999999 319.9l6-1.8v2.2l-6 1.8zM1669.1499999999999 322.9l6-1.8v2.2l-6 1.8z" fill="#000"/><ellipse cx="1672.1499999999999" cy="320.5" rx="2.2" ry="2.4" fill="#000" opacity=".55"/><path d="M1704.1499999999999 313.516V320.482" stroke="#000" stroke-width=".9"/><path d="M1704.1499999999999 317.89000000000004C1705.1219999999998 316.81 1706.742 317.026 1706.5259999999998 318.43C1706.31 319.51 1705.1219999999998 319.942 1704.1499999999999 320.482" fill="none" stroke="#000" stroke-width="1.3"/><path d="M1599.4499999999998 353.096V364.706" stroke="#000" stroke-width=".9"/><path d="M1599.4499999999998 360.386C1601.0699999999997 358.586 1603.7699999999998 358.946 1603.4099999999999 361.286C1603.0499999999997 363.086 1601.0699999999997 363.80600000000004 1599.4499999999998 364.706" fill="none" stroke="#000" stroke-width="1.3"/><path d="M1651.9499999999998 353.096V364.706" stroke="#000" stroke-width=".9"/><path d="M1651.9499999999998 360.386C1653.5699999999997 358.586 1656.2699999999998 358.946 1655.9099999999999 361.286C1655.5499999999997 363.086 1653.5699999999997 363.80600000000004 1651.9499999999998 364.706" fill="none" stroke="#000" stroke-width="1.3"/><path d="M1655.4499999999998 358.03999999999996V369.65" stroke="#000" stroke-width=".9"/><path d="M1655.4499999999998 365.33C1657.0699999999997 363.53 1659.7699999999998 363.89 1659.4099999999999 366.22999999999996C1659.0499999999997 368.03 1657.0699999999997 368.75 1655.4499999999998 369.65" fill="none" stroke="#000" stroke-width="1.3"/><path d="M1704.1499999999999 353.096V364.706" stroke="#000" stroke-width=".9"/><path d="M1704.1499999999999 360.386C1705.7699999999998 358.586 1708.4699999999998 358.946 1708.11 361.286C1707.7499999999998 363.086 1705.7699999999998 363.80600000000004 1704.1499999999999 364.706" fill="none" stroke="#000" stroke-width="1.3"/><path d="M1707.6499999999999 358.03999999999996V369.65" stroke="#000" stroke-width=".9"/><path d="M1707.6499999999999 365.33C1709.2699999999998 363.53 1711.9699999999998 363.89 1711.61 366.22999999999996C1711.2499999999998 368.03 1709.2699999999998 368.75 1707.6499999999999 369.65" fill="none" stroke="#000" stroke-width="1.3"/><path d="M1711.1499999999999 351.654V363.264" stroke="#000" stroke-width=".9"/><path d="M1711.1499999999999 358.944C1712.7699999999998 357.144 1715.4699999999998 357.504 1715.11 359.844C1714.7499999999998 361.644 1712.7699999999998 362.36400000000003 1711.1499999999999 363.264" fill="none" stroke="#000" stroke-width="1.3"/><path d="M1599.4499999999998 396.096V407.706" stroke="#000" stroke-width=".9"/><path d="M1599.4499999999998 403.386C1601.0699999999997 401.586 1603.7699999999998 401.946 1603.4099999999999 404.286C1603.0499999999997 406.086 1601.0699999999997 406.80600000000004 1599.4499999999998 407.706" fill="none" stroke="#000" stroke-width="1.3"/><path d="M1602.9499999999998 401.03999999999996V412.65" stroke="#000" stroke-width=".9"/><path d="M1602.9499999999998 408.33C1604.5699999999997 406.53 1607.2699999999998 406.89 1606.9099999999999 409.22999999999996C1606.5499999999997 411.03 1604.5699999999997 411.75 1602.9499999999998 412.65" fill="none" stroke="#000" stroke-width="1.3"/><path d="M1606.4499999999998 394.654V406.264" stroke="#000" stroke-width=".9"/><path d="M1606.4499999999998 401.944C1608.0699999999997 400.144 1610.7699999999998 400.504 1610.4099999999999 402.844C1610.0499999999997 404.644 1608.0699999999997 405.36400000000003 1606.4499999999998 406.264" fill="none" stroke="#000" stroke-width="1.3"/><path d="M1609.9499999999998 399.804V411.414" stroke="#000" stroke-width=".9"/><path d="M1609.9499999999998 407.094C1611.5699999999997 405.294 1614.2699999999998 405.654 1613.9099999999999 407.99399999999997C1613.5499999999997 409.794 1611.5699999999997 410.514 1609.9499999999998 411.414" fill="none" stroke="#000" stroke-width="1.3"/><path d="M1651.9499999999998 396.096V407.706" stroke="#000" stroke-width=".9"/><path d="M1651.9499999999998 403.386C1653.5699999999997 401.586 1656.2699999999998 401.946 1655.9099999999999 404.286C1655.5499999999997 406.086 1653.5699999999997 406.80600000000004 1651.9499999999998 407.706" fill="none" stroke="#000" stroke-width="1.3"/><path d="M1655.4499999999998 401.03999999999996V412.65" stroke="#000" stroke-width=".9"/><path d="M1655.4499999999998 408.33C1657.0699999999997 406.53 1659.7699999999998 406.89 1659.4099999999999 409.22999999999996C1659.0499999999997 411.03 1657.0699999999997 411.75 1655.4499999999998 412.65" fill="none" stroke="#000" stroke-width="1.3"/><path d="M1658.9499999999998 394.654V406.264" stroke="#000" stroke-width=".9"/><path d="M1658.9499999999998 401.944C1660.5699999999997 400.144 1663.2699999999998 400.504 1662.9099999999999 402.844C1662.5499999999997 404.644 1660.5699999999997 405.36400000000003 1658.9499999999998 406.264" fill="none" stroke="#000" stroke-width="1.3"/><path d="M1662.4499999999998 399.804V411.414" stroke="#000" stroke-width=".9"/><path d="M1662.4499999999998 407.094C1664.0699999999997 405.294 1666.7699999999998 405.654 1666.4099999999999 407.99399999999997C1666.0499999999997 409.794 1664.0699999999997 410.514 1662.4499999999998 411.414" fill="none" stroke="#000" stroke-width="1.3"/><path d="M1665.9499999999998 397.53799999999995V409.14799999999997" stroke="#000" stroke-width=".9"/><path d="M1665.9499999999998 404.828C1667.5699999999997 403.02799999999996 1670.2699999999998 403.388 1669.9099999999999 405.72799999999995C1669.5499999999997 407.52799999999996 1667.5699999999997 408.248 1665.9499999999998 409.14799999999997" fill="none" stroke="#000" stroke-width="1.3"/><path d="M1704.1499999999999 396.096V407.706" stroke="#000" stroke-width=".9"/><path d="M1704.1499999999999 403.386C1705.7699999999998 401.586 1708.4699999999998 401.946 1708.11 404.286C1707.7499999999998 406.086 1705.7699999999998 406.80600000000004 1704.1499999999999 407.706" fill="none" stroke="#000" stroke-width="1.3"/><path d="M1707.6499999999999 401.03999999999996V412.65" stroke="#000" stroke-width=".9"/><path d="M1707.6499999999999 408.33C1709.2699999999998 406.53 1711.9699999999998 406.89 1711.61 409.22999999999996C1711.2499999999998 411.03 1709.2699999999998 411.75 1707.6499999999999 412.65" fill="none" stroke="#000" stroke-width="1.3"/><path d="M1711.1499999999999 394.654V406.264" stroke="#000" stroke-width=".9"/><path d="M1711.1499999999999 401.944C1712.7699999999998 400.144 1715.4699999999998 400.504 1715.11 402.844C1714.7499999999998 404.644 1712.7699999999998 405.36400000000003 1711.1499999999999 406.264" fill="none" stroke="#000" stroke-width="1.3"/><path d="M1714.6499999999999 399.804V411.414" stroke="#000" stroke-width=".9"/><path d="M1714.6499999999999 407.094C1716.2699999999998 405.294 1718.9699999999998 405.654 1718.61 407.99399999999997C1718.2499999999998 409.794 1716.2699999999998 410.514 1714.6499999999999 411.414" fill="none" stroke="#000" stroke-width="1.3"/><path d="M1718.1499999999999 397.53799999999995V409.14799999999997" stroke="#000" stroke-width=".9"/><path d="M1718.1499999999999 404.828C1719.7699999999998 403.02799999999996 1722.4699999999998 403.388 1722.11 405.72799999999995C1721.7499999999998 407.52799999999996 1719.7699999999998 408.248 1718.1499999999999 409.14799999999997" fill="none" stroke="#000" stroke-width="1.3"/><path d="M1721.6499999999999 402.48199999999997V414.092" stroke="#000" stroke-width=".9"/><path d="M1721.6499999999999 409.772C1723.2699999999998 407.972 1725.9699999999998 408.332 1725.61 410.67199999999997C1725.2499999999998 412.472 1723.2699999999998 413.192 1721.6499999999999 414.092" fill="none" stroke="#000" stroke-width="1.3"/><path d="M1657.25 565.5l7 13M1664.25 565.5l-7 13" stroke="#222" stroke-width="1"/><path d="M1614 645.500h33" stroke="#222" stroke-width="1" stroke-dasharray="1.500 1"/><path d="M1647.500 645v13" stroke="#111" stroke-width="1.300"/><path d="M1682.500 658h43" stroke="#222" stroke-width="1" stroke-dasharray="1.500 1"/><path d="M1726.500 645.500v13" stroke="#111" stroke-width="1.300"/><path d="M1620 688.500h27" stroke="#222" stroke-width="1" stroke-dasharray="1.500 1"/><path d="M1647.500 688v13" stroke="#111" stroke-width="1.300"/><path d="M1686.500 701h39" stroke="#222" stroke-width="1" stroke-dasharray="1.500 1"/><path d="M1726.500 688.500v13" stroke="#111" stroke-width="1.300"/><path d="M1622 780.500h13v-3.500" fill="none" stroke="#333" stroke-width="1"/><path d="M1616 824h29.500l1.500-4.500" fill="none" stroke="#111" stroke-width="1.200"/><path d="M1675 816l2 5h46l2-5" fill="none" stroke="#111" stroke-width="1.300"/><path d="M1609 859.500l1 4.500h24.500l.8-4.500" fill="none" stroke="#222" stroke-width="1.100"/></svg><div class="t c" style="left:1608.25px;top:477.2px;font-family:'Liberation Serif',serif;font-weight:bold;font-size:12px;line-height:8.4px;text-align:center;color:#000">4<br>4</div><div class="t c" style="left:1660.75px;top:477.2px;font-family:'Liberation Serif',serif;font-weight:bold;font-size:12px;line-height:8.4px;text-align:center;color:#000">3<br>4</div><div class="t c" style="left:1712.95px;top:477.2px;font-family:'Liberation Serif',serif;font-weight:bold;font-size:12px;line-height:8.4px;text-align:center;color:#000">2<br>4</div><div class="t c" style="left:1608.25px;top:520.2px;font-family:'Liberation Serif',serif;font-weight:bold;font-size:12px;line-height:8.4px;text-align:center;color:#000">2<br>2</div><div class="t c" style="left:1660.75px;top:520.2px;font-family:'Liberation Serif',serif;font-weight:bold;font-size:12px;line-height:8.4px;text-align:center;color:#000">6<br>8</div><div class="t c" style="left:1712.95px;top:520px;font-family:'Liberation Serif',serif;font-weight:bold;font-size:15px;color:#000">c</div><div class="t c" style="left:1607.25px;top:563px;font-family:'Liberation Serif',serif;font-weight:bold;font-size:15px;color:#000">c</div><div class="abs" style="left:1606.75px;top:565.5px;width:1px;height:13px;background:#000"></div><div class="t" style="left:1594px;top:643.500px;font-family:'Liberation Serif',serif;font-size:17px;color:#222">8</div><div class="t" style="left:1603.5px;top:644px;font-family:'Liberation Serif',serif;font-style:italic;font-size:10px;color:#222">va</div><div class="t" style="left:1672.500px;top:643.500px;font-family:'Liberation Serif',serif;font-size:17px;color:#222">8</div><div class="t" style="left:1682px;top:643.5px;font-family:'Liberation Serif',serif;font-style:italic;font-size:10px;color:#222">vb</div><div class="t" style="left:1593.500px;top:686.500px;font-family:'Liberation Serif',serif;font-size:17px;color:#222;letter-spacing:-1px">15</div><div class="t" style="left:1609.5px;top:687px;font-family:'Liberation Serif',serif;font-style:italic;font-size:9px;color:#222">ma</div><div class="t" style="left:1672px;top:686.500px;font-family:'Liberation Serif',serif;font-size:17px;color:#222;letter-spacing:-1px">15</div><div class="t" style="left:1688px;top:686.5px;font-family:'Liberation Serif',serif;font-style:italic;font-size:9px;color:#222">mb</div><div class="t" style="left:1607px;top:769px;font-family:'Liberation Serif',serif;font-style:italic;font-weight:bold;font-size:11px;color:#222">Ped</div><div class="t" style="left:1686px;top:769px;font-family:'Liberation Serif',serif;font-style:italic;font-weight:bold;font-size:11px;color:#222">Ped. *</div><div class="t" style="left:1594.500px;top:810px;font-family:'Liberation Serif',serif;font-style:italic;font-weight:bold;font-size:15px;color:#111">Ped</div></div></div><div class="abs" style="left:1580.500px;top:252.500px;width:170.500px;height:16.500px;background:#fff;border-radius:4px;box-shadow:0 0 0 .5px rgba(0,0,0,.12),0 .5px 1px rgba(0,0,0,.2)"></div><div class="abs" style="left:1737px;top:253.500px;width:13.500px;height:14.500px;background:linear-gradient(#2f8bff,#0869f0);border-radius:3.500px"></div><svg style="left:0;top:0" width="1920" height="1080" viewBox="0 0 1920 1080"><path d="M1740.800 259.500l3 3 3-3" fill="none" stroke="#fff" stroke-width="1.500" stroke-linecap="round" stroke-linejoin="round"/></svg><div class="t" style="left:1587px;top:255px;font-size:11px;color:#222">Pedal Lines</div><div class="abs" style="left:1744.500px;top:270px;width:12px;height:628px;background:#fafafa"></div><div class="abs" style="left:1747.300px;top:437.500px;width:6.200px;height:168px;background:#c1c1c1;border-radius:3.100px"></div><svg style="left:0;top:0" width="1920" height="1080" viewBox="0 0 1920 1080"><path d="M278 853.5H833.5L844 829.5H987L997.5 853.5H1553" fill="none" stroke="#bcbcbc" stroke-width="1"/><path d="M834 853.5L844.3 830H986.7L997 853.5Z" fill="#f3f3f3"/><path d="M849 838.5l5 5 5-5" fill="none" stroke="#aaa" stroke-width="1"/><path d="M972 838.5l5 5 5-5" fill="none" stroke="#aaa" stroke-width="1"/></svg><div class="t c" style="left:914.5px;top:836px;font-size:11px;color:#111;-webkit-text-stroke:0.2px #111;transform:translateX(-50%) scaleX(0.944);">Hide Play Controls</div><div class="btn" style="left:287px;top:857.5px;width:111px;height:35px"></div><div class="abs" style="left:384.5px;top:858px;width:1px;height:34px;background:#d6d6d6;"></div><div class="btn" style="left:407.5px;top:857.5px;width:112px;height:35px"></div><div class="abs" style="left:506px;top:858px;width:1px;height:34px;background:#d6d6d6;"></div><div class="t" style="left:314px;top:869.5px;font-size:11px;color:#222;-webkit-text-stroke:0.2px #222;">= 120 BPM</div><div class="t" style="left:456px;top:869.5px;font-size:11px;color:#222;-webkit-text-stroke:0.2px #222;">100%</div><svg style="left:0;top:0" width="1920" height="1080" viewBox="0 0 1920 1080"><path d="M388.5 871.5h7l-3.5 6z" fill="#111"/><path d="M509.5 871.5h7l-3.5 6z" fill="#111"/><ellipse cx="297.3" cy="880" rx="2.9" ry="2.1" transform="rotate(-22 297.3 880)" fill="#111"/><rect x="299.3" y="867.5" width="0.9" height="12.5" fill="#111"/><circle cx="304.8" cy="880.6" r="0.8" fill="#111"/><circle cx="428" cy="875" r="11.8" fill="#fff" stroke="#222" stroke-width="1.6"/><path d="M428 875L428 865A10 10 0 1 1 420.9 882.1Z" fill="#3dbb63"/><path d="M428 875L421 882" stroke="#222" stroke-width="1.8"/></svg><div class="btn" style="left:812.5px;top:857.5px;width:36.5px;height:35px"></div><div class="btn" style="left:859px;top:857.5px;width:35.5px;height:35px;background:#f3f3f3;box-shadow:0 0 0 .5px rgba(0,0,0,.06)"></div><div class="abs" style="left:904px;top:857px;width:126px;height:36px;background:#fff;"></div><svg style="left:0;top:0" width="1920" height="1080" viewBox="0 0 1920 1080"><path d="M825 869l11 6-11 6z" fill="#2a2a33"/><rect x="870" y="868.5" width="13.5" height="13" fill="#d9d9d9"/></svg><div class="t c" style="left:966.5px;top:865.5px;font-size:18.3px;color:#7a7a7a;font-weight:bold;letter-spacing:-0.2px;">0:00:00.000</div><div class="btn" style="left:1322.5px;top:857.5px;width:36.5px;height:35px"></div><div class="btn on" style="left:1368px;top:857.5px;width:36.5px;height:35px"></div><div class="btn on" style="left:1414.5px;top:857.5px;width:36.5px;height:35px"></div><div class="btn" style="left:1460.5px;top:857.5px;width:36.5px;height:35px"></div><div class="btn" style="left:1506.5px;top:857.5px;width:36.5px;height:35px"></div><svg style="left:0;top:0" width="1920" height="1080" viewBox="0 0 1920 1080"><g transform="translate(1340 876) rotate(42) scale(.78)"><ellipse cx="0" cy="3.500" rx="4" ry="4.600" fill="#b9733a"/><ellipse cx="0" cy="-2" rx="3.200" ry="3.400" fill="#c98547"/><rect x="-.9" y="-12.500" width="1.800" height="11" fill="#2b1c10"/><rect x="-.5" y="-4" width="1" height="9" fill="#2a1a10"/></g><g fill="#0b2a5a"><rect x="1383.800" y="868.800" width=".9" height="14"/><rect x="1385.300" y="868.800" width="1.700" height="14"/><rect x="1388" y="868.800" width="1.700" height="14"/><rect x="1390.500" y="868.800" width=".9" height="14"/><circle cx="1381.800" cy="873.800" r="1"/><circle cx="1381.800" cy="878" r="1"/><circle cx="1392.600" cy="873.800" r="1"/><circle cx="1392.600" cy="878" r="1"/></g><rect x="1430.800" y="869" width="1" height="10" fill="#0b1a33"/><ellipse cx="1428.8" cy="878.8" rx="2.8" ry="2" transform="rotate(-20 1428.8 878.8)" fill="#0b1a33"/><path d="M1430.800 877.500l3.600 6.500-2-.5-1.100 1.700z" fill="#fff" stroke="#333" stroke-width=".3"/><path d="M1435.500 873c.9 1.300.9 2.900 0 4.200M1437.300 872c1.400 2 1.400 4.300 0 6.300" fill="none" stroke="#a9c8ff" stroke-width=".6"/><path d="M1476.600 869.500h5l3.600 12h-12.200z" fill="#a98a66"/><path d="M1477.800 871.500h2.600l2 8h-6.600z" fill="#6e6a60"/><rect x="1473" y="880.500" width="12.200" height="2" fill="#8a6a48"/><path d="M1478.900 879.500l.8-8" stroke="#ddd" stroke-width=".7"/><path d="M1521.200 868.500h5l3.400 12.500h-11.800z" fill="#a5572c"/><path d="M1522.400 870.500h2.600l1.900 8h-6.400z" fill="#6b3218"/><rect x="1518" y="880" width="11.500" height="2" fill="#7a3e20"/><rect x="1522.500" y="873.500" width="6.500" height="5" fill="#ececec" stroke="#888" stroke-width=".4"/><path d="M1529 876l3-2.500v5.500z" fill="#dcdcdc" stroke="#888" stroke-width=".4"/></svg><div class="abs" style="left:164px;top:897.5px;width:1592px;height:34px;background:#fdf086;"></div><div class="t c" style="left:879.5px;top:908.5px;font-size:11px;color:#111;-webkit-text-stroke:0.2px #111;transform:translateX(-50%) scaleX(0.932);">Use SHIFT + arrow keys to move the selected note(s).</div><div class="abs" style="left:1025px;top:906px;width:100px;height:16.5px;background:#f4f4f4;border:1px solid #a8a8a8"></div><div class="t c" style="left:1075px;top:908.5px;font-size:11px;color:#111;-webkit-text-stroke:0.2px #111;">Got It</div><svg style="left:1729.5px;top:907.0px" width="13.0" height="13.0" viewBox="-6.5 -6.5 13.0 13.0"><path d="M-5.5 -5.5L5.5 5.5M5.5 -5.5L-5.5 5.5" stroke="#aaa352" stroke-width="2.4" fill="none"/></svg><div class="abs" style="left:164px;top:931.5px;width:1592px;height:24px;background:linear-gradient(#c5c5c5,#c3c3c3 80%,#cacaca);"></div><div class="abs" style="left:164px;top:931px;width:1592px;height:1px;background:#b8b8b8;"></div><div class="t" style="left:172px;top:937.5px;font-size:11px;color:#111;-webkit-text-stroke:0.2px #111;transform-origin:0 50%;transform:scaleX(0.94);">Crescendo Masters v 11.28 © NCH Software</div><div class="t" style="left:703px;top:937.5px;font-size:11px;color:#111;-webkit-text-stroke:0.2px #111;transform-origin:0 50%;transform:scaleX(0.927);">No MIDI Device Selected</div><div class="abs" style="left:1468.5px;top:933.5px;width:79px;height:16.5px;background:#fff;border-radius:4px;box-shadow:0 0 0 .5px rgba(0,0,0,.15),0 .5px 1px rgba(0,0,0,.2)"></div><div class="abs" style="left:1533px;top:934.5px;width:13.5px;height:14.5px;background:linear-gradient(#2f8bff,#0869f0);border-radius:3.5px"></div><div class="t" style="left:1475px;top:936px;font-size:11px;color:#222;-webkit-text-stroke:0.2px #222;">256%</div><svg style="left:0;top:0" width="1920" height="1080" viewBox="0 0 1920 1080"><path d="M1536.8 940.5l3 3 3-3" fill="none" stroke="#fff" stroke-width="1.5" stroke-linecap="round" stroke-linejoin="round"/><circle cx="1567" cy="942.5" r="6.5" fill="#e9e9e9" stroke="#8a8a8a" stroke-width="1"/><path d="M1563.5 942.5h7" stroke="#333" stroke-width="1.4"/><circle cx="1745.5" cy="942.5" r="6.5" fill="#e9e9e9" stroke="#8a8a8a" stroke-width="1"/><path d="M1742 942.5h7M1745.5 939v7" stroke="#333" stroke-width="1.4"/><rect x="1585" y="940.5" width="143" height="3" rx="1.5" fill="#b8b8b8"/><rect x="1672.5" y="934.5" width="6" height="16.5" rx="2.5" fill="#fff" stroke="#bdbdbd" stroke-width=".5"/><rect x="1585.0" y="951" width="1" height="2.5" fill="#b0b0b0"/><rect x="1600.7" y="951" width="1" height="2.5" fill="#b0b0b0"/><rect x="1616.4" y="951" width="1" height="2.5" fill="#b0b0b0"/><rect x="1632.1" y="951" width="1" height="2.5" fill="#b0b0b0"/><rect x="1647.8" y="951" width="1" height="2.5" fill="#b0b0b0"/><rect x="1663.5" y="951" width="1" height="2.5" fill="#b0b0b0"/><rect x="1679.2" y="951" width="1" height="2.5" fill="#b0b0b0"/><rect x="1694.9" y="951" width="1" height="2.5" fill="#b0b0b0"/><rect x="1710.6" y="951" width="1" height="2.5" fill="#b0b0b0"/><rect x="1726.3" y="951" width="1" height="2.5" fill="#b0b0b0"/></svg></div></div></body></html>
